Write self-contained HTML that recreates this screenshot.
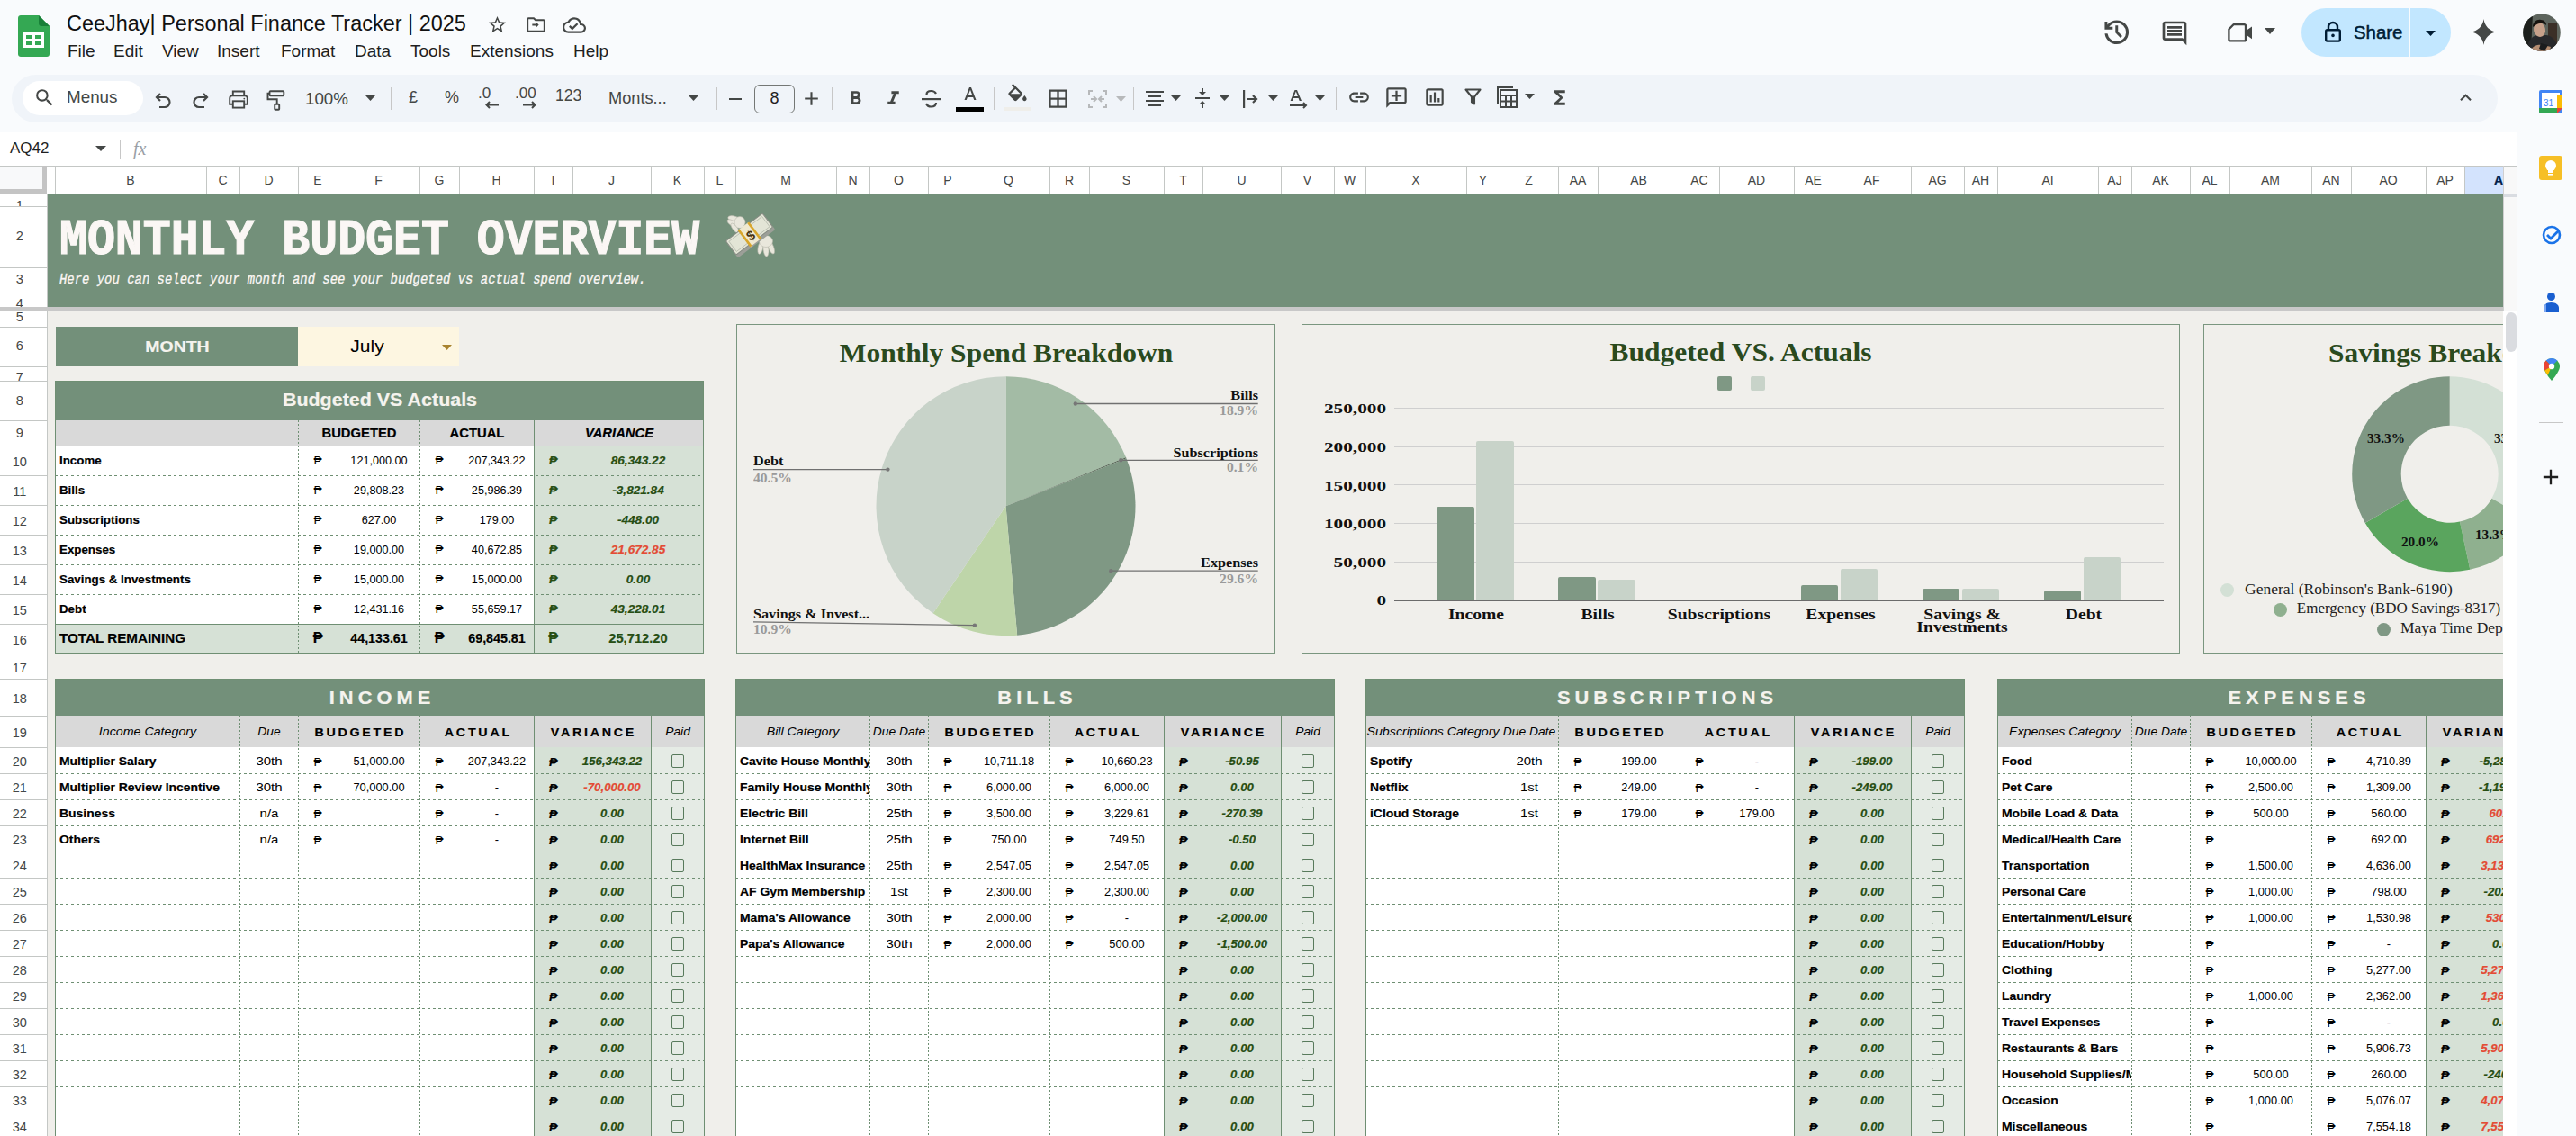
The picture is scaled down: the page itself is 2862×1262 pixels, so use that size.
<!DOCTYPE html>
<html><head><meta charset="utf-8"><title>Sheets</title>
<style>
html,body{margin:0;padding:0;}
body{width:2862px;height:1262px;overflow:hidden;position:relative;background:#f9fbfd;font-family:"Liberation Sans",sans-serif;}
body div{position:absolute;box-sizing:border-box;}
</style></head><body>
<svg style="position:absolute;left:20px;top:17px;" width="35" height="46" viewBox="0 0 35 46"><path fill="#34a853" d="M3 0h20l12 12v31c0 1.7-1.3 3-3 3H3c-1.7 0-3-1.3-3-3V3C0 1.3 1.3 0 3 0z"/><path fill="#188038" d="M23 0l12 12H26c-1.7 0-3-1.3-3-3z"/><path fill="#fff" d="M6 19h23v17H6z"/><path fill="#34a853" d="M9 22h7v4H9zM19 22h7v4h-7zM9 29h7v4H9zM19 29h7v4h-7z"/></svg>
<div style="top:11.8px;height:27.03px;line-height:27.03px;font-family:'Liberation Sans', sans-serif;font-size:24.2px;color:#111;white-space:nowrap;left:74px;transform:scaleX(0.97);transform-origin:left;">CeeJhay| Personal Finance Tracker | 2025</div>
<svg style="position:absolute;left:541px;top:16px;" width="23" height="23" viewBox="0 0 24 24"><path fill="#444746" d="M22 9.24l-7.19-.62L12 2 9.19 8.63 2 9.24l5.46 4.73L5.82 21 12 17.27 18.18 21l-1.63-7.03L22 9.24zM12 15.4l-3.76 2.27 1-4.28-3.32-2.88 4.38-.38L12 6.1l1.71 4.04 4.38.38-3.32 2.88 1 4.28L12 15.4z"/></svg>
<svg style="position:absolute;left:583px;top:15px;" width="25" height="25" viewBox="0 0 24 24"><path fill="#444746" d="M20 6h-8l-2-2H4c-1.1 0-1.99.9-1.99 2L2 18c0 1.1.9 2 2 2h16c1.1 0 2-.9 2-2V8c0-1.1-.9-2-2-2zm0 12H4V6h5.17l2 2H20v10zm-8.01-7H8v2h3.99v2L15 12l-3.01-2.99z"/></svg>
<svg style="position:absolute;left:625px;top:15px;" width="26" height="26" viewBox="0 0 24 24"><path fill="#444746" d="M19.35 10.04C18.67 6.59 15.64 4 12 4 9.11 4 6.6 5.64 5.35 8.04 2.34 8.36 0 10.91 0 14c0 3.31 2.69 6 6 6h13c2.76 0 5-2.24 5-5 0-2.64-2.05-4.78-4.65-4.96zM19 18H6c-2.21 0-4-1.79-4-4 0-2.05 1.53-3.76 3.56-3.97l1.07-.11.5-.95C8.08 7.14 9.94 6 12 6c2.62 0 4.88 1.86 5.39 4.43l.3 1.5 1.53.11c1.56.1 2.78 1.41 2.78 2.96 0 1.65-1.35 3-3 3zm-9-3.82l-2.09-2.09L6.5 13.5 10 17l6.01-6.01-1.41-1.41z"/></svg>
<div style="top:46.01px;height:21.22px;line-height:21.22px;font-family:'Liberation Sans', sans-serif;font-size:19px;color:#1f1f1f;white-space:nowrap;left:75px;">File</div>
<div style="top:46.01px;height:21.22px;line-height:21.22px;font-family:'Liberation Sans', sans-serif;font-size:19px;color:#1f1f1f;white-space:nowrap;left:126px;">Edit</div>
<div style="top:46.01px;height:21.22px;line-height:21.22px;font-family:'Liberation Sans', sans-serif;font-size:19px;color:#1f1f1f;white-space:nowrap;left:180px;">View</div>
<div style="top:46.01px;height:21.22px;line-height:21.22px;font-family:'Liberation Sans', sans-serif;font-size:19px;color:#1f1f1f;white-space:nowrap;left:241px;">Insert</div>
<div style="top:46.01px;height:21.22px;line-height:21.22px;font-family:'Liberation Sans', sans-serif;font-size:19px;color:#1f1f1f;white-space:nowrap;left:312px;">Format</div>
<div style="top:46.01px;height:21.22px;line-height:21.22px;font-family:'Liberation Sans', sans-serif;font-size:19px;color:#1f1f1f;white-space:nowrap;left:394px;">Data</div>
<div style="top:46.01px;height:21.22px;line-height:21.22px;font-family:'Liberation Sans', sans-serif;font-size:19px;color:#1f1f1f;white-space:nowrap;left:456px;">Tools</div>
<div style="top:46.01px;height:21.22px;line-height:21.22px;font-family:'Liberation Sans', sans-serif;font-size:19px;color:#1f1f1f;white-space:nowrap;left:522px;">Extensions</div>
<div style="top:46.01px;height:21.22px;line-height:21.22px;font-family:'Liberation Sans', sans-serif;font-size:19px;color:#1f1f1f;white-space:nowrap;left:637px;">Help</div>
<svg style="position:absolute;left:2334.2px;top:17.8px;" width="35.5" height="35.5" viewBox="0 -960 960 960"><path fill="#444746" d="M480-120q-138 0-240.5-91.5T122-440h82q14 104 92.5 172T480-200q117 0 198.5-81.5T760-480q0-117-81.5-198.5T480-760q-69 0-129 32t-101 88h110v80H120v-240h80v94q51-64 124.5-99T480-840q75 0 140.5 28.5t114 77q48.5 48.5 77 114T840-480q0 75-28.5 140.5t-77 114q-48.5 48.5-114 77T480-120Zm112-192L440-464v-216h80v184l128 128-56 56Z"/></svg>
<svg style="position:absolute;left:2400px;top:21px;" width="32" height="32" viewBox="0 0 24 24"><path fill="#444746" d="M21.99 4c0-1.1-.89-2-1.99-2H4c-1.1 0-2 .9-2 2v12c0 1.1.9 2 2 2h14l4 4-.01-18zM20 4v13.17L18.83 16H4V4h16zM6 12h12v2H6zm0-3h12v2H6zm0-3h12v2H6z"/></svg>
<svg style="position:absolute;left:2474px;top:24px;" width="30" height="26" viewBox="0 0 30 26"><path fill="none" stroke="#444746" stroke-width="2.3" stroke-linejoin="round" d="M7.5 3.2h12a1.5 1.5 0 011.5 1.5v15.2a1.5 1.5 0 01-1.5 1.5H3.9a1.5 1.5 0 01-1.5-1.5V8.5z"/><path fill="#444746" d="M21 10.3L28 5.4v13.8L21 14.3z"/></svg>
<svg style="position:absolute;left:2516px;top:31px;" width="12" height="8" viewBox="0 0 12 8"><path fill="#444746" d="M0 0h12L6 7z"/></svg>
<div style="left:2557px;top:9px;width:166px;height:54px;background:#c2e7ff;border-radius:27px;"></div>
<div style="left:2677px;top:9px;width:1px;height:54px;background:#f9fbfd;"></div>
<svg style="position:absolute;left:2582px;top:23px;" width="20" height="24" viewBox="0 0 20 24"><path fill="none" stroke="#001d35" stroke-width="2.4" d="M5 10V7a5 5 0 0110 0v3"/><rect x="2.2" y="10.2" width="15.6" height="12.4" rx="1.5" fill="none" stroke="#001d35" stroke-width="2.4"/><circle cx="10" cy="16.4" r="1.8" fill="#001d35"/></svg>
<div style="top:24.5px;height:22.34px;line-height:22.34px;font-family:'Liberation Sans', sans-serif;font-size:20px;color:#001d35;white-space:nowrap;left:2614.5px;transform:scaleX(1.02);transform-origin:left;-webkit-text-stroke:0.5px #001d35;">Share</div>
<svg style="position:absolute;left:2695px;top:33.5px;" width="11" height="6" viewBox="0 0 11 6"><path fill="#001d35" d="M0 0h11L5.5 6z"/></svg>
<svg style="position:absolute;left:2745px;top:21px;" width="29" height="29" viewBox="0 0 29 29"><path fill="#444746" d="M14.5 0C15.5 8 21 13.5 29 14.5 21 15.5 15.5 21 14.5 29 13.5 21 8 15.5 0 14.5 8 13.5 13.5 8 14.5 0z"/></svg>
<svg style="position:absolute;left:2803px;top:15px;" width="42" height="42" viewBox="0 0 42 42"><defs><clipPath id="av"><circle cx="21" cy="21" r="20.8"/></clipPath></defs><g clip-path="url(#av)"><rect width="42" height="42" fill="#5d645d"/><path d="M0 0h11l-2 42H0z" fill="#1c1f1c"/><rect x="28" y="11" width="10" height="26" fill="#3b2f27"/><path d="M4 42c1-10 5-17 12-18h10c7 1 12 6 13 18z" fill="#27282b"/><ellipse cx="18.5" cy="18" rx="6.5" ry="8" fill="#c6a08a" transform="rotate(-12 18.5 18)"/><path d="M11 15c0-6 5-9 9-8 4 0 6 3 6 6-3-3-8-3-12 0z" fill="#16130f"/><path d="M9 40c3-5 8-6 14-5l8 2-2 6H9z" fill="#b58d72"/><path d="M20 33l8 2-4 7-6-3z" fill="#1b1c1e"/></g></svg>
<div style="left:13px;top:83px;width:2762px;height:53px;background:#f0f4f9;border-radius:27px;"></div>
<div style="left:25px;top:90px;width:134px;height:38px;background:#ffffff;border-radius:19px;"></div>
<svg style="position:absolute;left:37px;top:96px;" width="25" height="25" viewBox="0 0 24 24"><path fill="#444746" d="M15.5 14h-.79l-.28-.27A6.471 6.471 0 0016 9.5 6.5 6.5 0 109.5 16c1.61 0 3.09-.59 4.23-1.57l.27.28v.79l5 4.99L20.49 19l-4.99-5zm-6 0C7.01 14 5 11.99 5 9.5S7.01 5 9.5 5 14 7.01 14 9.5 11.99 14 9.5 14z"/></svg>
<div style="top:98.87px;height:19.66px;line-height:19.66px;font-family:'Liberation Sans', sans-serif;font-size:17.6px;color:#444746;white-space:nowrap;left:74px;transform:scaleX(1.07);transform-origin:left;">Menus</div>
<div style="left:0px;top:1.5px;width:0;height:0;">
<svg style="position:absolute;left:172px;top:97px;" width="19" height="22" viewBox="0 0 19 22"><path fill="none" stroke="#444746" stroke-width="2.2" d="M6 5L2 9l4 4M2.5 9H11a5.5 5.5 0 010 11H5"/></svg>
<svg style="position:absolute;left:213px;top:97px;" width="19" height="22" viewBox="0 0 19 22"><path fill="none" stroke="#444746" stroke-width="2.2" d="M13 5l4 4-4 4M16.5 9H8a5.5 5.5 0 000 11h6"/></svg>
<svg style="position:absolute;left:252px;top:97px;" width="26" height="24" viewBox="0 0 26 24"><g fill="none" stroke="#444746" stroke-width="1.9"><path d="M6.8 7.2V2.5h12.4v4.7"/><path d="M6.5 16.8H3.2V10a2.6 2.6 0 012.6-2.6h14.4a2.6 2.6 0 012.6 2.6v6.8h-3.3"/><rect x="6.8" y="13.3" width="12.4" height="7.3"/></g><circle cx="19.3" cy="10.6" r="0.9" fill="#444746"/></svg>
<svg style="position:absolute;left:295px;top:97px;" width="22" height="25" viewBox="0 0 22 25"><g fill="none" stroke="#444746" stroke-width="1.9"><rect x="4.5" y="2.3" width="15.8" height="5" rx="1"/><path d="M4.5 4.8H2.5v6.5h10.2v5.5"/><rect x="10.2" y="16.8" width="5" height="6" rx="0.8"/></g></svg>
<div style="top:98.73px;height:20.33px;line-height:20.33px;font-family:'Liberation Sans', sans-serif;font-size:18.2px;color:#444746;white-space:nowrap;left:339px;transform:scaleX(1.03);transform-origin:left;">100%</div>
<svg style="position:absolute;left:406px;top:104px;" width="11" height="6" viewBox="0 0 11 6"><path fill="#444746" d="M0 0h11L5.5 6z"/></svg>
<div style="left:434px;top:95px;width:1px;height:25px;background:#c7c7c7;"></div>
<div style="top:96.01px;height:20.11px;line-height:20.11px;font-family:'Liberation Sans', sans-serif;font-size:18px;color:#444746;white-space:nowrap;left:454px;">£</div>
<div style="top:96.01px;height:20.11px;line-height:20.11px;font-family:'Liberation Sans', sans-serif;font-size:18px;color:#444746;white-space:nowrap;left:494px;">%</div>
<div style="top:92.81px;height:18.99px;line-height:18.99px;font-family:'Liberation Sans', sans-serif;font-size:17px;color:#444746;white-space:nowrap;left:531px;">.0</div>
<svg style="position:absolute;left:538px;top:110px;" width="17" height="9" viewBox="0 0 17 9"><path fill="none" stroke="#444746" stroke-width="2" d="M16 4.5H3M6 1L2.5 4.5 6 8"/></svg>
<div style="top:92.81px;height:18.99px;line-height:18.99px;font-family:'Liberation Sans', sans-serif;font-size:17px;color:#444746;white-space:nowrap;left:572px;">.00</div>
<svg style="position:absolute;left:580px;top:110px;" width="17" height="9" viewBox="0 0 17 9"><path fill="none" stroke="#444746" stroke-width="2" d="M1 4.5h13M11 1l3.5 3.5L11 8"/></svg>
<div style="top:95.46px;height:19.55px;line-height:19.55px;font-family:'Liberation Sans', sans-serif;font-size:17.5px;color:#444746;white-space:nowrap;left:617px;">123</div>
<div style="left:655px;top:95px;width:1px;height:25px;background:#c7c7c7;"></div>
<div style="top:97.73px;height:20.33px;line-height:20.33px;font-family:'Liberation Sans', sans-serif;font-size:18.2px;color:#444746;white-space:nowrap;left:676px;">Monts...</div>
<svg style="position:absolute;left:765px;top:104px;" width="11" height="6" viewBox="0 0 11 6"><path fill="#444746" d="M0 0h11L5.5 6z"/></svg>
<div style="left:796px;top:95px;width:1px;height:25px;background:#c7c7c7;"></div>
<div style="left:810px;top:107px;width:14px;height:2px;background:#444746;"></div>
<div style="left:838px;top:92px;width:45px;height:32px;border:1.3px solid #747775;border-radius:6px;"></div>
<div style="top:97.91px;height:20.11px;line-height:20.11px;font-family:'Liberation Sans', sans-serif;font-size:18px;color:#1f1f1f;white-space:nowrap;left:-139.5px;width:2000px;text-align:center;">8</div>
<svg style="position:absolute;left:889px;top:95px;" width="25" height="25" viewBox="0 0 24 24"><path fill="#444746" d="M19 13h-6v6h-2v-6H5v-2h6V5h2v6h6v2z"/></svg>
<div style="left:924px;top:95px;width:1px;height:25px;background:#c7c7c7;"></div>
<svg style="position:absolute;left:938px;top:95px;" width="25" height="25" viewBox="0 0 24 24"><path fill="#444746" d="M15.6 10.79c.97-.67 1.65-1.77 1.65-2.79 0-2.26-1.75-4-4-4H7v14h7.04c2.09 0 3.71-1.7 3.71-3.79 0-1.52-.86-2.82-2.15-3.42zM10 6.5h3c.83 0 1.5.67 1.5 1.5s-.67 1.5-1.5 1.5h-3v-3zm3.5 9H10v-3h3.5c.83 0 1.5.67 1.5 1.5s-.67 1.5-1.5 1.5z"/></svg>
<svg style="position:absolute;left:980px;top:95px;" width="25" height="25" viewBox="0 0 24 24"><path fill="#444746" d="M10 4v3h2.21l-3.42 8H6v3h8v-3h-2.21l3.42-8H18V4z"/></svg>
<svg style="position:absolute;left:1023px;top:96px;" width="23" height="24" viewBox="0 0 23 24"><path fill="none" stroke="#444746" stroke-width="2.2" d="M17 6c-1-2-3-3-5.5-3C8.5 3 6.5 4.5 6.5 7M6 17c1 2.5 3 3.5 5.5 3.5 3 0 5.5-1.5 5.5-4.5"/><path fill="#444746" d="M1 11h21v2.2H1z"/></svg>
<svg style="position:absolute;left:1066px;top:92px;" width="24" height="24" viewBox="0 0 24 24"><path fill="#444746" d="M11 3L5.5 17h2.25l1.12-3h6.25l1.12 3h2.25L13 3h-2zm-1.38 9L12 5.67 14.38 12H9.62z"/></svg>
<div style="left:1062px;top:117px;width:31px;height:5px;background:#000000;"></div>
<div style="left:1104px;top:95px;width:1px;height:25px;background:#c7c7c7;"></div>
<svg style="position:absolute;left:1117px;top:91px;" width="27" height="27" viewBox="0 0 24 24"><path fill="#444746" d="M16.56 8.94L7.62 0 6.21 1.41l2.38 2.38-5.15 5.15c-.59.59-.59 1.54 0 2.12l5.5 5.5c.29.29.68.44 1.06.44s.77-.15 1.06-.44l5.5-5.5c.59-.58.59-1.53 0-2.12zM5.21 10L10 5.21 14.79 10H5.21zM19 11.5s-2 2.17-2 3.5c0 1.1.9 2 2 2s2-.9 2-2c0-1.33-2-3.5-2-3.5z"/></svg>
<div style="left:1116px;top:117px;width:30px;height:4px;background:#efeeea;"></div>
<svg style="position:absolute;left:1162px;top:94px;" width="27" height="27" viewBox="0 0 24 24"><path fill="#444746" d="M3 3v18h18V3H3zm8 16H5v-6h6v6zm0-8H5V5h6v6zm8 8h-6v-6h6v6zm0-8h-6V5h6v6z"/></svg>
<svg style="position:absolute;left:1209px;top:98px;" width="21" height="20" viewBox="0 0 21 20"><path fill="none" stroke="#b7b9bb" stroke-width="2" d="M1 5V1h4M16 1h4v4M1 15v4h4M16 19h4v-4M3 10h5M6 7l3 3-3 3M18 10h-5M15 7l-3 3 3 3"/></svg>
<svg style="position:absolute;left:1240px;top:105px;" width="11" height="6" viewBox="0 0 11 6"><path fill="#b7b9bb" d="M0 0h11L5.5 6z"/></svg>
<div style="left:1259px;top:95px;width:1px;height:25px;background:#c7c7c7;"></div>
<svg style="position:absolute;left:1273px;top:98px;" width="20" height="20" viewBox="0 0 20 20"><path fill="#444746" d="M0 1h20v2H0zM3 6h14v2H3zM0 11h20v2H0zM3 16h14v2H3z"/></svg>
<svg style="position:absolute;left:1301px;top:104px;" width="11" height="6" viewBox="0 0 11 6"><path fill="#444746" d="M0 0h11L5.5 6z"/></svg>
<svg style="position:absolute;left:1324px;top:95px;" width="24" height="24" viewBox="0 0 24 24"><path fill="#444746" d="M8 19h3v4h2v-4h3l-4-4-4 4zm8-14h-3V1h-2v4H8l4 4 4-4zM4 11v2h16v-2H4z"/></svg>
<svg style="position:absolute;left:1355px;top:104px;" width="11" height="6" viewBox="0 0 11 6"><path fill="#444746" d="M0 0h11L5.5 6z"/></svg>
<svg style="position:absolute;left:1381px;top:98px;" width="17" height="20" viewBox="0 0 17 20"><path fill="#444746" d="M0 0h2.2v20H0z"/><path fill="none" stroke="#444746" stroke-width="2.2" d="M5 10h10M11 6l4 4-4 4"/></svg>
<svg style="position:absolute;left:1409px;top:104px;" width="11" height="6" viewBox="0 0 11 6"><path fill="#444746" d="M0 0h11L5.5 6z"/></svg>
<svg style="position:absolute;left:1432px;top:96px;" width="22" height="24" viewBox="0 0 22 24"><path fill="#444746" d="M6.5 2h2.5l5 12h-2.3l-1.1-3H5l-1.1 3H1.6zM5.8 9h4.1L7.8 3.6z"/><path fill="none" stroke="#444746" stroke-width="2" d="M1 19h18M16 16l3 3-3 3"/></svg>
<svg style="position:absolute;left:1461px;top:104px;" width="11" height="6" viewBox="0 0 11 6"><path fill="#444746" d="M0 0h11L5.5 6z"/></svg>
<div style="left:1484px;top:95px;width:1px;height:25px;background:#c7c7c7;"></div>
</div>
<svg style="position:absolute;left:1497px;top:95px;" width="26" height="26" viewBox="0 0 24 24"><path fill="#444746" d="M3.9 12c0-1.71 1.39-3.1 3.1-3.1h4V7H7c-2.76 0-5 2.24-5 5s2.24 5 5 5h4v-1.9H7c-1.71 0-3.1-1.39-3.1-3.1zM8 13h8v-2H8v2zm9-6h-4v1.9h4c1.71 0 3.1 1.39 3.1 3.1s-1.39 3.1-3.1 3.1h-4V17h4c2.76 0 5-2.24 5-5s-2.24-5-5-5z"/></svg>
<svg style="position:absolute;left:1538px;top:95px;" width="27" height="27" viewBox="0 0 24 24"><g transform="translate(24 0) scale(-1 1)"><path fill="#444746" d="M22 4c0-1.1-.9-2-2-2H4c-1.1 0-1.99.9-1.99 2L2 16c0 1.1.9 2 2 2h14l4 4V4zm-2 13.17L18.83 16H4V4h16v13.17zM13 5h-2v4H7v2h4v4h2v-4h4V9h-4z"/></g></svg>
<svg style="position:absolute;left:1581px;top:95px;" width="26" height="26" viewBox="0 0 24 24"><path fill="#444746" d="M19 3H5c-1.1 0-2 .9-2 2v14c0 1.1.9 2 2 2h14c1.1 0 2-.9 2-2V5c0-1.1-.9-2-2-2zm0 16H5V5h14v14zM7 10h2v7H7zm4-3h2v10h-2zm4 6h2v4h-2z"/></svg>
<svg style="position:absolute;left:1627px;top:98px;" width="19" height="20" viewBox="0 0 19 20"><path fill="none" stroke="#444746" stroke-width="2.1" stroke-linejoin="round" d="M1.5 1.5h16L11 9.5v8l-3-2v-6z"/></svg>
<svg style="position:absolute;left:1662px;top:95px;" width="25" height="26" viewBox="0 0 25 26"><path fill="none" stroke="#444746" stroke-width="2" d="M5 5h18v19H5zM5 11h18M5 17.5h18M11 11v13M17 11v13M2 21V2h17"/></svg>
<svg style="position:absolute;left:1694px;top:104px;" width="11" height="6" viewBox="0 0 11 6"><path fill="#444746" d="M0 0h11L5.5 6z"/></svg>
<svg style="position:absolute;left:1720px;top:96px;" width="25" height="25" viewBox="0 0 24 24"><path fill="#444746" d="M18 4H6v2l6.5 6L6 18v2h12v-3h-7l5-5-5-5h7z"/></svg>
<svg style="position:absolute;left:2727px;top:96px;" width="25" height="25" viewBox="0 0 24 24"><path fill="#444746" d="M12 8l-6 6 1.41 1.41L12 10.83l4.59 4.58L18 14z"/></svg>
<div style="left:0px;top:147px;width:2797px;height:37px;background:#ffffff;"></div>
<div style="top:155.42px;height:18.99px;line-height:18.99px;font-family:'Liberation Sans', sans-serif;font-size:17px;color:#1f1f1f;white-space:nowrap;left:11px;">AQ42</div>
<svg style="position:absolute;left:106px;top:162px;" width="12" height="6" viewBox="0 0 12 6"><path fill="#444746" d="M0 0h12L6 6z"/></svg>
<div style="left:133px;top:155px;width:1px;height:22px;background:#c7c7c7;"></div>
<div style="top:154.18px;height:22.14px;line-height:22.14px;font-family:'Liberation Serif', serif;font-size:20px;color:#9aa0a6;white-space:nowrap;left:148px;"><i>fx</i></div>
<div style="left:0px;top:184px;width:2781px;height:32px;background:#ffffff;"></div>
<div style="left:0px;top:183.5px;width:2781px;height:1px;background:#c4c7c5;"></div>
<div style="left:0px;top:185px;width:47px;height:25px;background:#f8f9fa;"></div>
<div style="left:47px;top:184px;width:5px;height:32px;background:#c4c4c4;"></div>
<div style="left:0px;top:210px;width:52px;height:6px;background:#c4c4c4;"></div>
<div style="left:61px;top:184px;width:1px;height:32px;background:#c4c7c5;"></div>
<div style="top:192.63px;height:15.64px;line-height:15.64px;font-family:'Liberation Sans', sans-serif;font-size:14px;color:#444746;white-space:nowrap;left:-855px;width:2000px;text-align:center;">B</div>
<div style="left:229px;top:184px;width:1px;height:32px;background:#c4c7c5;"></div>
<div style="top:192.63px;height:15.64px;line-height:15.64px;font-family:'Liberation Sans', sans-serif;font-size:14px;color:#444746;white-space:nowrap;left:-752.5px;width:2000px;text-align:center;">C</div>
<div style="left:266px;top:184px;width:1px;height:32px;background:#c4c7c5;"></div>
<div style="top:192.63px;height:15.64px;line-height:15.64px;font-family:'Liberation Sans', sans-serif;font-size:14px;color:#444746;white-space:nowrap;left:-701.5px;width:2000px;text-align:center;">D</div>
<div style="left:331px;top:184px;width:1px;height:32px;background:#c4c7c5;"></div>
<div style="top:192.63px;height:15.64px;line-height:15.64px;font-family:'Liberation Sans', sans-serif;font-size:14px;color:#444746;white-space:nowrap;left:-647px;width:2000px;text-align:center;">E</div>
<div style="left:375px;top:184px;width:1px;height:32px;background:#c4c7c5;"></div>
<div style="top:192.63px;height:15.64px;line-height:15.64px;font-family:'Liberation Sans', sans-serif;font-size:14px;color:#444746;white-space:nowrap;left:-579.5px;width:2000px;text-align:center;">F</div>
<div style="left:466px;top:184px;width:1px;height:32px;background:#c4c7c5;"></div>
<div style="top:192.63px;height:15.64px;line-height:15.64px;font-family:'Liberation Sans', sans-serif;font-size:14px;color:#444746;white-space:nowrap;left:-512px;width:2000px;text-align:center;">G</div>
<div style="left:510px;top:184px;width:1px;height:32px;background:#c4c7c5;"></div>
<div style="top:192.63px;height:15.64px;line-height:15.64px;font-family:'Liberation Sans', sans-serif;font-size:14px;color:#444746;white-space:nowrap;left:-448.5px;width:2000px;text-align:center;">H</div>
<div style="left:593px;top:184px;width:1px;height:32px;background:#c4c7c5;"></div>
<div style="top:192.63px;height:15.64px;line-height:15.64px;font-family:'Liberation Sans', sans-serif;font-size:14px;color:#444746;white-space:nowrap;left:-385.5px;width:2000px;text-align:center;">I</div>
<div style="left:636px;top:184px;width:1px;height:32px;background:#c4c7c5;"></div>
<div style="top:192.63px;height:15.64px;line-height:15.64px;font-family:'Liberation Sans', sans-serif;font-size:14px;color:#444746;white-space:nowrap;left:-320.5px;width:2000px;text-align:center;">J</div>
<div style="left:723px;top:184px;width:1px;height:32px;background:#c4c7c5;"></div>
<div style="top:192.63px;height:15.64px;line-height:15.64px;font-family:'Liberation Sans', sans-serif;font-size:14px;color:#444746;white-space:nowrap;left:-247.5px;width:2000px;text-align:center;">K</div>
<div style="left:782px;top:184px;width:1px;height:32px;background:#c4c7c5;"></div>
<div style="top:192.63px;height:15.64px;line-height:15.64px;font-family:'Liberation Sans', sans-serif;font-size:14px;color:#444746;white-space:nowrap;left:-200.5px;width:2000px;text-align:center;">L</div>
<div style="left:817px;top:184px;width:1px;height:32px;background:#c4c7c5;"></div>
<div style="top:192.63px;height:15.64px;line-height:15.64px;font-family:'Liberation Sans', sans-serif;font-size:14px;color:#444746;white-space:nowrap;left:-127px;width:2000px;text-align:center;">M</div>
<div style="left:929px;top:184px;width:1px;height:32px;background:#c4c7c5;"></div>
<div style="top:192.63px;height:15.64px;line-height:15.64px;font-family:'Liberation Sans', sans-serif;font-size:14px;color:#444746;white-space:nowrap;left:-52.5px;width:2000px;text-align:center;">N</div>
<div style="left:966px;top:184px;width:1px;height:32px;background:#c4c7c5;"></div>
<div style="top:192.63px;height:15.64px;line-height:15.64px;font-family:'Liberation Sans', sans-serif;font-size:14px;color:#444746;white-space:nowrap;left:-1.5px;width:2000px;text-align:center;">O</div>
<div style="left:1031px;top:184px;width:1px;height:32px;background:#c4c7c5;"></div>
<div style="top:192.63px;height:15.64px;line-height:15.64px;font-family:'Liberation Sans', sans-serif;font-size:14px;color:#444746;white-space:nowrap;left:53px;width:2000px;text-align:center;">P</div>
<div style="left:1075px;top:184px;width:1px;height:32px;background:#c4c7c5;"></div>
<div style="top:192.63px;height:15.64px;line-height:15.64px;font-family:'Liberation Sans', sans-serif;font-size:14px;color:#444746;white-space:nowrap;left:120.5px;width:2000px;text-align:center;">Q</div>
<div style="left:1166px;top:184px;width:1px;height:32px;background:#c4c7c5;"></div>
<div style="top:192.63px;height:15.64px;line-height:15.64px;font-family:'Liberation Sans', sans-serif;font-size:14px;color:#444746;white-space:nowrap;left:188px;width:2000px;text-align:center;">R</div>
<div style="left:1210px;top:184px;width:1px;height:32px;background:#c4c7c5;"></div>
<div style="top:192.63px;height:15.64px;line-height:15.64px;font-family:'Liberation Sans', sans-serif;font-size:14px;color:#444746;white-space:nowrap;left:251.5px;width:2000px;text-align:center;">S</div>
<div style="left:1293px;top:184px;width:1px;height:32px;background:#c4c7c5;"></div>
<div style="top:192.63px;height:15.64px;line-height:15.64px;font-family:'Liberation Sans', sans-serif;font-size:14px;color:#444746;white-space:nowrap;left:314.5px;width:2000px;text-align:center;">T</div>
<div style="left:1336px;top:184px;width:1px;height:32px;background:#c4c7c5;"></div>
<div style="top:192.63px;height:15.64px;line-height:15.64px;font-family:'Liberation Sans', sans-serif;font-size:14px;color:#444746;white-space:nowrap;left:379.5px;width:2000px;text-align:center;">U</div>
<div style="left:1423px;top:184px;width:1px;height:32px;background:#c4c7c5;"></div>
<div style="top:192.63px;height:15.64px;line-height:15.64px;font-family:'Liberation Sans', sans-serif;font-size:14px;color:#444746;white-space:nowrap;left:452.5px;width:2000px;text-align:center;">V</div>
<div style="left:1482px;top:184px;width:1px;height:32px;background:#c4c7c5;"></div>
<div style="top:192.63px;height:15.64px;line-height:15.64px;font-family:'Liberation Sans', sans-serif;font-size:14px;color:#444746;white-space:nowrap;left:499.5px;width:2000px;text-align:center;">W</div>
<div style="left:1517px;top:184px;width:1px;height:32px;background:#c4c7c5;"></div>
<div style="top:192.63px;height:15.64px;line-height:15.64px;font-family:'Liberation Sans', sans-serif;font-size:14px;color:#444746;white-space:nowrap;left:573px;width:2000px;text-align:center;">X</div>
<div style="left:1629px;top:184px;width:1px;height:32px;background:#c4c7c5;"></div>
<div style="top:192.63px;height:15.64px;line-height:15.64px;font-family:'Liberation Sans', sans-serif;font-size:14px;color:#444746;white-space:nowrap;left:647.5px;width:2000px;text-align:center;">Y</div>
<div style="left:1666px;top:184px;width:1px;height:32px;background:#c4c7c5;"></div>
<div style="top:192.63px;height:15.64px;line-height:15.64px;font-family:'Liberation Sans', sans-serif;font-size:14px;color:#444746;white-space:nowrap;left:698.5px;width:2000px;text-align:center;">Z</div>
<div style="left:1731px;top:184px;width:1px;height:32px;background:#c4c7c5;"></div>
<div style="top:192.63px;height:15.64px;line-height:15.64px;font-family:'Liberation Sans', sans-serif;font-size:14px;color:#444746;white-space:nowrap;left:753px;width:2000px;text-align:center;">AA</div>
<div style="left:1775px;top:184px;width:1px;height:32px;background:#c4c7c5;"></div>
<div style="top:192.63px;height:15.64px;line-height:15.64px;font-family:'Liberation Sans', sans-serif;font-size:14px;color:#444746;white-space:nowrap;left:820.5px;width:2000px;text-align:center;">AB</div>
<div style="left:1866px;top:184px;width:1px;height:32px;background:#c4c7c5;"></div>
<div style="top:192.63px;height:15.64px;line-height:15.64px;font-family:'Liberation Sans', sans-serif;font-size:14px;color:#444746;white-space:nowrap;left:888px;width:2000px;text-align:center;">AC</div>
<div style="left:1910px;top:184px;width:1px;height:32px;background:#c4c7c5;"></div>
<div style="top:192.63px;height:15.64px;line-height:15.64px;font-family:'Liberation Sans', sans-serif;font-size:14px;color:#444746;white-space:nowrap;left:951.5px;width:2000px;text-align:center;">AD</div>
<div style="left:1993px;top:184px;width:1px;height:32px;background:#c4c7c5;"></div>
<div style="top:192.63px;height:15.64px;line-height:15.64px;font-family:'Liberation Sans', sans-serif;font-size:14px;color:#444746;white-space:nowrap;left:1014.5px;width:2000px;text-align:center;">AE</div>
<div style="left:2036px;top:184px;width:1px;height:32px;background:#c4c7c5;"></div>
<div style="top:192.63px;height:15.64px;line-height:15.64px;font-family:'Liberation Sans', sans-serif;font-size:14px;color:#444746;white-space:nowrap;left:1079.5px;width:2000px;text-align:center;">AF</div>
<div style="left:2123px;top:184px;width:1px;height:32px;background:#c4c7c5;"></div>
<div style="top:192.63px;height:15.64px;line-height:15.64px;font-family:'Liberation Sans', sans-serif;font-size:14px;color:#444746;white-space:nowrap;left:1152.5px;width:2000px;text-align:center;">AG</div>
<div style="left:2182px;top:184px;width:1px;height:32px;background:#c4c7c5;"></div>
<div style="top:192.63px;height:15.64px;line-height:15.64px;font-family:'Liberation Sans', sans-serif;font-size:14px;color:#444746;white-space:nowrap;left:1200.5px;width:2000px;text-align:center;">AH</div>
<div style="left:2219px;top:184px;width:1px;height:32px;background:#c4c7c5;"></div>
<div style="top:192.63px;height:15.64px;line-height:15.64px;font-family:'Liberation Sans', sans-serif;font-size:14px;color:#444746;white-space:nowrap;left:1275px;width:2000px;text-align:center;">AI</div>
<div style="left:2331px;top:184px;width:1px;height:32px;background:#c4c7c5;"></div>
<div style="top:192.63px;height:15.64px;line-height:15.64px;font-family:'Liberation Sans', sans-serif;font-size:14px;color:#444746;white-space:nowrap;left:1349.5px;width:2000px;text-align:center;">AJ</div>
<div style="left:2368px;top:184px;width:1px;height:32px;background:#c4c7c5;"></div>
<div style="top:192.63px;height:15.64px;line-height:15.64px;font-family:'Liberation Sans', sans-serif;font-size:14px;color:#444746;white-space:nowrap;left:1400.5px;width:2000px;text-align:center;">AK</div>
<div style="left:2433px;top:184px;width:1px;height:32px;background:#c4c7c5;"></div>
<div style="top:192.63px;height:15.64px;line-height:15.64px;font-family:'Liberation Sans', sans-serif;font-size:14px;color:#444746;white-space:nowrap;left:1455px;width:2000px;text-align:center;">AL</div>
<div style="left:2477px;top:184px;width:1px;height:32px;background:#c4c7c5;"></div>
<div style="top:192.63px;height:15.64px;line-height:15.64px;font-family:'Liberation Sans', sans-serif;font-size:14px;color:#444746;white-space:nowrap;left:1522.5px;width:2000px;text-align:center;">AM</div>
<div style="left:2568px;top:184px;width:1px;height:32px;background:#c4c7c5;"></div>
<div style="top:192.63px;height:15.64px;line-height:15.64px;font-family:'Liberation Sans', sans-serif;font-size:14px;color:#444746;white-space:nowrap;left:1590px;width:2000px;text-align:center;">AN</div>
<div style="left:2612px;top:184px;width:1px;height:32px;background:#c4c7c5;"></div>
<div style="top:192.63px;height:15.64px;line-height:15.64px;font-family:'Liberation Sans', sans-serif;font-size:14px;color:#444746;white-space:nowrap;left:1653.5px;width:2000px;text-align:center;">AO</div>
<div style="left:2695px;top:184px;width:1px;height:32px;background:#c4c7c5;"></div>
<div style="top:192.63px;height:15.64px;line-height:15.64px;font-family:'Liberation Sans', sans-serif;font-size:14px;color:#444746;white-space:nowrap;left:1716.5px;width:2000px;text-align:center;">AP</div>
<div style="left:2738px;top:184px;width:1px;height:32px;background:#c4c7c5;"></div>
<div style="left:2739px;top:185px;width:42px;height:31px;background:#d3e3fd;"></div>
<div style="left:2738px;top:184px;width:43px;height:32px;overflow:hidden;">
<div style="top:8.63px;height:15.64px;line-height:15.64px;font-family:'Liberation Sans', sans-serif;font-size:14px;color:#041e49;white-space:nowrap;font-weight:700;-webkit-text-stroke:0.2px #041e49;left:-956.5px;width:2000px;text-align:center;">AQ</div>
</div>
<div style="left:2825px;top:184px;width:1px;height:32px;background:#c4c7c5;"></div>
<div style="left:52px;top:215.5px;width:2729px;height:1px;background:#c4c7c5;"></div>
<div style="left:0px;top:216px;width:52px;height:1046px;background:#ffffff;"></div>
<div style="left:52px;top:216px;width:1px;height:1046px;background:#c4c7c5;"></div>
<div style="left:0px;top:216px;width:52px;height:13.5px;overflow:hidden;">
<div style="top:3.88px;height:16.2px;line-height:16.2px;font-family:'Liberation Sans', sans-serif;font-size:14.5px;color:#444746;white-space:nowrap;left:-978.3px;width:2000px;text-align:center;">1</div>
</div>
<div style="left:0px;top:228.5px;width:52px;height:1px;background:#c4c7c5;"></div>
<div style="top:253.88px;height:16.2px;line-height:16.2px;font-family:'Liberation Sans', sans-serif;font-size:14.5px;color:#444746;white-space:nowrap;left:-978.3px;width:2000px;text-align:center;">2</div>
<div style="left:0px;top:296.5px;width:52px;height:1px;background:#c4c7c5;"></div>
<div style="top:302.08px;height:16.2px;line-height:16.2px;font-family:'Liberation Sans', sans-serif;font-size:14.5px;color:#444746;white-space:nowrap;left:-978.3px;width:2000px;text-align:center;">3</div>
<div style="left:0px;top:324.5px;width:52px;height:1px;background:#c4c7c5;"></div>
<div style="left:0px;top:325px;width:52px;height:15.5px;overflow:hidden;">
<div style="top:4.38px;height:16.2px;line-height:16.2px;font-family:'Liberation Sans', sans-serif;font-size:14.5px;color:#444746;white-space:nowrap;left:-978.3px;width:2000px;text-align:center;">4</div>
</div>
<div style="left:0px;top:345px;width:52px;height:18px;overflow:hidden;">
<div style="top:-0.92px;height:16.2px;line-height:16.2px;font-family:'Liberation Sans', sans-serif;font-size:14.5px;color:#444746;white-space:nowrap;left:-978.3px;width:2000px;text-align:center;">5</div>
</div>
<div style="left:0px;top:362.5px;width:52px;height:1px;background:#c4c7c5;"></div>
<div style="top:376.08px;height:16.2px;line-height:16.2px;font-family:'Liberation Sans', sans-serif;font-size:14.5px;color:#444746;white-space:nowrap;left:-978.3px;width:2000px;text-align:center;">6</div>
<div style="left:0px;top:406.5px;width:52px;height:1px;background:#c4c7c5;"></div>
<div style="left:0px;top:407px;width:52px;height:16px;overflow:hidden;">
<div style="top:4.38px;height:16.2px;line-height:16.2px;font-family:'Liberation Sans', sans-serif;font-size:14.5px;color:#444746;white-space:nowrap;left:-978.3px;width:2000px;text-align:center;">7</div>
</div>
<div style="left:0px;top:422.5px;width:52px;height:1px;background:#c4c7c5;"></div>
<div style="top:436.68px;height:16.2px;line-height:16.2px;font-family:'Liberation Sans', sans-serif;font-size:14.5px;color:#444746;white-space:nowrap;left:-978.3px;width:2000px;text-align:center;">8</div>
<div style="left:0px;top:466.5px;width:52px;height:1px;background:#c4c7c5;"></div>
<div style="top:473.38px;height:16.2px;line-height:16.2px;font-family:'Liberation Sans', sans-serif;font-size:14.5px;color:#444746;white-space:nowrap;left:-978.3px;width:2000px;text-align:center;">9</div>
<div style="left:0px;top:494.5px;width:52px;height:1px;background:#c4c7c5;"></div>
<div style="top:505.38px;height:16.2px;line-height:16.2px;font-family:'Liberation Sans', sans-serif;font-size:14.5px;color:#444746;white-space:nowrap;left:-978.3px;width:2000px;text-align:center;">10</div>
<div style="left:0px;top:527.5px;width:52px;height:1px;background:#c4c7c5;"></div>
<div style="top:538.38px;height:16.2px;line-height:16.2px;font-family:'Liberation Sans', sans-serif;font-size:14.5px;color:#444746;white-space:nowrap;left:-978.3px;width:2000px;text-align:center;">11</div>
<div style="left:0px;top:560.5px;width:52px;height:1px;background:#c4c7c5;"></div>
<div style="top:571.38px;height:16.2px;line-height:16.2px;font-family:'Liberation Sans', sans-serif;font-size:14.5px;color:#444746;white-space:nowrap;left:-978.3px;width:2000px;text-align:center;">12</div>
<div style="left:0px;top:593.5px;width:52px;height:1px;background:#c4c7c5;"></div>
<div style="top:604.38px;height:16.2px;line-height:16.2px;font-family:'Liberation Sans', sans-serif;font-size:14.5px;color:#444746;white-space:nowrap;left:-978.3px;width:2000px;text-align:center;">13</div>
<div style="left:0px;top:626.5px;width:52px;height:1px;background:#c4c7c5;"></div>
<div style="top:637.38px;height:16.2px;line-height:16.2px;font-family:'Liberation Sans', sans-serif;font-size:14.5px;color:#444746;white-space:nowrap;left:-978.3px;width:2000px;text-align:center;">14</div>
<div style="left:0px;top:659.5px;width:52px;height:1px;background:#c4c7c5;"></div>
<div style="top:670.38px;height:16.2px;line-height:16.2px;font-family:'Liberation Sans', sans-serif;font-size:14.5px;color:#444746;white-space:nowrap;left:-978.3px;width:2000px;text-align:center;">15</div>
<div style="left:0px;top:692.5px;width:52px;height:1px;background:#c4c7c5;"></div>
<div style="top:703.38px;height:16.2px;line-height:16.2px;font-family:'Liberation Sans', sans-serif;font-size:14.5px;color:#444746;white-space:nowrap;left:-978.3px;width:2000px;text-align:center;">16</div>
<div style="left:0px;top:725.5px;width:52px;height:1px;background:#c4c7c5;"></div>
<div style="top:733.88px;height:16.2px;line-height:16.2px;font-family:'Liberation Sans', sans-serif;font-size:14.5px;color:#444746;white-space:nowrap;left:-978.3px;width:2000px;text-align:center;">17</div>
<div style="left:0px;top:753.5px;width:52px;height:1px;background:#c4c7c5;"></div>
<div style="top:768.38px;height:16.2px;line-height:16.2px;font-family:'Liberation Sans', sans-serif;font-size:14.5px;color:#444746;white-space:nowrap;left:-978.3px;width:2000px;text-align:center;">18</div>
<div style="left:0px;top:794.5px;width:52px;height:1px;background:#c4c7c5;"></div>
<div style="top:806.38px;height:16.2px;line-height:16.2px;font-family:'Liberation Sans', sans-serif;font-size:14.5px;color:#444746;white-space:nowrap;left:-978.3px;width:2000px;text-align:center;">19</div>
<div style="left:0px;top:829.5px;width:52px;height:1px;background:#c4c7c5;"></div>
<div style="top:838.38px;height:16.2px;line-height:16.2px;font-family:'Liberation Sans', sans-serif;font-size:14.5px;color:#444746;white-space:nowrap;left:-978.3px;width:2000px;text-align:center;">20</div>
<div style="left:0px;top:858.5px;width:52px;height:1px;background:#c4c7c5;"></div>
<div style="top:867.38px;height:16.2px;line-height:16.2px;font-family:'Liberation Sans', sans-serif;font-size:14.5px;color:#444746;white-space:nowrap;left:-978.3px;width:2000px;text-align:center;">21</div>
<div style="left:0px;top:887.5px;width:52px;height:1px;background:#c4c7c5;"></div>
<div style="top:896.38px;height:16.2px;line-height:16.2px;font-family:'Liberation Sans', sans-serif;font-size:14.5px;color:#444746;white-space:nowrap;left:-978.3px;width:2000px;text-align:center;">22</div>
<div style="left:0px;top:916.5px;width:52px;height:1px;background:#c4c7c5;"></div>
<div style="top:925.38px;height:16.2px;line-height:16.2px;font-family:'Liberation Sans', sans-serif;font-size:14.5px;color:#444746;white-space:nowrap;left:-978.3px;width:2000px;text-align:center;">23</div>
<div style="left:0px;top:945.5px;width:52px;height:1px;background:#c4c7c5;"></div>
<div style="top:954.38px;height:16.2px;line-height:16.2px;font-family:'Liberation Sans', sans-serif;font-size:14.5px;color:#444746;white-space:nowrap;left:-978.3px;width:2000px;text-align:center;">24</div>
<div style="left:0px;top:974.5px;width:52px;height:1px;background:#c4c7c5;"></div>
<div style="top:983.38px;height:16.2px;line-height:16.2px;font-family:'Liberation Sans', sans-serif;font-size:14.5px;color:#444746;white-space:nowrap;left:-978.3px;width:2000px;text-align:center;">25</div>
<div style="left:0px;top:1003.5px;width:52px;height:1px;background:#c4c7c5;"></div>
<div style="top:1012.38px;height:16.2px;line-height:16.2px;font-family:'Liberation Sans', sans-serif;font-size:14.5px;color:#444746;white-space:nowrap;left:-978.3px;width:2000px;text-align:center;">26</div>
<div style="left:0px;top:1032.5px;width:52px;height:1px;background:#c4c7c5;"></div>
<div style="top:1041.38px;height:16.2px;line-height:16.2px;font-family:'Liberation Sans', sans-serif;font-size:14.5px;color:#444746;white-space:nowrap;left:-978.3px;width:2000px;text-align:center;">27</div>
<div style="left:0px;top:1061.5px;width:52px;height:1px;background:#c4c7c5;"></div>
<div style="top:1070.38px;height:16.2px;line-height:16.2px;font-family:'Liberation Sans', sans-serif;font-size:14.5px;color:#444746;white-space:nowrap;left:-978.3px;width:2000px;text-align:center;">28</div>
<div style="left:0px;top:1090.5px;width:52px;height:1px;background:#c4c7c5;"></div>
<div style="top:1099.38px;height:16.2px;line-height:16.2px;font-family:'Liberation Sans', sans-serif;font-size:14.5px;color:#444746;white-space:nowrap;left:-978.3px;width:2000px;text-align:center;">29</div>
<div style="left:0px;top:1119.5px;width:52px;height:1px;background:#c4c7c5;"></div>
<div style="top:1128.38px;height:16.2px;line-height:16.2px;font-family:'Liberation Sans', sans-serif;font-size:14.5px;color:#444746;white-space:nowrap;left:-978.3px;width:2000px;text-align:center;">30</div>
<div style="left:0px;top:1148.5px;width:52px;height:1px;background:#c4c7c5;"></div>
<div style="top:1157.38px;height:16.2px;line-height:16.2px;font-family:'Liberation Sans', sans-serif;font-size:14.5px;color:#444746;white-space:nowrap;left:-978.3px;width:2000px;text-align:center;">31</div>
<div style="left:0px;top:1177.5px;width:52px;height:1px;background:#c4c7c5;"></div>
<div style="top:1186.38px;height:16.2px;line-height:16.2px;font-family:'Liberation Sans', sans-serif;font-size:14.5px;color:#444746;white-space:nowrap;left:-978.3px;width:2000px;text-align:center;">32</div>
<div style="left:0px;top:1206.5px;width:52px;height:1px;background:#c4c7c5;"></div>
<div style="top:1215.38px;height:16.2px;line-height:16.2px;font-family:'Liberation Sans', sans-serif;font-size:14.5px;color:#444746;white-space:nowrap;left:-978.3px;width:2000px;text-align:center;">33</div>
<div style="left:0px;top:1235.5px;width:52px;height:1px;background:#c4c7c5;"></div>
<div style="top:1244.38px;height:16.2px;line-height:16.2px;font-family:'Liberation Sans', sans-serif;font-size:14.5px;color:#444746;white-space:nowrap;left:-978.3px;width:2000px;text-align:center;">34</div>
<div style="left:0px;top:1264.5px;width:52px;height:1px;background:#c4c7c5;"></div>
<div style="left:2781px;top:216px;width:16px;height:1046px;background:#ffffff;"></div>
<div style="left:2781px;top:184px;width:16px;height:162px;background:#f8f8f8;"></div>
<div style="left:2781px;top:184px;width:16px;height:1px;background:#c4c7c5;"></div>
<div style="left:2781px;top:184px;width:1px;height:162px;background:#d0d0d0;"></div>
<div style="left:2782px;top:215.5px;width:15px;height:3px;background:#d9dce1;"></div>
<div style="left:2783.5px;top:347px;width:12.5px;height:44px;background:#dadce0;border-radius:6px;"></div>
<div style="left:2797px;top:147px;width:65px;height:1115px;background:#f9fbfd;"></div>
<svg style="position:absolute;left:2821px;top:100px;" width="26" height="26" viewBox="0 0 26 26"><rect x="0" y="0" width="26" height="26" rx="2" fill="#4285f4"/><rect x="3" y="3" width="20" height="20" fill="#fff"/><path d="M0 20h20v6H2c-1 0-2-1-2-2z" fill="#34a853"/><path d="M20 6h6v14h-6z" fill="#fbbc04"/><path d="M20 20h6l-6 6z" fill="#ea4335"/><text x="10.5" y="18" font-family="Liberation Sans" font-size="10" fill="#4285f4" text-anchor="middle">31</text></svg>
<svg style="position:absolute;left:2821px;top:173px;" width="26" height="27" viewBox="0 0 26 27"><rect width="26" height="27" rx="3" fill="#f6bf26"/><circle cx="13" cy="11" r="6" fill="#fff"/><rect x="10" y="16" width="6" height="3" fill="#fff"/><rect x="10" y="20" width="6" height="1.6" fill="#fff"/></svg>
<svg style="position:absolute;left:2823px;top:249px;" width="23" height="24" viewBox="0 0 23 24"><circle cx="12" cy="12" r="9" fill="none" stroke="#1a73e8" stroke-width="2.6"/><path d="M7 12l4 4 9-9" fill="none" stroke="#1a73e8" stroke-width="2.8"/></svg>
<svg style="position:absolute;left:2825px;top:325px;" width="19" height="22" viewBox="0 0 19 22"><circle cx="9.5" cy="4.5" r="4.5" fill="#1a5fd0"/><path d="M1 22v-5c0-3 3-6 8.5-6S18 14 18 17v5z" fill="#1a5fd0"/><path d="M1 22v-5c0-2 1-3 3-4v9z" fill="#7da7f0"/></svg>
<svg style="position:absolute;left:2826px;top:398px;" width="18" height="25" viewBox="0 0 18 25"><path d="M9 0a9 9 0 00-9 9c0 6 9 16 9 16s9-10 9-16a9 9 0 00-9-9z" fill="#34a853"/><path d="M9 0a9 9 0 00-6.4 2.6L9 9l6.4-6.4A9 9 0 009 0z" fill="#4285f4"/><path d="M2.6 2.6A9 9 0 000 9c0 1.5.5 3 1.2 4.5L9 9z" fill="#ea4335"/><path d="M1.2 13.5c1 2 2.5 4 3.5 5.5L9 9z" fill="#fbbc04"/><circle cx="9" cy="9" r="3.2" fill="#fff"/></svg>
<div style="left:2821px;top:469px;width:27px;height:1px;background:#c7c7c7;"></div>
<svg style="position:absolute;left:2820px;top:516px;" width="28" height="28" viewBox="0 0 24 24"><path fill="#1f1f1f" d="M19 13h-6v6h-2v-6H5v-2h6V5h2v6h6v2z"/></svg>
<div style="left:53px;top:216px;width:2728px;height:1046px;overflow:hidden;">
<div style="left:0px;top:0px;width:2728px;height:1046px;background:#f0efeb;"></div>
<div style="left:0px;top:0px;width:2728px;height:125px;background:#73907a;"></div>
<div style="top:19.85px;height:63.45px;line-height:63.45px;font-family:'Liberation Mono', monospace;font-size:56px;color:#fbf7f5;white-space:nowrap;font-weight:700;left:13px;transform:scaleX(0.92);transform-origin:left;-webkit-text-stroke:1.2px #fbf7f5;">MONTHLY BUDGET OVERVIEW</div>
<svg style="position:absolute;left:747px;top:14px;" width="70" height="65" viewBox="0 0 70 65"><g fill="#e9e7dc" stroke="#b9b8ad" stroke-width="0.6"><ellipse cx="16" cy="13.5" rx="7.5" ry="3.3" transform="rotate(18 16 13.5)"/><ellipse cx="14.5" cy="18.5" rx="7.5" ry="3" transform="rotate(32 14.5 18.5)"/><ellipse cx="16.5" cy="23.5" rx="6.5" ry="2.6" transform="rotate(52 16.5 23.5)"/><ellipse cx="22" cy="17" rx="6" ry="6.5"/><ellipse cx="45" cy="45" rx="2.8" ry="7.5" transform="rotate(12 45 45)"/><ellipse cx="51" cy="47" rx="3" ry="8" transform="rotate(-5 51 47)"/><ellipse cx="56.5" cy="44.5" rx="3" ry="8" transform="rotate(-22 56.5 44.5)"/><ellipse cx="51" cy="38" rx="7.5" ry="6.5"/></g><g transform="rotate(-37 34 32)"><rect x="8" y="22" width="52" height="21" rx="2" fill="#9c9f98"/><rect x="8.5" y="20" width="51" height="19" rx="1.5" fill="#e3e5d6" stroke="#858a82" stroke-width="1"/><rect x="11" y="22.5" width="46" height="14" fill="none" stroke="#b7bcae" stroke-width="0.8"/><rect x="27" y="18.5" width="14" height="23" fill="#efe9d0"/><rect x="26" y="18.5" width="2.6" height="23" fill="#d8a62c"/><rect x="39.4" y="18.5" width="2.6" height="23" fill="#d8a62c"/></g><text x="33.5" y="37" font-family="Liberation Sans" font-weight="700" font-size="15" fill="#4a3512" text-anchor="middle" transform="rotate(-30 33.5 31)">$</text></svg>
<div style="top:86.17px;height:18.13px;line-height:18.13px;font-family:'Liberation Mono', monospace;font-size:16px;color:#fbf7f5;white-space:nowrap;font-style:italic;left:12.7px;transform:scaleX(0.87);transform-origin:left;-webkit-text-stroke:0.3px #fbf7f5;">Here you can select your month and see your budgeted vs actual spend overview.</div>
</div>
<div style="left:0px;top:340.5px;width:2781px;height:5px;background:#c8c8c8;"></div>
<div style="left:53px;top:216px;width:2728px;height:1046px;overflow:hidden;">
<div style="left:9px;top:147px;width:269px;height:44px;background:#73907a;"></div>
<div style="top:159.75px;height:19.44px;line-height:19.44px;font-family:'Liberation Sans', sans-serif;font-size:17.4px;color:#f5f3ee;white-space:nowrap;font-weight:700;-webkit-text-stroke:0.2px #f5f3ee;left:-856.5px;width:2000px;text-align:center;transform:scaleX(1.12);transform-origin:center;">MONTH</div>
<div style="left:278px;top:147px;width:179px;height:44px;background:#fdf6e1;"></div>
<div style="top:159.26px;height:20.66px;line-height:20.66px;font-family:'Liberation Sans', sans-serif;font-size:18.5px;color:#000;white-space:nowrap;left:-645px;width:2000px;text-align:center;transform:scaleX(1.14);transform-origin:center;">July</div>
<svg style="position:absolute;left:438px;top:167px;" width="11" height="6" viewBox="0 0 11 6"><path fill="#a8832f" d="M0 0h11L5.5 6z"/></svg>
<div style="left:8px;top:207px;width:721px;height:44px;background:#73907a;"></div>
<div style="top:217.85px;height:21.78px;line-height:21.78px;font-family:'Liberation Sans', sans-serif;font-size:19.5px;color:#f5f3ee;white-space:nowrap;font-weight:700;-webkit-text-stroke:0.2px #f5f3ee;left:-631.5px;width:2000px;text-align:center;transform:scaleX(1.1);transform-origin:center;">Budgeted VS Actuals</div>
<div style="left:8px;top:251px;width:721px;height:28px;background:#d9d9d9;"></div>
<div style="left:8px;top:279px;width:532px;height:198px;background:#ffffff;"></div>
<div style="left:540px;top:279px;width:189px;height:231px;background:#d6e1d6;"></div>
<div style="left:8px;top:477px;width:532px;height:33px;background:#d6e1d6;"></div>
<div style="top:256.68px;height:16.2px;line-height:16.2px;font-family:'Liberation Sans', sans-serif;font-size:14.5px;color:#000;white-space:nowrap;font-weight:700;-webkit-text-stroke:0.2px #000;left:-654.5px;width:2000px;text-align:center;transform:scaleX(1.02);transform-origin:center;">BUDGETED</div>
<div style="top:256.68px;height:16.2px;line-height:16.2px;font-family:'Liberation Sans', sans-serif;font-size:14.5px;color:#000;white-space:nowrap;font-weight:700;-webkit-text-stroke:0.2px #000;left:-523.5px;width:2000px;text-align:center;transform:scaleX(1.02);transform-origin:center;">ACTUAL</div>
<div style="top:256.68px;height:16.2px;line-height:16.2px;font-family:'Liberation Sans', sans-serif;font-size:14.5px;color:#000;white-space:nowrap;font-weight:700;-webkit-text-stroke:0.2px #000;font-style:italic;left:-365.5px;width:2000px;text-align:center;transform:scaleX(1.02);transform-origin:center;">VARIANCE</div>
<div style="top:288.19px;height:15.19px;line-height:15.19px;font-family:'Liberation Sans', sans-serif;font-size:13.6px;color:#000;white-space:nowrap;font-weight:700;-webkit-text-stroke:0.2px #000;left:13px;transform:scaleX(0.98);transform-origin:left;">Income</div>
<div style="top:288.28px;height:15.08px;line-height:15.08px;font-family:'Liberation Sans', sans-serif;font-size:13.5px;color:#000;white-space:nowrap;left:-700px;width:2000px;text-align:center;">₱</div>
<div style="top:288.19px;height:15.19px;line-height:15.19px;font-family:'Liberation Sans', sans-serif;font-size:13.6px;color:#000;white-space:nowrap;left:-632.5px;width:2000px;text-align:center;transform:scaleX(0.93);transform-origin:center;">121,000.00</div>
<div style="top:288.28px;height:15.08px;line-height:15.08px;font-family:'Liberation Sans', sans-serif;font-size:13.5px;color:#000;white-space:nowrap;left:-565px;width:2000px;text-align:center;">₱</div>
<div style="top:288.19px;height:15.19px;line-height:15.19px;font-family:'Liberation Sans', sans-serif;font-size:13.6px;color:#000;white-space:nowrap;left:-501.5px;width:2000px;text-align:center;transform:scaleX(0.93);transform-origin:center;">207,343.22</div>
<div style="top:288.28px;height:15.08px;line-height:15.08px;font-family:'Liberation Sans', sans-serif;font-size:13.5px;color:#274e13;white-space:nowrap;font-weight:700;-webkit-text-stroke:0.2px #274e13;font-style:italic;left:-438.5px;width:2000px;text-align:center;">₱</div>
<div style="top:288.19px;height:15.19px;line-height:15.19px;font-family:'Liberation Sans', sans-serif;font-size:13.6px;color:#274e13;white-space:nowrap;font-weight:700;-webkit-text-stroke:0.2px #274e13;font-style:italic;left:-344px;width:2000px;text-align:center;">86,343.22</div>
<div style="left:8px;top:311.5px;width:721px;height:1px;background:repeating-linear-gradient(90deg,#6f8f73 0 3px,transparent 3px 6px);"></div>
<div style="top:321.19px;height:15.19px;line-height:15.19px;font-family:'Liberation Sans', sans-serif;font-size:13.6px;color:#000;white-space:nowrap;font-weight:700;-webkit-text-stroke:0.2px #000;left:13px;transform:scaleX(0.98);transform-origin:left;">Bills</div>
<div style="top:321.28px;height:15.08px;line-height:15.08px;font-family:'Liberation Sans', sans-serif;font-size:13.5px;color:#000;white-space:nowrap;left:-700px;width:2000px;text-align:center;">₱</div>
<div style="top:321.19px;height:15.19px;line-height:15.19px;font-family:'Liberation Sans', sans-serif;font-size:13.6px;color:#000;white-space:nowrap;left:-632.5px;width:2000px;text-align:center;transform:scaleX(0.93);transform-origin:center;">29,808.23</div>
<div style="top:321.28px;height:15.08px;line-height:15.08px;font-family:'Liberation Sans', sans-serif;font-size:13.5px;color:#000;white-space:nowrap;left:-565px;width:2000px;text-align:center;">₱</div>
<div style="top:321.19px;height:15.19px;line-height:15.19px;font-family:'Liberation Sans', sans-serif;font-size:13.6px;color:#000;white-space:nowrap;left:-501.5px;width:2000px;text-align:center;transform:scaleX(0.93);transform-origin:center;">25,986.39</div>
<div style="top:321.28px;height:15.08px;line-height:15.08px;font-family:'Liberation Sans', sans-serif;font-size:13.5px;color:#274e13;white-space:nowrap;font-weight:700;-webkit-text-stroke:0.2px #274e13;font-style:italic;left:-438.5px;width:2000px;text-align:center;">₱</div>
<div style="top:321.19px;height:15.19px;line-height:15.19px;font-family:'Liberation Sans', sans-serif;font-size:13.6px;color:#274e13;white-space:nowrap;font-weight:700;-webkit-text-stroke:0.2px #274e13;font-style:italic;left:-344px;width:2000px;text-align:center;">-3,821.84</div>
<div style="left:8px;top:344.5px;width:721px;height:1px;background:repeating-linear-gradient(90deg,#6f8f73 0 3px,transparent 3px 6px);"></div>
<div style="top:354.19px;height:15.19px;line-height:15.19px;font-family:'Liberation Sans', sans-serif;font-size:13.6px;color:#000;white-space:nowrap;font-weight:700;-webkit-text-stroke:0.2px #000;left:13px;transform:scaleX(0.98);transform-origin:left;">Subscriptions</div>
<div style="top:354.28px;height:15.08px;line-height:15.08px;font-family:'Liberation Sans', sans-serif;font-size:13.5px;color:#000;white-space:nowrap;left:-700px;width:2000px;text-align:center;">₱</div>
<div style="top:354.19px;height:15.19px;line-height:15.19px;font-family:'Liberation Sans', sans-serif;font-size:13.6px;color:#000;white-space:nowrap;left:-632.5px;width:2000px;text-align:center;transform:scaleX(0.93);transform-origin:center;">627.00</div>
<div style="top:354.28px;height:15.08px;line-height:15.08px;font-family:'Liberation Sans', sans-serif;font-size:13.5px;color:#000;white-space:nowrap;left:-565px;width:2000px;text-align:center;">₱</div>
<div style="top:354.19px;height:15.19px;line-height:15.19px;font-family:'Liberation Sans', sans-serif;font-size:13.6px;color:#000;white-space:nowrap;left:-501.5px;width:2000px;text-align:center;transform:scaleX(0.93);transform-origin:center;">179.00</div>
<div style="top:354.28px;height:15.08px;line-height:15.08px;font-family:'Liberation Sans', sans-serif;font-size:13.5px;color:#274e13;white-space:nowrap;font-weight:700;-webkit-text-stroke:0.2px #274e13;font-style:italic;left:-438.5px;width:2000px;text-align:center;">₱</div>
<div style="top:354.19px;height:15.19px;line-height:15.19px;font-family:'Liberation Sans', sans-serif;font-size:13.6px;color:#274e13;white-space:nowrap;font-weight:700;-webkit-text-stroke:0.2px #274e13;font-style:italic;left:-344px;width:2000px;text-align:center;">-448.00</div>
<div style="left:8px;top:377.5px;width:721px;height:1px;background:repeating-linear-gradient(90deg,#6f8f73 0 3px,transparent 3px 6px);"></div>
<div style="top:387.19px;height:15.19px;line-height:15.19px;font-family:'Liberation Sans', sans-serif;font-size:13.6px;color:#000;white-space:nowrap;font-weight:700;-webkit-text-stroke:0.2px #000;left:13px;transform:scaleX(0.98);transform-origin:left;">Expenses</div>
<div style="top:387.28px;height:15.08px;line-height:15.08px;font-family:'Liberation Sans', sans-serif;font-size:13.5px;color:#000;white-space:nowrap;left:-700px;width:2000px;text-align:center;">₱</div>
<div style="top:387.19px;height:15.19px;line-height:15.19px;font-family:'Liberation Sans', sans-serif;font-size:13.6px;color:#000;white-space:nowrap;left:-632.5px;width:2000px;text-align:center;transform:scaleX(0.93);transform-origin:center;">19,000.00</div>
<div style="top:387.28px;height:15.08px;line-height:15.08px;font-family:'Liberation Sans', sans-serif;font-size:13.5px;color:#000;white-space:nowrap;left:-565px;width:2000px;text-align:center;">₱</div>
<div style="top:387.19px;height:15.19px;line-height:15.19px;font-family:'Liberation Sans', sans-serif;font-size:13.6px;color:#000;white-space:nowrap;left:-501.5px;width:2000px;text-align:center;transform:scaleX(0.93);transform-origin:center;">40,672.85</div>
<div style="top:387.28px;height:15.08px;line-height:15.08px;font-family:'Liberation Sans', sans-serif;font-size:13.5px;color:#274e13;white-space:nowrap;font-weight:700;-webkit-text-stroke:0.2px #274e13;font-style:italic;left:-438.5px;width:2000px;text-align:center;">₱</div>
<div style="top:387.19px;height:15.19px;line-height:15.19px;font-family:'Liberation Sans', sans-serif;font-size:13.6px;color:#e34b35;white-space:nowrap;font-weight:700;-webkit-text-stroke:0.2px #e34b35;font-style:italic;left:-344px;width:2000px;text-align:center;">21,672.85</div>
<div style="left:8px;top:410.5px;width:721px;height:1px;background:repeating-linear-gradient(90deg,#6f8f73 0 3px,transparent 3px 6px);"></div>
<div style="top:420.19px;height:15.19px;line-height:15.19px;font-family:'Liberation Sans', sans-serif;font-size:13.6px;color:#000;white-space:nowrap;font-weight:700;-webkit-text-stroke:0.2px #000;left:13px;transform:scaleX(0.98);transform-origin:left;">Savings &amp; Investments</div>
<div style="top:420.28px;height:15.08px;line-height:15.08px;font-family:'Liberation Sans', sans-serif;font-size:13.5px;color:#000;white-space:nowrap;left:-700px;width:2000px;text-align:center;">₱</div>
<div style="top:420.19px;height:15.19px;line-height:15.19px;font-family:'Liberation Sans', sans-serif;font-size:13.6px;color:#000;white-space:nowrap;left:-632.5px;width:2000px;text-align:center;transform:scaleX(0.93);transform-origin:center;">15,000.00</div>
<div style="top:420.28px;height:15.08px;line-height:15.08px;font-family:'Liberation Sans', sans-serif;font-size:13.5px;color:#000;white-space:nowrap;left:-565px;width:2000px;text-align:center;">₱</div>
<div style="top:420.19px;height:15.19px;line-height:15.19px;font-family:'Liberation Sans', sans-serif;font-size:13.6px;color:#000;white-space:nowrap;left:-501.5px;width:2000px;text-align:center;transform:scaleX(0.93);transform-origin:center;">15,000.00</div>
<div style="top:420.28px;height:15.08px;line-height:15.08px;font-family:'Liberation Sans', sans-serif;font-size:13.5px;color:#274e13;white-space:nowrap;font-weight:700;-webkit-text-stroke:0.2px #274e13;font-style:italic;left:-438.5px;width:2000px;text-align:center;">₱</div>
<div style="top:420.19px;height:15.19px;line-height:15.19px;font-family:'Liberation Sans', sans-serif;font-size:13.6px;color:#274e13;white-space:nowrap;font-weight:700;-webkit-text-stroke:0.2px #274e13;font-style:italic;left:-344px;width:2000px;text-align:center;">0.00</div>
<div style="left:8px;top:443.5px;width:721px;height:1px;background:repeating-linear-gradient(90deg,#6f8f73 0 3px,transparent 3px 6px);"></div>
<div style="top:453.19px;height:15.19px;line-height:15.19px;font-family:'Liberation Sans', sans-serif;font-size:13.6px;color:#000;white-space:nowrap;font-weight:700;-webkit-text-stroke:0.2px #000;left:13px;transform:scaleX(0.98);transform-origin:left;">Debt</div>
<div style="top:453.28px;height:15.08px;line-height:15.08px;font-family:'Liberation Sans', sans-serif;font-size:13.5px;color:#000;white-space:nowrap;left:-700px;width:2000px;text-align:center;">₱</div>
<div style="top:453.19px;height:15.19px;line-height:15.19px;font-family:'Liberation Sans', sans-serif;font-size:13.6px;color:#000;white-space:nowrap;left:-632.5px;width:2000px;text-align:center;transform:scaleX(0.93);transform-origin:center;">12,431.16</div>
<div style="top:453.28px;height:15.08px;line-height:15.08px;font-family:'Liberation Sans', sans-serif;font-size:13.5px;color:#000;white-space:nowrap;left:-565px;width:2000px;text-align:center;">₱</div>
<div style="top:453.19px;height:15.19px;line-height:15.19px;font-family:'Liberation Sans', sans-serif;font-size:13.6px;color:#000;white-space:nowrap;left:-501.5px;width:2000px;text-align:center;transform:scaleX(0.93);transform-origin:center;">55,659.17</div>
<div style="top:453.28px;height:15.08px;line-height:15.08px;font-family:'Liberation Sans', sans-serif;font-size:13.5px;color:#274e13;white-space:nowrap;font-weight:700;-webkit-text-stroke:0.2px #274e13;font-style:italic;left:-438.5px;width:2000px;text-align:center;">₱</div>
<div style="top:453.19px;height:15.19px;line-height:15.19px;font-family:'Liberation Sans', sans-serif;font-size:13.6px;color:#274e13;white-space:nowrap;font-weight:700;-webkit-text-stroke:0.2px #274e13;font-style:italic;left:-344px;width:2000px;text-align:center;">43,228.01</div>
<div style="left:8px;top:476.5px;width:721px;height:1px;background:repeating-linear-gradient(90deg,#6f8f73 0 3px,transparent 3px 6px);"></div>
<div style="top:484.47px;height:17.31px;line-height:17.31px;font-family:'Liberation Sans', sans-serif;font-size:15.5px;color:#000;white-space:nowrap;font-weight:700;-webkit-text-stroke:0.2px #000;left:13px;transform:scaleX(0.98);transform-origin:left;">TOTAL REMAINING</div>
<div style="top:484.02px;height:17.87px;line-height:17.87px;font-family:'Liberation Sans', sans-serif;font-size:16px;color:#000;white-space:nowrap;font-weight:700;-webkit-text-stroke:0.2px #000;left:-700px;width:2000px;text-align:center;">₱</div>
<div style="top:484.47px;height:17.31px;line-height:17.31px;font-family:'Liberation Sans', sans-serif;font-size:15.5px;color:#000;white-space:nowrap;font-weight:700;-webkit-text-stroke:0.2px #000;left:-632.5px;width:2000px;text-align:center;transform:scaleX(0.92);transform-origin:center;">44,133.61</div>
<div style="top:484.02px;height:17.87px;line-height:17.87px;font-family:'Liberation Sans', sans-serif;font-size:16px;color:#000;white-space:nowrap;font-weight:700;-webkit-text-stroke:0.2px #000;left:-565px;width:2000px;text-align:center;">₱</div>
<div style="top:484.47px;height:17.31px;line-height:17.31px;font-family:'Liberation Sans', sans-serif;font-size:15.5px;color:#000;white-space:nowrap;font-weight:700;-webkit-text-stroke:0.2px #000;left:-501.5px;width:2000px;text-align:center;transform:scaleX(0.92);transform-origin:center;">69,845.81</div>
<div style="top:484.02px;height:17.87px;line-height:17.87px;font-family:'Liberation Sans', sans-serif;font-size:16px;color:#274e13;white-space:nowrap;font-weight:700;-webkit-text-stroke:0.2px #274e13;left:-438.5px;width:2000px;text-align:center;">₱</div>
<div style="top:484.47px;height:17.31px;line-height:17.31px;font-family:'Liberation Sans', sans-serif;font-size:15.5px;color:#274e13;white-space:nowrap;font-weight:700;-webkit-text-stroke:0.2px #274e13;left:-344px;width:2000px;text-align:center;transform:scaleX(0.95);transform-origin:center;">25,712.20</div>
<div style="left:8px;top:476.5px;width:721px;height:1px;background:#6f8f73;"></div>
<div style="left:277.5px;top:251px;width:1px;height:259px;background:repeating-linear-gradient(180deg,#6f8f73 0 2px,transparent 2px 4px);"></div>
<div style="left:412.5px;top:251px;width:1px;height:259px;background:repeating-linear-gradient(180deg,#6f8f73 0 2px,transparent 2px 4px);"></div>
<div style="left:539.5px;top:251px;width:1px;height:259px;background:#6f8f73;"></div>
<div style="left:8px;top:207px;width:721px;height:303px;border:1px solid #6f8f73;"></div>
<div style="left:8px;top:538px;width:721px;height:41px;background:#73907a;"></div>
<div style="top:548.85px;height:21.78px;line-height:21.78px;font-family:'Liberation Sans', sans-serif;font-size:19.5px;color:#f5f3ee;white-space:nowrap;font-weight:700;-webkit-text-stroke:0.2px #f5f3ee;letter-spacing:4.5px;left:-631.5px;width:2000px;text-align:center;text-indent:4.5px;transform:scaleX(1.12);transform-origin:center;">INCOME</div>
<div style="left:8px;top:579px;width:721px;height:35px;background:#d9d9d9;"></div>
<div style="left:8px;top:614px;width:532px;height:432px;background:#ffffff;"></div>
<div style="left:540px;top:614px;width:130px;height:432px;background:#d6e1d6;"></div>
<div style="left:670px;top:614px;width:59px;height:432px;background:#e5ebe5;"></div>
<div style="top:589.96px;height:14.86px;line-height:14.86px;font-family:'Liberation Sans', sans-serif;font-size:13.3px;color:#000;white-space:nowrap;font-style:italic;left:-889.5px;width:2000px;text-align:center;transform:scaleX(1.07);transform-origin:center;">Income Category</div>
<div style="top:589.96px;height:14.86px;line-height:14.86px;font-family:'Liberation Sans', sans-serif;font-size:13.3px;color:#000;white-space:nowrap;font-style:italic;left:-754.5px;width:2000px;text-align:center;transform:scaleX(1.04);transform-origin:center;">Due</div>
<div style="top:589.69px;height:15.19px;line-height:15.19px;font-family:'Liberation Sans', sans-serif;font-size:13.6px;color:#000;white-space:nowrap;font-weight:700;-webkit-text-stroke:0.2px #000;letter-spacing:2.6px;left:-654.5px;width:2000px;text-align:center;text-indent:2.6px;transform:scaleX(1.05);transform-origin:center;">BUDGETED</div>
<div style="top:589.69px;height:15.19px;line-height:15.19px;font-family:'Liberation Sans', sans-serif;font-size:13.6px;color:#000;white-space:nowrap;font-weight:700;-webkit-text-stroke:0.2px #000;letter-spacing:2.6px;left:-523.5px;width:2000px;text-align:center;text-indent:2.6px;transform:scaleX(1.05);transform-origin:center;">ACTUAL</div>
<div style="top:589.69px;height:15.19px;line-height:15.19px;font-family:'Liberation Sans', sans-serif;font-size:13.6px;color:#000;white-space:nowrap;font-weight:700;-webkit-text-stroke:0.2px #000;letter-spacing:2.6px;left:-395px;width:2000px;text-align:center;text-indent:2.6px;transform:scaleX(1.05);transform-origin:center;">VARIANCE</div>
<div style="top:589.96px;height:14.86px;line-height:14.86px;font-family:'Liberation Sans', sans-serif;font-size:13.3px;color:#000;white-space:nowrap;font-style:italic;left:-300.5px;width:2000px;text-align:center;transform:scaleX(1.04);transform-origin:center;">Paid</div>
<div style="left:8px;top:614px;width:205px;height:29px;overflow:hidden;">
<div style="top:9.37px;height:14.97px;line-height:14.97px;font-family:'Liberation Sans', sans-serif;font-size:13.4px;color:#000;white-space:nowrap;font-weight:700;-webkit-text-stroke:0.2px #000;left:5px;transform:scaleX(1.04);transform-origin:left;">Multiplier Salary</div>
</div>
<div style="top:623.37px;height:14.97px;line-height:14.97px;font-family:'Liberation Sans', sans-serif;font-size:13.4px;color:#000;white-space:nowrap;left:-754.5px;width:2000px;text-align:center;transform:scaleX(1.12);transform-origin:center;">30th</div>
<div style="top:623.28px;height:15.08px;line-height:15.08px;font-family:'Liberation Sans', sans-serif;font-size:13.5px;color:#000;white-space:nowrap;left:-700px;width:2000px;text-align:center;">₱</div>
<div style="top:623.37px;height:14.97px;line-height:14.97px;font-family:'Liberation Sans', sans-serif;font-size:13.4px;color:#000;white-space:nowrap;left:-632.5px;width:2000px;text-align:center;transform:scaleX(0.96);transform-origin:center;">51,000.00</div>
<div style="top:623.28px;height:15.08px;line-height:15.08px;font-family:'Liberation Sans', sans-serif;font-size:13.5px;color:#000;white-space:nowrap;left:-565px;width:2000px;text-align:center;">₱</div>
<div style="top:623.37px;height:14.97px;line-height:14.97px;font-family:'Liberation Sans', sans-serif;font-size:13.4px;color:#000;white-space:nowrap;left:-501.5px;width:2000px;text-align:center;transform:scaleX(0.96);transform-origin:center;">207,343.22</div>
<div style="top:623.28px;height:15.08px;line-height:15.08px;font-family:'Liberation Sans', sans-serif;font-size:13.5px;color:#000;white-space:nowrap;font-weight:700;-webkit-text-stroke:0.2px #000;font-style:italic;left:-438.5px;width:2000px;text-align:center;">₱</div>
<div style="top:623.37px;height:14.97px;line-height:14.97px;font-family:'Liberation Sans', sans-serif;font-size:13.4px;color:#274e13;white-space:nowrap;font-weight:700;-webkit-text-stroke:0.2px #274e13;font-style:italic;left:-373.5px;width:2000px;text-align:center;transform:scaleX(0.99);transform-origin:center;">156,343.22</div>
<div style="left:692.9px;top:622px;width:14.5px;height:14.5px;border:1.7px solid #587a5c;border-radius:2px;"></div>
<div style="left:8px;top:642.5px;width:721px;height:1px;background:repeating-linear-gradient(90deg,#6f8f73 0 3px,transparent 3px 6px);"></div>
<div style="left:8px;top:643px;width:205px;height:29px;overflow:hidden;">
<div style="top:9.37px;height:14.97px;line-height:14.97px;font-family:'Liberation Sans', sans-serif;font-size:13.4px;color:#000;white-space:nowrap;font-weight:700;-webkit-text-stroke:0.2px #000;left:5px;transform:scaleX(1.04);transform-origin:left;">Multiplier Review Incentive</div>
</div>
<div style="top:652.37px;height:14.97px;line-height:14.97px;font-family:'Liberation Sans', sans-serif;font-size:13.4px;color:#000;white-space:nowrap;left:-754.5px;width:2000px;text-align:center;transform:scaleX(1.12);transform-origin:center;">30th</div>
<div style="top:652.28px;height:15.08px;line-height:15.08px;font-family:'Liberation Sans', sans-serif;font-size:13.5px;color:#000;white-space:nowrap;left:-700px;width:2000px;text-align:center;">₱</div>
<div style="top:652.37px;height:14.97px;line-height:14.97px;font-family:'Liberation Sans', sans-serif;font-size:13.4px;color:#000;white-space:nowrap;left:-632.5px;width:2000px;text-align:center;transform:scaleX(0.96);transform-origin:center;">70,000.00</div>
<div style="top:652.28px;height:15.08px;line-height:15.08px;font-family:'Liberation Sans', sans-serif;font-size:13.5px;color:#000;white-space:nowrap;left:-565px;width:2000px;text-align:center;">₱</div>
<div style="top:652.37px;height:14.97px;line-height:14.97px;font-family:'Liberation Sans', sans-serif;font-size:13.4px;color:#000;white-space:nowrap;left:-501.5px;width:2000px;text-align:center;transform:scaleX(0.96);transform-origin:center;">-</div>
<div style="top:652.28px;height:15.08px;line-height:15.08px;font-family:'Liberation Sans', sans-serif;font-size:13.5px;color:#000;white-space:nowrap;font-weight:700;-webkit-text-stroke:0.2px #000;font-style:italic;left:-438.5px;width:2000px;text-align:center;">₱</div>
<div style="top:652.37px;height:14.97px;line-height:14.97px;font-family:'Liberation Sans', sans-serif;font-size:13.4px;color:#e34b35;white-space:nowrap;font-weight:700;-webkit-text-stroke:0.2px #e34b35;font-style:italic;left:-373.5px;width:2000px;text-align:center;transform:scaleX(0.99);transform-origin:center;">-70,000.00</div>
<div style="left:692.9px;top:651px;width:14.5px;height:14.5px;border:1.7px solid #587a5c;border-radius:2px;"></div>
<div style="left:8px;top:671.5px;width:721px;height:1px;background:repeating-linear-gradient(90deg,#6f8f73 0 3px,transparent 3px 6px);"></div>
<div style="left:8px;top:672px;width:205px;height:29px;overflow:hidden;">
<div style="top:9.37px;height:14.97px;line-height:14.97px;font-family:'Liberation Sans', sans-serif;font-size:13.4px;color:#000;white-space:nowrap;font-weight:700;-webkit-text-stroke:0.2px #000;left:5px;transform:scaleX(1.04);transform-origin:left;">Business</div>
</div>
<div style="top:681.37px;height:14.97px;line-height:14.97px;font-family:'Liberation Sans', sans-serif;font-size:13.4px;color:#000;white-space:nowrap;left:-754.5px;width:2000px;text-align:center;transform:scaleX(1.12);transform-origin:center;">n/a</div>
<div style="top:681.28px;height:15.08px;line-height:15.08px;font-family:'Liberation Sans', sans-serif;font-size:13.5px;color:#000;white-space:nowrap;left:-700px;width:2000px;text-align:center;">₱</div>
<div style="top:681.28px;height:15.08px;line-height:15.08px;font-family:'Liberation Sans', sans-serif;font-size:13.5px;color:#000;white-space:nowrap;left:-565px;width:2000px;text-align:center;">₱</div>
<div style="top:681.37px;height:14.97px;line-height:14.97px;font-family:'Liberation Sans', sans-serif;font-size:13.4px;color:#000;white-space:nowrap;left:-501.5px;width:2000px;text-align:center;transform:scaleX(0.96);transform-origin:center;">-</div>
<div style="top:681.28px;height:15.08px;line-height:15.08px;font-family:'Liberation Sans', sans-serif;font-size:13.5px;color:#000;white-space:nowrap;font-weight:700;-webkit-text-stroke:0.2px #000;font-style:italic;left:-438.5px;width:2000px;text-align:center;">₱</div>
<div style="top:681.37px;height:14.97px;line-height:14.97px;font-family:'Liberation Sans', sans-serif;font-size:13.4px;color:#274e13;white-space:nowrap;font-weight:700;-webkit-text-stroke:0.2px #274e13;font-style:italic;left:-373.5px;width:2000px;text-align:center;transform:scaleX(0.99);transform-origin:center;">0.00</div>
<div style="left:692.9px;top:680px;width:14.5px;height:14.5px;border:1.7px solid #587a5c;border-radius:2px;"></div>
<div style="left:8px;top:700.5px;width:721px;height:1px;background:repeating-linear-gradient(90deg,#6f8f73 0 3px,transparent 3px 6px);"></div>
<div style="left:8px;top:701px;width:205px;height:29px;overflow:hidden;">
<div style="top:9.37px;height:14.97px;line-height:14.97px;font-family:'Liberation Sans', sans-serif;font-size:13.4px;color:#000;white-space:nowrap;font-weight:700;-webkit-text-stroke:0.2px #000;left:5px;transform:scaleX(1.04);transform-origin:left;">Others</div>
</div>
<div style="top:710.37px;height:14.97px;line-height:14.97px;font-family:'Liberation Sans', sans-serif;font-size:13.4px;color:#000;white-space:nowrap;left:-754.5px;width:2000px;text-align:center;transform:scaleX(1.12);transform-origin:center;">n/a</div>
<div style="top:710.28px;height:15.08px;line-height:15.08px;font-family:'Liberation Sans', sans-serif;font-size:13.5px;color:#000;white-space:nowrap;left:-700px;width:2000px;text-align:center;">₱</div>
<div style="top:710.28px;height:15.08px;line-height:15.08px;font-family:'Liberation Sans', sans-serif;font-size:13.5px;color:#000;white-space:nowrap;left:-565px;width:2000px;text-align:center;">₱</div>
<div style="top:710.37px;height:14.97px;line-height:14.97px;font-family:'Liberation Sans', sans-serif;font-size:13.4px;color:#000;white-space:nowrap;left:-501.5px;width:2000px;text-align:center;transform:scaleX(0.96);transform-origin:center;">-</div>
<div style="top:710.28px;height:15.08px;line-height:15.08px;font-family:'Liberation Sans', sans-serif;font-size:13.5px;color:#000;white-space:nowrap;font-weight:700;-webkit-text-stroke:0.2px #000;font-style:italic;left:-438.5px;width:2000px;text-align:center;">₱</div>
<div style="top:710.37px;height:14.97px;line-height:14.97px;font-family:'Liberation Sans', sans-serif;font-size:13.4px;color:#274e13;white-space:nowrap;font-weight:700;-webkit-text-stroke:0.2px #274e13;font-style:italic;left:-373.5px;width:2000px;text-align:center;transform:scaleX(0.99);transform-origin:center;">0.00</div>
<div style="left:692.9px;top:709px;width:14.5px;height:14.5px;border:1.7px solid #587a5c;border-radius:2px;"></div>
<div style="left:8px;top:729.5px;width:721px;height:1px;background:repeating-linear-gradient(90deg,#6f8f73 0 3px,transparent 3px 6px);"></div>
<div style="top:739.28px;height:15.08px;line-height:15.08px;font-family:'Liberation Sans', sans-serif;font-size:13.5px;color:#000;white-space:nowrap;font-weight:700;-webkit-text-stroke:0.2px #000;font-style:italic;left:-438.5px;width:2000px;text-align:center;">₱</div>
<div style="top:739.37px;height:14.97px;line-height:14.97px;font-family:'Liberation Sans', sans-serif;font-size:13.4px;color:#274e13;white-space:nowrap;font-weight:700;-webkit-text-stroke:0.2px #274e13;font-style:italic;left:-373.5px;width:2000px;text-align:center;transform:scaleX(0.99);transform-origin:center;">0.00</div>
<div style="left:692.9px;top:738px;width:14.5px;height:14.5px;border:1.7px solid #587a5c;border-radius:2px;"></div>
<div style="left:8px;top:758.5px;width:721px;height:1px;background:repeating-linear-gradient(90deg,#6f8f73 0 3px,transparent 3px 6px);"></div>
<div style="top:768.28px;height:15.08px;line-height:15.08px;font-family:'Liberation Sans', sans-serif;font-size:13.5px;color:#000;white-space:nowrap;font-weight:700;-webkit-text-stroke:0.2px #000;font-style:italic;left:-438.5px;width:2000px;text-align:center;">₱</div>
<div style="top:768.37px;height:14.97px;line-height:14.97px;font-family:'Liberation Sans', sans-serif;font-size:13.4px;color:#274e13;white-space:nowrap;font-weight:700;-webkit-text-stroke:0.2px #274e13;font-style:italic;left:-373.5px;width:2000px;text-align:center;transform:scaleX(0.99);transform-origin:center;">0.00</div>
<div style="left:692.9px;top:767px;width:14.5px;height:14.5px;border:1.7px solid #587a5c;border-radius:2px;"></div>
<div style="left:8px;top:787.5px;width:721px;height:1px;background:repeating-linear-gradient(90deg,#6f8f73 0 3px,transparent 3px 6px);"></div>
<div style="top:797.28px;height:15.08px;line-height:15.08px;font-family:'Liberation Sans', sans-serif;font-size:13.5px;color:#000;white-space:nowrap;font-weight:700;-webkit-text-stroke:0.2px #000;font-style:italic;left:-438.5px;width:2000px;text-align:center;">₱</div>
<div style="top:797.37px;height:14.97px;line-height:14.97px;font-family:'Liberation Sans', sans-serif;font-size:13.4px;color:#274e13;white-space:nowrap;font-weight:700;-webkit-text-stroke:0.2px #274e13;font-style:italic;left:-373.5px;width:2000px;text-align:center;transform:scaleX(0.99);transform-origin:center;">0.00</div>
<div style="left:692.9px;top:796px;width:14.5px;height:14.5px;border:1.7px solid #587a5c;border-radius:2px;"></div>
<div style="left:8px;top:816.5px;width:721px;height:1px;background:repeating-linear-gradient(90deg,#6f8f73 0 3px,transparent 3px 6px);"></div>
<div style="top:826.28px;height:15.08px;line-height:15.08px;font-family:'Liberation Sans', sans-serif;font-size:13.5px;color:#000;white-space:nowrap;font-weight:700;-webkit-text-stroke:0.2px #000;font-style:italic;left:-438.5px;width:2000px;text-align:center;">₱</div>
<div style="top:826.37px;height:14.97px;line-height:14.97px;font-family:'Liberation Sans', sans-serif;font-size:13.4px;color:#274e13;white-space:nowrap;font-weight:700;-webkit-text-stroke:0.2px #274e13;font-style:italic;left:-373.5px;width:2000px;text-align:center;transform:scaleX(0.99);transform-origin:center;">0.00</div>
<div style="left:692.9px;top:825px;width:14.5px;height:14.5px;border:1.7px solid #587a5c;border-radius:2px;"></div>
<div style="left:8px;top:845.5px;width:721px;height:1px;background:repeating-linear-gradient(90deg,#6f8f73 0 3px,transparent 3px 6px);"></div>
<div style="top:855.28px;height:15.08px;line-height:15.08px;font-family:'Liberation Sans', sans-serif;font-size:13.5px;color:#000;white-space:nowrap;font-weight:700;-webkit-text-stroke:0.2px #000;font-style:italic;left:-438.5px;width:2000px;text-align:center;">₱</div>
<div style="top:855.37px;height:14.97px;line-height:14.97px;font-family:'Liberation Sans', sans-serif;font-size:13.4px;color:#274e13;white-space:nowrap;font-weight:700;-webkit-text-stroke:0.2px #274e13;font-style:italic;left:-373.5px;width:2000px;text-align:center;transform:scaleX(0.99);transform-origin:center;">0.00</div>
<div style="left:692.9px;top:854px;width:14.5px;height:14.5px;border:1.7px solid #587a5c;border-radius:2px;"></div>
<div style="left:8px;top:874.5px;width:721px;height:1px;background:repeating-linear-gradient(90deg,#6f8f73 0 3px,transparent 3px 6px);"></div>
<div style="top:884.28px;height:15.08px;line-height:15.08px;font-family:'Liberation Sans', sans-serif;font-size:13.5px;color:#000;white-space:nowrap;font-weight:700;-webkit-text-stroke:0.2px #000;font-style:italic;left:-438.5px;width:2000px;text-align:center;">₱</div>
<div style="top:884.37px;height:14.97px;line-height:14.97px;font-family:'Liberation Sans', sans-serif;font-size:13.4px;color:#274e13;white-space:nowrap;font-weight:700;-webkit-text-stroke:0.2px #274e13;font-style:italic;left:-373.5px;width:2000px;text-align:center;transform:scaleX(0.99);transform-origin:center;">0.00</div>
<div style="left:692.9px;top:883px;width:14.5px;height:14.5px;border:1.7px solid #587a5c;border-radius:2px;"></div>
<div style="left:8px;top:903.5px;width:721px;height:1px;background:repeating-linear-gradient(90deg,#6f8f73 0 3px,transparent 3px 6px);"></div>
<div style="top:913.28px;height:15.08px;line-height:15.08px;font-family:'Liberation Sans', sans-serif;font-size:13.5px;color:#000;white-space:nowrap;font-weight:700;-webkit-text-stroke:0.2px #000;font-style:italic;left:-438.5px;width:2000px;text-align:center;">₱</div>
<div style="top:913.37px;height:14.97px;line-height:14.97px;font-family:'Liberation Sans', sans-serif;font-size:13.4px;color:#274e13;white-space:nowrap;font-weight:700;-webkit-text-stroke:0.2px #274e13;font-style:italic;left:-373.5px;width:2000px;text-align:center;transform:scaleX(0.99);transform-origin:center;">0.00</div>
<div style="left:692.9px;top:912px;width:14.5px;height:14.5px;border:1.7px solid #587a5c;border-radius:2px;"></div>
<div style="left:8px;top:932.5px;width:721px;height:1px;background:repeating-linear-gradient(90deg,#6f8f73 0 3px,transparent 3px 6px);"></div>
<div style="top:942.28px;height:15.08px;line-height:15.08px;font-family:'Liberation Sans', sans-serif;font-size:13.5px;color:#000;white-space:nowrap;font-weight:700;-webkit-text-stroke:0.2px #000;font-style:italic;left:-438.5px;width:2000px;text-align:center;">₱</div>
<div style="top:942.37px;height:14.97px;line-height:14.97px;font-family:'Liberation Sans', sans-serif;font-size:13.4px;color:#274e13;white-space:nowrap;font-weight:700;-webkit-text-stroke:0.2px #274e13;font-style:italic;left:-373.5px;width:2000px;text-align:center;transform:scaleX(0.99);transform-origin:center;">0.00</div>
<div style="left:692.9px;top:941px;width:14.5px;height:14.5px;border:1.7px solid #587a5c;border-radius:2px;"></div>
<div style="left:8px;top:961.5px;width:721px;height:1px;background:repeating-linear-gradient(90deg,#6f8f73 0 3px,transparent 3px 6px);"></div>
<div style="top:971.28px;height:15.08px;line-height:15.08px;font-family:'Liberation Sans', sans-serif;font-size:13.5px;color:#000;white-space:nowrap;font-weight:700;-webkit-text-stroke:0.2px #000;font-style:italic;left:-438.5px;width:2000px;text-align:center;">₱</div>
<div style="top:971.37px;height:14.97px;line-height:14.97px;font-family:'Liberation Sans', sans-serif;font-size:13.4px;color:#274e13;white-space:nowrap;font-weight:700;-webkit-text-stroke:0.2px #274e13;font-style:italic;left:-373.5px;width:2000px;text-align:center;transform:scaleX(0.99);transform-origin:center;">0.00</div>
<div style="left:692.9px;top:970px;width:14.5px;height:14.5px;border:1.7px solid #587a5c;border-radius:2px;"></div>
<div style="left:8px;top:990.5px;width:721px;height:1px;background:repeating-linear-gradient(90deg,#6f8f73 0 3px,transparent 3px 6px);"></div>
<div style="top:1000.28px;height:15.08px;line-height:15.08px;font-family:'Liberation Sans', sans-serif;font-size:13.5px;color:#000;white-space:nowrap;font-weight:700;-webkit-text-stroke:0.2px #000;font-style:italic;left:-438.5px;width:2000px;text-align:center;">₱</div>
<div style="top:1000.37px;height:14.97px;line-height:14.97px;font-family:'Liberation Sans', sans-serif;font-size:13.4px;color:#274e13;white-space:nowrap;font-weight:700;-webkit-text-stroke:0.2px #274e13;font-style:italic;left:-373.5px;width:2000px;text-align:center;transform:scaleX(0.99);transform-origin:center;">0.00</div>
<div style="left:692.9px;top:999px;width:14.5px;height:14.5px;border:1.7px solid #587a5c;border-radius:2px;"></div>
<div style="left:8px;top:1019.5px;width:721px;height:1px;background:repeating-linear-gradient(90deg,#6f8f73 0 3px,transparent 3px 6px);"></div>
<div style="top:1029.28px;height:15.08px;line-height:15.08px;font-family:'Liberation Sans', sans-serif;font-size:13.5px;color:#000;white-space:nowrap;font-weight:700;-webkit-text-stroke:0.2px #000;font-style:italic;left:-438.5px;width:2000px;text-align:center;">₱</div>
<div style="top:1029.37px;height:14.97px;line-height:14.97px;font-family:'Liberation Sans', sans-serif;font-size:13.4px;color:#274e13;white-space:nowrap;font-weight:700;-webkit-text-stroke:0.2px #274e13;font-style:italic;left:-373.5px;width:2000px;text-align:center;transform:scaleX(0.99);transform-origin:center;">0.00</div>
<div style="left:692.9px;top:1028px;width:14.5px;height:14.5px;border:1.7px solid #587a5c;border-radius:2px;"></div>
<div style="left:8px;top:1048.5px;width:721px;height:1px;background:repeating-linear-gradient(90deg,#6f8f73 0 3px,transparent 3px 6px);"></div>
<div style="left:212.5px;top:579px;width:1px;height:467px;background:repeating-linear-gradient(180deg,#6f8f73 0 2px,transparent 2px 4px);"></div>
<div style="left:277.5px;top:579px;width:1px;height:467px;background:repeating-linear-gradient(180deg,#6f8f73 0 2px,transparent 2px 4px);"></div>
<div style="left:412.5px;top:579px;width:1px;height:467px;background:repeating-linear-gradient(180deg,#6f8f73 0 2px,transparent 2px 4px);"></div>
<div style="left:539.5px;top:579px;width:1px;height:467px;background:#6f8f73;"></div>
<div style="left:669.5px;top:579px;width:1px;height:467px;background:#6f8f73;"></div>
<div style="left:8px;top:538px;width:722px;height:518px;border:1px solid #6f8f73;"></div>
<div style="left:764px;top:538px;width:665px;height:41px;background:#73907a;"></div>
<div style="top:548.85px;height:21.78px;line-height:21.78px;font-family:'Liberation Sans', sans-serif;font-size:19.5px;color:#f5f3ee;white-space:nowrap;font-weight:700;-webkit-text-stroke:0.2px #f5f3ee;letter-spacing:4.5px;left:96.5px;width:2000px;text-align:center;text-indent:4.5px;transform:scaleX(1.12);transform-origin:center;">BILLS</div>
<div style="left:764px;top:579px;width:665px;height:35px;background:#d9d9d9;"></div>
<div style="left:764px;top:614px;width:476px;height:432px;background:#ffffff;"></div>
<div style="left:1240px;top:614px;width:130px;height:432px;background:#d6e1d6;"></div>
<div style="left:1370px;top:614px;width:59px;height:432px;background:#e5ebe5;"></div>
<div style="top:589.96px;height:14.86px;line-height:14.86px;font-family:'Liberation Sans', sans-serif;font-size:13.3px;color:#000;white-space:nowrap;font-style:italic;left:-161.5px;width:2000px;text-align:center;transform:scaleX(1.07);transform-origin:center;">Bill Category</div>
<div style="top:589.96px;height:14.86px;line-height:14.86px;font-family:'Liberation Sans', sans-serif;font-size:13.3px;color:#000;white-space:nowrap;font-style:italic;left:-54.5px;width:2000px;text-align:center;transform:scaleX(1.04);transform-origin:center;">Due Date</div>
<div style="top:589.69px;height:15.19px;line-height:15.19px;font-family:'Liberation Sans', sans-serif;font-size:13.6px;color:#000;white-space:nowrap;font-weight:700;-webkit-text-stroke:0.2px #000;letter-spacing:2.6px;left:45.5px;width:2000px;text-align:center;text-indent:2.6px;transform:scaleX(1.05);transform-origin:center;">BUDGETED</div>
<div style="top:589.69px;height:15.19px;line-height:15.19px;font-family:'Liberation Sans', sans-serif;font-size:13.6px;color:#000;white-space:nowrap;font-weight:700;-webkit-text-stroke:0.2px #000;letter-spacing:2.6px;left:176.5px;width:2000px;text-align:center;text-indent:2.6px;transform:scaleX(1.05);transform-origin:center;">ACTUAL</div>
<div style="top:589.69px;height:15.19px;line-height:15.19px;font-family:'Liberation Sans', sans-serif;font-size:13.6px;color:#000;white-space:nowrap;font-weight:700;-webkit-text-stroke:0.2px #000;letter-spacing:2.6px;left:305px;width:2000px;text-align:center;text-indent:2.6px;transform:scaleX(1.05);transform-origin:center;">VARIANCE</div>
<div style="top:589.96px;height:14.86px;line-height:14.86px;font-family:'Liberation Sans', sans-serif;font-size:13.3px;color:#000;white-space:nowrap;font-style:italic;left:399.5px;width:2000px;text-align:center;transform:scaleX(1.04);transform-origin:center;">Paid</div>
<div style="left:764px;top:614px;width:149px;height:29px;overflow:hidden;">
<div style="top:9.37px;height:14.97px;line-height:14.97px;font-family:'Liberation Sans', sans-serif;font-size:13.4px;color:#000;white-space:nowrap;font-weight:700;-webkit-text-stroke:0.2px #000;left:5px;transform:scaleX(1.04);transform-origin:left;">Cavite House Monthly</div>
</div>
<div style="top:623.37px;height:14.97px;line-height:14.97px;font-family:'Liberation Sans', sans-serif;font-size:13.4px;color:#000;white-space:nowrap;left:-54.5px;width:2000px;text-align:center;transform:scaleX(1.12);transform-origin:center;">30th</div>
<div style="top:623.28px;height:15.08px;line-height:15.08px;font-family:'Liberation Sans', sans-serif;font-size:13.5px;color:#000;white-space:nowrap;left:0px;width:2000px;text-align:center;">₱</div>
<div style="top:623.37px;height:14.97px;line-height:14.97px;font-family:'Liberation Sans', sans-serif;font-size:13.4px;color:#000;white-space:nowrap;left:67.5px;width:2000px;text-align:center;transform:scaleX(0.96);transform-origin:center;">10,711.18</div>
<div style="top:623.28px;height:15.08px;line-height:15.08px;font-family:'Liberation Sans', sans-serif;font-size:13.5px;color:#000;white-space:nowrap;left:135px;width:2000px;text-align:center;">₱</div>
<div style="top:623.37px;height:14.97px;line-height:14.97px;font-family:'Liberation Sans', sans-serif;font-size:13.4px;color:#000;white-space:nowrap;left:198.5px;width:2000px;text-align:center;transform:scaleX(0.96);transform-origin:center;">10,660.23</div>
<div style="top:623.28px;height:15.08px;line-height:15.08px;font-family:'Liberation Sans', sans-serif;font-size:13.5px;color:#000;white-space:nowrap;font-weight:700;-webkit-text-stroke:0.2px #000;font-style:italic;left:261.5px;width:2000px;text-align:center;">₱</div>
<div style="top:623.37px;height:14.97px;line-height:14.97px;font-family:'Liberation Sans', sans-serif;font-size:13.4px;color:#274e13;white-space:nowrap;font-weight:700;-webkit-text-stroke:0.2px #274e13;font-style:italic;left:326.5px;width:2000px;text-align:center;transform:scaleX(0.99);transform-origin:center;">-50.95</div>
<div style="left:1392.9px;top:622px;width:14.5px;height:14.5px;border:1.7px solid #587a5c;border-radius:2px;"></div>
<div style="left:764px;top:642.5px;width:665px;height:1px;background:repeating-linear-gradient(90deg,#6f8f73 0 3px,transparent 3px 6px);"></div>
<div style="left:764px;top:643px;width:149px;height:29px;overflow:hidden;">
<div style="top:9.37px;height:14.97px;line-height:14.97px;font-family:'Liberation Sans', sans-serif;font-size:13.4px;color:#000;white-space:nowrap;font-weight:700;-webkit-text-stroke:0.2px #000;left:5px;transform:scaleX(1.04);transform-origin:left;">Family House Monthly</div>
</div>
<div style="top:652.37px;height:14.97px;line-height:14.97px;font-family:'Liberation Sans', sans-serif;font-size:13.4px;color:#000;white-space:nowrap;left:-54.5px;width:2000px;text-align:center;transform:scaleX(1.12);transform-origin:center;">30th</div>
<div style="top:652.28px;height:15.08px;line-height:15.08px;font-family:'Liberation Sans', sans-serif;font-size:13.5px;color:#000;white-space:nowrap;left:0px;width:2000px;text-align:center;">₱</div>
<div style="top:652.37px;height:14.97px;line-height:14.97px;font-family:'Liberation Sans', sans-serif;font-size:13.4px;color:#000;white-space:nowrap;left:67.5px;width:2000px;text-align:center;transform:scaleX(0.96);transform-origin:center;">6,000.00</div>
<div style="top:652.28px;height:15.08px;line-height:15.08px;font-family:'Liberation Sans', sans-serif;font-size:13.5px;color:#000;white-space:nowrap;left:135px;width:2000px;text-align:center;">₱</div>
<div style="top:652.37px;height:14.97px;line-height:14.97px;font-family:'Liberation Sans', sans-serif;font-size:13.4px;color:#000;white-space:nowrap;left:198.5px;width:2000px;text-align:center;transform:scaleX(0.96);transform-origin:center;">6,000.00</div>
<div style="top:652.28px;height:15.08px;line-height:15.08px;font-family:'Liberation Sans', sans-serif;font-size:13.5px;color:#000;white-space:nowrap;font-weight:700;-webkit-text-stroke:0.2px #000;font-style:italic;left:261.5px;width:2000px;text-align:center;">₱</div>
<div style="top:652.37px;height:14.97px;line-height:14.97px;font-family:'Liberation Sans', sans-serif;font-size:13.4px;color:#274e13;white-space:nowrap;font-weight:700;-webkit-text-stroke:0.2px #274e13;font-style:italic;left:326.5px;width:2000px;text-align:center;transform:scaleX(0.99);transform-origin:center;">0.00</div>
<div style="left:1392.9px;top:651px;width:14.5px;height:14.5px;border:1.7px solid #587a5c;border-radius:2px;"></div>
<div style="left:764px;top:671.5px;width:665px;height:1px;background:repeating-linear-gradient(90deg,#6f8f73 0 3px,transparent 3px 6px);"></div>
<div style="left:764px;top:672px;width:149px;height:29px;overflow:hidden;">
<div style="top:9.37px;height:14.97px;line-height:14.97px;font-family:'Liberation Sans', sans-serif;font-size:13.4px;color:#000;white-space:nowrap;font-weight:700;-webkit-text-stroke:0.2px #000;left:5px;transform:scaleX(1.04);transform-origin:left;">Electric Bill</div>
</div>
<div style="top:681.37px;height:14.97px;line-height:14.97px;font-family:'Liberation Sans', sans-serif;font-size:13.4px;color:#000;white-space:nowrap;left:-54.5px;width:2000px;text-align:center;transform:scaleX(1.12);transform-origin:center;">25th</div>
<div style="top:681.28px;height:15.08px;line-height:15.08px;font-family:'Liberation Sans', sans-serif;font-size:13.5px;color:#000;white-space:nowrap;left:0px;width:2000px;text-align:center;">₱</div>
<div style="top:681.37px;height:14.97px;line-height:14.97px;font-family:'Liberation Sans', sans-serif;font-size:13.4px;color:#000;white-space:nowrap;left:67.5px;width:2000px;text-align:center;transform:scaleX(0.96);transform-origin:center;">3,500.00</div>
<div style="top:681.28px;height:15.08px;line-height:15.08px;font-family:'Liberation Sans', sans-serif;font-size:13.5px;color:#000;white-space:nowrap;left:135px;width:2000px;text-align:center;">₱</div>
<div style="top:681.37px;height:14.97px;line-height:14.97px;font-family:'Liberation Sans', sans-serif;font-size:13.4px;color:#000;white-space:nowrap;left:198.5px;width:2000px;text-align:center;transform:scaleX(0.96);transform-origin:center;">3,229.61</div>
<div style="top:681.28px;height:15.08px;line-height:15.08px;font-family:'Liberation Sans', sans-serif;font-size:13.5px;color:#000;white-space:nowrap;font-weight:700;-webkit-text-stroke:0.2px #000;font-style:italic;left:261.5px;width:2000px;text-align:center;">₱</div>
<div style="top:681.37px;height:14.97px;line-height:14.97px;font-family:'Liberation Sans', sans-serif;font-size:13.4px;color:#274e13;white-space:nowrap;font-weight:700;-webkit-text-stroke:0.2px #274e13;font-style:italic;left:326.5px;width:2000px;text-align:center;transform:scaleX(0.99);transform-origin:center;">-270.39</div>
<div style="left:1392.9px;top:680px;width:14.5px;height:14.5px;border:1.7px solid #587a5c;border-radius:2px;"></div>
<div style="left:764px;top:700.5px;width:665px;height:1px;background:repeating-linear-gradient(90deg,#6f8f73 0 3px,transparent 3px 6px);"></div>
<div style="left:764px;top:701px;width:149px;height:29px;overflow:hidden;">
<div style="top:9.37px;height:14.97px;line-height:14.97px;font-family:'Liberation Sans', sans-serif;font-size:13.4px;color:#000;white-space:nowrap;font-weight:700;-webkit-text-stroke:0.2px #000;left:5px;transform:scaleX(1.04);transform-origin:left;">Internet Bill</div>
</div>
<div style="top:710.37px;height:14.97px;line-height:14.97px;font-family:'Liberation Sans', sans-serif;font-size:13.4px;color:#000;white-space:nowrap;left:-54.5px;width:2000px;text-align:center;transform:scaleX(1.12);transform-origin:center;">25th</div>
<div style="top:710.28px;height:15.08px;line-height:15.08px;font-family:'Liberation Sans', sans-serif;font-size:13.5px;color:#000;white-space:nowrap;left:0px;width:2000px;text-align:center;">₱</div>
<div style="top:710.37px;height:14.97px;line-height:14.97px;font-family:'Liberation Sans', sans-serif;font-size:13.4px;color:#000;white-space:nowrap;left:67.5px;width:2000px;text-align:center;transform:scaleX(0.96);transform-origin:center;">750.00</div>
<div style="top:710.28px;height:15.08px;line-height:15.08px;font-family:'Liberation Sans', sans-serif;font-size:13.5px;color:#000;white-space:nowrap;left:135px;width:2000px;text-align:center;">₱</div>
<div style="top:710.37px;height:14.97px;line-height:14.97px;font-family:'Liberation Sans', sans-serif;font-size:13.4px;color:#000;white-space:nowrap;left:198.5px;width:2000px;text-align:center;transform:scaleX(0.96);transform-origin:center;">749.50</div>
<div style="top:710.28px;height:15.08px;line-height:15.08px;font-family:'Liberation Sans', sans-serif;font-size:13.5px;color:#000;white-space:nowrap;font-weight:700;-webkit-text-stroke:0.2px #000;font-style:italic;left:261.5px;width:2000px;text-align:center;">₱</div>
<div style="top:710.37px;height:14.97px;line-height:14.97px;font-family:'Liberation Sans', sans-serif;font-size:13.4px;color:#274e13;white-space:nowrap;font-weight:700;-webkit-text-stroke:0.2px #274e13;font-style:italic;left:326.5px;width:2000px;text-align:center;transform:scaleX(0.99);transform-origin:center;">-0.50</div>
<div style="left:1392.9px;top:709px;width:14.5px;height:14.5px;border:1.7px solid #587a5c;border-radius:2px;"></div>
<div style="left:764px;top:729.5px;width:665px;height:1px;background:repeating-linear-gradient(90deg,#6f8f73 0 3px,transparent 3px 6px);"></div>
<div style="left:764px;top:730px;width:149px;height:29px;overflow:hidden;">
<div style="top:9.37px;height:14.97px;line-height:14.97px;font-family:'Liberation Sans', sans-serif;font-size:13.4px;color:#000;white-space:nowrap;font-weight:700;-webkit-text-stroke:0.2px #000;left:5px;transform:scaleX(1.04);transform-origin:left;">HealthMax Insurance</div>
</div>
<div style="top:739.37px;height:14.97px;line-height:14.97px;font-family:'Liberation Sans', sans-serif;font-size:13.4px;color:#000;white-space:nowrap;left:-54.5px;width:2000px;text-align:center;transform:scaleX(1.12);transform-origin:center;">25th</div>
<div style="top:739.28px;height:15.08px;line-height:15.08px;font-family:'Liberation Sans', sans-serif;font-size:13.5px;color:#000;white-space:nowrap;left:0px;width:2000px;text-align:center;">₱</div>
<div style="top:739.37px;height:14.97px;line-height:14.97px;font-family:'Liberation Sans', sans-serif;font-size:13.4px;color:#000;white-space:nowrap;left:67.5px;width:2000px;text-align:center;transform:scaleX(0.96);transform-origin:center;">2,547.05</div>
<div style="top:739.28px;height:15.08px;line-height:15.08px;font-family:'Liberation Sans', sans-serif;font-size:13.5px;color:#000;white-space:nowrap;left:135px;width:2000px;text-align:center;">₱</div>
<div style="top:739.37px;height:14.97px;line-height:14.97px;font-family:'Liberation Sans', sans-serif;font-size:13.4px;color:#000;white-space:nowrap;left:198.5px;width:2000px;text-align:center;transform:scaleX(0.96);transform-origin:center;">2,547.05</div>
<div style="top:739.28px;height:15.08px;line-height:15.08px;font-family:'Liberation Sans', sans-serif;font-size:13.5px;color:#000;white-space:nowrap;font-weight:700;-webkit-text-stroke:0.2px #000;font-style:italic;left:261.5px;width:2000px;text-align:center;">₱</div>
<div style="top:739.37px;height:14.97px;line-height:14.97px;font-family:'Liberation Sans', sans-serif;font-size:13.4px;color:#274e13;white-space:nowrap;font-weight:700;-webkit-text-stroke:0.2px #274e13;font-style:italic;left:326.5px;width:2000px;text-align:center;transform:scaleX(0.99);transform-origin:center;">0.00</div>
<div style="left:1392.9px;top:738px;width:14.5px;height:14.5px;border:1.7px solid #587a5c;border-radius:2px;"></div>
<div style="left:764px;top:758.5px;width:665px;height:1px;background:repeating-linear-gradient(90deg,#6f8f73 0 3px,transparent 3px 6px);"></div>
<div style="left:764px;top:759px;width:149px;height:29px;overflow:hidden;">
<div style="top:9.37px;height:14.97px;line-height:14.97px;font-family:'Liberation Sans', sans-serif;font-size:13.4px;color:#000;white-space:nowrap;font-weight:700;-webkit-text-stroke:0.2px #000;left:5px;transform:scaleX(1.04);transform-origin:left;">AF Gym Membership</div>
</div>
<div style="top:768.37px;height:14.97px;line-height:14.97px;font-family:'Liberation Sans', sans-serif;font-size:13.4px;color:#000;white-space:nowrap;left:-54.5px;width:2000px;text-align:center;transform:scaleX(1.12);transform-origin:center;">1st</div>
<div style="top:768.28px;height:15.08px;line-height:15.08px;font-family:'Liberation Sans', sans-serif;font-size:13.5px;color:#000;white-space:nowrap;left:0px;width:2000px;text-align:center;">₱</div>
<div style="top:768.37px;height:14.97px;line-height:14.97px;font-family:'Liberation Sans', sans-serif;font-size:13.4px;color:#000;white-space:nowrap;left:67.5px;width:2000px;text-align:center;transform:scaleX(0.96);transform-origin:center;">2,300.00</div>
<div style="top:768.28px;height:15.08px;line-height:15.08px;font-family:'Liberation Sans', sans-serif;font-size:13.5px;color:#000;white-space:nowrap;left:135px;width:2000px;text-align:center;">₱</div>
<div style="top:768.37px;height:14.97px;line-height:14.97px;font-family:'Liberation Sans', sans-serif;font-size:13.4px;color:#000;white-space:nowrap;left:198.5px;width:2000px;text-align:center;transform:scaleX(0.96);transform-origin:center;">2,300.00</div>
<div style="top:768.28px;height:15.08px;line-height:15.08px;font-family:'Liberation Sans', sans-serif;font-size:13.5px;color:#000;white-space:nowrap;font-weight:700;-webkit-text-stroke:0.2px #000;font-style:italic;left:261.5px;width:2000px;text-align:center;">₱</div>
<div style="top:768.37px;height:14.97px;line-height:14.97px;font-family:'Liberation Sans', sans-serif;font-size:13.4px;color:#274e13;white-space:nowrap;font-weight:700;-webkit-text-stroke:0.2px #274e13;font-style:italic;left:326.5px;width:2000px;text-align:center;transform:scaleX(0.99);transform-origin:center;">0.00</div>
<div style="left:1392.9px;top:767px;width:14.5px;height:14.5px;border:1.7px solid #587a5c;border-radius:2px;"></div>
<div style="left:764px;top:787.5px;width:665px;height:1px;background:repeating-linear-gradient(90deg,#6f8f73 0 3px,transparent 3px 6px);"></div>
<div style="left:764px;top:788px;width:149px;height:29px;overflow:hidden;">
<div style="top:9.37px;height:14.97px;line-height:14.97px;font-family:'Liberation Sans', sans-serif;font-size:13.4px;color:#000;white-space:nowrap;font-weight:700;-webkit-text-stroke:0.2px #000;left:5px;transform:scaleX(1.04);transform-origin:left;">Mama's Allowance</div>
</div>
<div style="top:797.37px;height:14.97px;line-height:14.97px;font-family:'Liberation Sans', sans-serif;font-size:13.4px;color:#000;white-space:nowrap;left:-54.5px;width:2000px;text-align:center;transform:scaleX(1.12);transform-origin:center;">30th</div>
<div style="top:797.28px;height:15.08px;line-height:15.08px;font-family:'Liberation Sans', sans-serif;font-size:13.5px;color:#000;white-space:nowrap;left:0px;width:2000px;text-align:center;">₱</div>
<div style="top:797.37px;height:14.97px;line-height:14.97px;font-family:'Liberation Sans', sans-serif;font-size:13.4px;color:#000;white-space:nowrap;left:67.5px;width:2000px;text-align:center;transform:scaleX(0.96);transform-origin:center;">2,000.00</div>
<div style="top:797.28px;height:15.08px;line-height:15.08px;font-family:'Liberation Sans', sans-serif;font-size:13.5px;color:#000;white-space:nowrap;left:135px;width:2000px;text-align:center;">₱</div>
<div style="top:797.37px;height:14.97px;line-height:14.97px;font-family:'Liberation Sans', sans-serif;font-size:13.4px;color:#000;white-space:nowrap;left:198.5px;width:2000px;text-align:center;transform:scaleX(0.96);transform-origin:center;">-</div>
<div style="top:797.28px;height:15.08px;line-height:15.08px;font-family:'Liberation Sans', sans-serif;font-size:13.5px;color:#000;white-space:nowrap;font-weight:700;-webkit-text-stroke:0.2px #000;font-style:italic;left:261.5px;width:2000px;text-align:center;">₱</div>
<div style="top:797.37px;height:14.97px;line-height:14.97px;font-family:'Liberation Sans', sans-serif;font-size:13.4px;color:#274e13;white-space:nowrap;font-weight:700;-webkit-text-stroke:0.2px #274e13;font-style:italic;left:326.5px;width:2000px;text-align:center;transform:scaleX(0.99);transform-origin:center;">-2,000.00</div>
<div style="left:1392.9px;top:796px;width:14.5px;height:14.5px;border:1.7px solid #587a5c;border-radius:2px;"></div>
<div style="left:764px;top:816.5px;width:665px;height:1px;background:repeating-linear-gradient(90deg,#6f8f73 0 3px,transparent 3px 6px);"></div>
<div style="left:764px;top:817px;width:149px;height:29px;overflow:hidden;">
<div style="top:9.37px;height:14.97px;line-height:14.97px;font-family:'Liberation Sans', sans-serif;font-size:13.4px;color:#000;white-space:nowrap;font-weight:700;-webkit-text-stroke:0.2px #000;left:5px;transform:scaleX(1.04);transform-origin:left;">Papa's Allowance</div>
</div>
<div style="top:826.37px;height:14.97px;line-height:14.97px;font-family:'Liberation Sans', sans-serif;font-size:13.4px;color:#000;white-space:nowrap;left:-54.5px;width:2000px;text-align:center;transform:scaleX(1.12);transform-origin:center;">30th</div>
<div style="top:826.28px;height:15.08px;line-height:15.08px;font-family:'Liberation Sans', sans-serif;font-size:13.5px;color:#000;white-space:nowrap;left:0px;width:2000px;text-align:center;">₱</div>
<div style="top:826.37px;height:14.97px;line-height:14.97px;font-family:'Liberation Sans', sans-serif;font-size:13.4px;color:#000;white-space:nowrap;left:67.5px;width:2000px;text-align:center;transform:scaleX(0.96);transform-origin:center;">2,000.00</div>
<div style="top:826.28px;height:15.08px;line-height:15.08px;font-family:'Liberation Sans', sans-serif;font-size:13.5px;color:#000;white-space:nowrap;left:135px;width:2000px;text-align:center;">₱</div>
<div style="top:826.37px;height:14.97px;line-height:14.97px;font-family:'Liberation Sans', sans-serif;font-size:13.4px;color:#000;white-space:nowrap;left:198.5px;width:2000px;text-align:center;transform:scaleX(0.96);transform-origin:center;">500.00</div>
<div style="top:826.28px;height:15.08px;line-height:15.08px;font-family:'Liberation Sans', sans-serif;font-size:13.5px;color:#000;white-space:nowrap;font-weight:700;-webkit-text-stroke:0.2px #000;font-style:italic;left:261.5px;width:2000px;text-align:center;">₱</div>
<div style="top:826.37px;height:14.97px;line-height:14.97px;font-family:'Liberation Sans', sans-serif;font-size:13.4px;color:#274e13;white-space:nowrap;font-weight:700;-webkit-text-stroke:0.2px #274e13;font-style:italic;left:326.5px;width:2000px;text-align:center;transform:scaleX(0.99);transform-origin:center;">-1,500.00</div>
<div style="left:1392.9px;top:825px;width:14.5px;height:14.5px;border:1.7px solid #587a5c;border-radius:2px;"></div>
<div style="left:764px;top:845.5px;width:665px;height:1px;background:repeating-linear-gradient(90deg,#6f8f73 0 3px,transparent 3px 6px);"></div>
<div style="top:855.28px;height:15.08px;line-height:15.08px;font-family:'Liberation Sans', sans-serif;font-size:13.5px;color:#000;white-space:nowrap;font-weight:700;-webkit-text-stroke:0.2px #000;font-style:italic;left:261.5px;width:2000px;text-align:center;">₱</div>
<div style="top:855.37px;height:14.97px;line-height:14.97px;font-family:'Liberation Sans', sans-serif;font-size:13.4px;color:#274e13;white-space:nowrap;font-weight:700;-webkit-text-stroke:0.2px #274e13;font-style:italic;left:326.5px;width:2000px;text-align:center;transform:scaleX(0.99);transform-origin:center;">0.00</div>
<div style="left:1392.9px;top:854px;width:14.5px;height:14.5px;border:1.7px solid #587a5c;border-radius:2px;"></div>
<div style="left:764px;top:874.5px;width:665px;height:1px;background:repeating-linear-gradient(90deg,#6f8f73 0 3px,transparent 3px 6px);"></div>
<div style="top:884.28px;height:15.08px;line-height:15.08px;font-family:'Liberation Sans', sans-serif;font-size:13.5px;color:#000;white-space:nowrap;font-weight:700;-webkit-text-stroke:0.2px #000;font-style:italic;left:261.5px;width:2000px;text-align:center;">₱</div>
<div style="top:884.37px;height:14.97px;line-height:14.97px;font-family:'Liberation Sans', sans-serif;font-size:13.4px;color:#274e13;white-space:nowrap;font-weight:700;-webkit-text-stroke:0.2px #274e13;font-style:italic;left:326.5px;width:2000px;text-align:center;transform:scaleX(0.99);transform-origin:center;">0.00</div>
<div style="left:1392.9px;top:883px;width:14.5px;height:14.5px;border:1.7px solid #587a5c;border-radius:2px;"></div>
<div style="left:764px;top:903.5px;width:665px;height:1px;background:repeating-linear-gradient(90deg,#6f8f73 0 3px,transparent 3px 6px);"></div>
<div style="top:913.28px;height:15.08px;line-height:15.08px;font-family:'Liberation Sans', sans-serif;font-size:13.5px;color:#000;white-space:nowrap;font-weight:700;-webkit-text-stroke:0.2px #000;font-style:italic;left:261.5px;width:2000px;text-align:center;">₱</div>
<div style="top:913.37px;height:14.97px;line-height:14.97px;font-family:'Liberation Sans', sans-serif;font-size:13.4px;color:#274e13;white-space:nowrap;font-weight:700;-webkit-text-stroke:0.2px #274e13;font-style:italic;left:326.5px;width:2000px;text-align:center;transform:scaleX(0.99);transform-origin:center;">0.00</div>
<div style="left:1392.9px;top:912px;width:14.5px;height:14.5px;border:1.7px solid #587a5c;border-radius:2px;"></div>
<div style="left:764px;top:932.5px;width:665px;height:1px;background:repeating-linear-gradient(90deg,#6f8f73 0 3px,transparent 3px 6px);"></div>
<div style="top:942.28px;height:15.08px;line-height:15.08px;font-family:'Liberation Sans', sans-serif;font-size:13.5px;color:#000;white-space:nowrap;font-weight:700;-webkit-text-stroke:0.2px #000;font-style:italic;left:261.5px;width:2000px;text-align:center;">₱</div>
<div style="top:942.37px;height:14.97px;line-height:14.97px;font-family:'Liberation Sans', sans-serif;font-size:13.4px;color:#274e13;white-space:nowrap;font-weight:700;-webkit-text-stroke:0.2px #274e13;font-style:italic;left:326.5px;width:2000px;text-align:center;transform:scaleX(0.99);transform-origin:center;">0.00</div>
<div style="left:1392.9px;top:941px;width:14.5px;height:14.5px;border:1.7px solid #587a5c;border-radius:2px;"></div>
<div style="left:764px;top:961.5px;width:665px;height:1px;background:repeating-linear-gradient(90deg,#6f8f73 0 3px,transparent 3px 6px);"></div>
<div style="top:971.28px;height:15.08px;line-height:15.08px;font-family:'Liberation Sans', sans-serif;font-size:13.5px;color:#000;white-space:nowrap;font-weight:700;-webkit-text-stroke:0.2px #000;font-style:italic;left:261.5px;width:2000px;text-align:center;">₱</div>
<div style="top:971.37px;height:14.97px;line-height:14.97px;font-family:'Liberation Sans', sans-serif;font-size:13.4px;color:#274e13;white-space:nowrap;font-weight:700;-webkit-text-stroke:0.2px #274e13;font-style:italic;left:326.5px;width:2000px;text-align:center;transform:scaleX(0.99);transform-origin:center;">0.00</div>
<div style="left:1392.9px;top:970px;width:14.5px;height:14.5px;border:1.7px solid #587a5c;border-radius:2px;"></div>
<div style="left:764px;top:990.5px;width:665px;height:1px;background:repeating-linear-gradient(90deg,#6f8f73 0 3px,transparent 3px 6px);"></div>
<div style="top:1000.28px;height:15.08px;line-height:15.08px;font-family:'Liberation Sans', sans-serif;font-size:13.5px;color:#000;white-space:nowrap;font-weight:700;-webkit-text-stroke:0.2px #000;font-style:italic;left:261.5px;width:2000px;text-align:center;">₱</div>
<div style="top:1000.37px;height:14.97px;line-height:14.97px;font-family:'Liberation Sans', sans-serif;font-size:13.4px;color:#274e13;white-space:nowrap;font-weight:700;-webkit-text-stroke:0.2px #274e13;font-style:italic;left:326.5px;width:2000px;text-align:center;transform:scaleX(0.99);transform-origin:center;">0.00</div>
<div style="left:1392.9px;top:999px;width:14.5px;height:14.5px;border:1.7px solid #587a5c;border-radius:2px;"></div>
<div style="left:764px;top:1019.5px;width:665px;height:1px;background:repeating-linear-gradient(90deg,#6f8f73 0 3px,transparent 3px 6px);"></div>
<div style="top:1029.28px;height:15.08px;line-height:15.08px;font-family:'Liberation Sans', sans-serif;font-size:13.5px;color:#000;white-space:nowrap;font-weight:700;-webkit-text-stroke:0.2px #000;font-style:italic;left:261.5px;width:2000px;text-align:center;">₱</div>
<div style="top:1029.37px;height:14.97px;line-height:14.97px;font-family:'Liberation Sans', sans-serif;font-size:13.4px;color:#274e13;white-space:nowrap;font-weight:700;-webkit-text-stroke:0.2px #274e13;font-style:italic;left:326.5px;width:2000px;text-align:center;transform:scaleX(0.99);transform-origin:center;">0.00</div>
<div style="left:1392.9px;top:1028px;width:14.5px;height:14.5px;border:1.7px solid #587a5c;border-radius:2px;"></div>
<div style="left:764px;top:1048.5px;width:665px;height:1px;background:repeating-linear-gradient(90deg,#6f8f73 0 3px,transparent 3px 6px);"></div>
<div style="left:912.5px;top:579px;width:1px;height:467px;background:repeating-linear-gradient(180deg,#6f8f73 0 2px,transparent 2px 4px);"></div>
<div style="left:977.5px;top:579px;width:1px;height:467px;background:repeating-linear-gradient(180deg,#6f8f73 0 2px,transparent 2px 4px);"></div>
<div style="left:1112.5px;top:579px;width:1px;height:467px;background:repeating-linear-gradient(180deg,#6f8f73 0 2px,transparent 2px 4px);"></div>
<div style="left:1239.5px;top:579px;width:1px;height:467px;background:#6f8f73;"></div>
<div style="left:1369.5px;top:579px;width:1px;height:467px;background:#6f8f73;"></div>
<div style="left:764px;top:538px;width:666px;height:518px;border:1px solid #6f8f73;"></div>
<div style="left:1464px;top:538px;width:665px;height:41px;background:#73907a;"></div>
<div style="top:548.85px;height:21.78px;line-height:21.78px;font-family:'Liberation Sans', sans-serif;font-size:19.5px;color:#f5f3ee;white-space:nowrap;font-weight:700;-webkit-text-stroke:0.2px #f5f3ee;letter-spacing:4.5px;left:796.5px;width:2000px;text-align:center;text-indent:4.5px;transform:scaleX(1.12);transform-origin:center;">SUBSCRIPTIONS</div>
<div style="left:1464px;top:579px;width:665px;height:35px;background:#d9d9d9;"></div>
<div style="left:1464px;top:614px;width:476px;height:432px;background:#ffffff;"></div>
<div style="left:1940px;top:614px;width:130px;height:432px;background:#d6e1d6;"></div>
<div style="left:2070px;top:614px;width:59px;height:432px;background:#e5ebe5;"></div>
<div style="top:589.96px;height:14.86px;line-height:14.86px;font-family:'Liberation Sans', sans-serif;font-size:13.3px;color:#000;white-space:nowrap;font-style:italic;left:538.5px;width:2000px;text-align:center;transform:scaleX(1.07);transform-origin:center;">Subscriptions Category</div>
<div style="top:589.96px;height:14.86px;line-height:14.86px;font-family:'Liberation Sans', sans-serif;font-size:13.3px;color:#000;white-space:nowrap;font-style:italic;left:645.5px;width:2000px;text-align:center;transform:scaleX(1.04);transform-origin:center;">Due Date</div>
<div style="top:589.69px;height:15.19px;line-height:15.19px;font-family:'Liberation Sans', sans-serif;font-size:13.6px;color:#000;white-space:nowrap;font-weight:700;-webkit-text-stroke:0.2px #000;letter-spacing:2.6px;left:745.5px;width:2000px;text-align:center;text-indent:2.6px;transform:scaleX(1.05);transform-origin:center;">BUDGETED</div>
<div style="top:589.69px;height:15.19px;line-height:15.19px;font-family:'Liberation Sans', sans-serif;font-size:13.6px;color:#000;white-space:nowrap;font-weight:700;-webkit-text-stroke:0.2px #000;letter-spacing:2.6px;left:876.5px;width:2000px;text-align:center;text-indent:2.6px;transform:scaleX(1.05);transform-origin:center;">ACTUAL</div>
<div style="top:589.69px;height:15.19px;line-height:15.19px;font-family:'Liberation Sans', sans-serif;font-size:13.6px;color:#000;white-space:nowrap;font-weight:700;-webkit-text-stroke:0.2px #000;letter-spacing:2.6px;left:1005px;width:2000px;text-align:center;text-indent:2.6px;transform:scaleX(1.05);transform-origin:center;">VARIANCE</div>
<div style="top:589.96px;height:14.86px;line-height:14.86px;font-family:'Liberation Sans', sans-serif;font-size:13.3px;color:#000;white-space:nowrap;font-style:italic;left:1099.5px;width:2000px;text-align:center;transform:scaleX(1.04);transform-origin:center;">Paid</div>
<div style="left:1464px;top:614px;width:149px;height:29px;overflow:hidden;">
<div style="top:9.37px;height:14.97px;line-height:14.97px;font-family:'Liberation Sans', sans-serif;font-size:13.4px;color:#000;white-space:nowrap;font-weight:700;-webkit-text-stroke:0.2px #000;left:5px;transform:scaleX(1.04);transform-origin:left;">Spotify</div>
</div>
<div style="top:623.37px;height:14.97px;line-height:14.97px;font-family:'Liberation Sans', sans-serif;font-size:13.4px;color:#000;white-space:nowrap;left:645.5px;width:2000px;text-align:center;transform:scaleX(1.12);transform-origin:center;">20th</div>
<div style="top:623.28px;height:15.08px;line-height:15.08px;font-family:'Liberation Sans', sans-serif;font-size:13.5px;color:#000;white-space:nowrap;left:700px;width:2000px;text-align:center;">₱</div>
<div style="top:623.37px;height:14.97px;line-height:14.97px;font-family:'Liberation Sans', sans-serif;font-size:13.4px;color:#000;white-space:nowrap;left:767.5px;width:2000px;text-align:center;transform:scaleX(0.96);transform-origin:center;">199.00</div>
<div style="top:623.28px;height:15.08px;line-height:15.08px;font-family:'Liberation Sans', sans-serif;font-size:13.5px;color:#000;white-space:nowrap;left:835px;width:2000px;text-align:center;">₱</div>
<div style="top:623.37px;height:14.97px;line-height:14.97px;font-family:'Liberation Sans', sans-serif;font-size:13.4px;color:#000;white-space:nowrap;left:898.5px;width:2000px;text-align:center;transform:scaleX(0.96);transform-origin:center;">-</div>
<div style="top:623.28px;height:15.08px;line-height:15.08px;font-family:'Liberation Sans', sans-serif;font-size:13.5px;color:#000;white-space:nowrap;font-weight:700;-webkit-text-stroke:0.2px #000;font-style:italic;left:961.5px;width:2000px;text-align:center;">₱</div>
<div style="top:623.37px;height:14.97px;line-height:14.97px;font-family:'Liberation Sans', sans-serif;font-size:13.4px;color:#274e13;white-space:nowrap;font-weight:700;-webkit-text-stroke:0.2px #274e13;font-style:italic;left:1026.5px;width:2000px;text-align:center;transform:scaleX(0.99);transform-origin:center;">-199.00</div>
<div style="left:2092.9px;top:622px;width:14.5px;height:14.5px;border:1.7px solid #587a5c;border-radius:2px;"></div>
<div style="left:1464px;top:642.5px;width:665px;height:1px;background:repeating-linear-gradient(90deg,#6f8f73 0 3px,transparent 3px 6px);"></div>
<div style="left:1464px;top:643px;width:149px;height:29px;overflow:hidden;">
<div style="top:9.37px;height:14.97px;line-height:14.97px;font-family:'Liberation Sans', sans-serif;font-size:13.4px;color:#000;white-space:nowrap;font-weight:700;-webkit-text-stroke:0.2px #000;left:5px;transform:scaleX(1.04);transform-origin:left;">Netflix</div>
</div>
<div style="top:652.37px;height:14.97px;line-height:14.97px;font-family:'Liberation Sans', sans-serif;font-size:13.4px;color:#000;white-space:nowrap;left:645.5px;width:2000px;text-align:center;transform:scaleX(1.12);transform-origin:center;">1st</div>
<div style="top:652.28px;height:15.08px;line-height:15.08px;font-family:'Liberation Sans', sans-serif;font-size:13.5px;color:#000;white-space:nowrap;left:700px;width:2000px;text-align:center;">₱</div>
<div style="top:652.37px;height:14.97px;line-height:14.97px;font-family:'Liberation Sans', sans-serif;font-size:13.4px;color:#000;white-space:nowrap;left:767.5px;width:2000px;text-align:center;transform:scaleX(0.96);transform-origin:center;">249.00</div>
<div style="top:652.28px;height:15.08px;line-height:15.08px;font-family:'Liberation Sans', sans-serif;font-size:13.5px;color:#000;white-space:nowrap;left:835px;width:2000px;text-align:center;">₱</div>
<div style="top:652.37px;height:14.97px;line-height:14.97px;font-family:'Liberation Sans', sans-serif;font-size:13.4px;color:#000;white-space:nowrap;left:898.5px;width:2000px;text-align:center;transform:scaleX(0.96);transform-origin:center;">-</div>
<div style="top:652.28px;height:15.08px;line-height:15.08px;font-family:'Liberation Sans', sans-serif;font-size:13.5px;color:#000;white-space:nowrap;font-weight:700;-webkit-text-stroke:0.2px #000;font-style:italic;left:961.5px;width:2000px;text-align:center;">₱</div>
<div style="top:652.37px;height:14.97px;line-height:14.97px;font-family:'Liberation Sans', sans-serif;font-size:13.4px;color:#274e13;white-space:nowrap;font-weight:700;-webkit-text-stroke:0.2px #274e13;font-style:italic;left:1026.5px;width:2000px;text-align:center;transform:scaleX(0.99);transform-origin:center;">-249.00</div>
<div style="left:2092.9px;top:651px;width:14.5px;height:14.5px;border:1.7px solid #587a5c;border-radius:2px;"></div>
<div style="left:1464px;top:671.5px;width:665px;height:1px;background:repeating-linear-gradient(90deg,#6f8f73 0 3px,transparent 3px 6px);"></div>
<div style="left:1464px;top:672px;width:149px;height:29px;overflow:hidden;">
<div style="top:9.37px;height:14.97px;line-height:14.97px;font-family:'Liberation Sans', sans-serif;font-size:13.4px;color:#000;white-space:nowrap;font-weight:700;-webkit-text-stroke:0.2px #000;left:5px;transform:scaleX(1.04);transform-origin:left;">iCloud Storage</div>
</div>
<div style="top:681.37px;height:14.97px;line-height:14.97px;font-family:'Liberation Sans', sans-serif;font-size:13.4px;color:#000;white-space:nowrap;left:645.5px;width:2000px;text-align:center;transform:scaleX(1.12);transform-origin:center;">1st</div>
<div style="top:681.28px;height:15.08px;line-height:15.08px;font-family:'Liberation Sans', sans-serif;font-size:13.5px;color:#000;white-space:nowrap;left:700px;width:2000px;text-align:center;">₱</div>
<div style="top:681.37px;height:14.97px;line-height:14.97px;font-family:'Liberation Sans', sans-serif;font-size:13.4px;color:#000;white-space:nowrap;left:767.5px;width:2000px;text-align:center;transform:scaleX(0.96);transform-origin:center;">179.00</div>
<div style="top:681.28px;height:15.08px;line-height:15.08px;font-family:'Liberation Sans', sans-serif;font-size:13.5px;color:#000;white-space:nowrap;left:835px;width:2000px;text-align:center;">₱</div>
<div style="top:681.37px;height:14.97px;line-height:14.97px;font-family:'Liberation Sans', sans-serif;font-size:13.4px;color:#000;white-space:nowrap;left:898.5px;width:2000px;text-align:center;transform:scaleX(0.96);transform-origin:center;">179.00</div>
<div style="top:681.28px;height:15.08px;line-height:15.08px;font-family:'Liberation Sans', sans-serif;font-size:13.5px;color:#000;white-space:nowrap;font-weight:700;-webkit-text-stroke:0.2px #000;font-style:italic;left:961.5px;width:2000px;text-align:center;">₱</div>
<div style="top:681.37px;height:14.97px;line-height:14.97px;font-family:'Liberation Sans', sans-serif;font-size:13.4px;color:#274e13;white-space:nowrap;font-weight:700;-webkit-text-stroke:0.2px #274e13;font-style:italic;left:1026.5px;width:2000px;text-align:center;transform:scaleX(0.99);transform-origin:center;">0.00</div>
<div style="left:2092.9px;top:680px;width:14.5px;height:14.5px;border:1.7px solid #587a5c;border-radius:2px;"></div>
<div style="left:1464px;top:700.5px;width:665px;height:1px;background:repeating-linear-gradient(90deg,#6f8f73 0 3px,transparent 3px 6px);"></div>
<div style="top:710.28px;height:15.08px;line-height:15.08px;font-family:'Liberation Sans', sans-serif;font-size:13.5px;color:#000;white-space:nowrap;font-weight:700;-webkit-text-stroke:0.2px #000;font-style:italic;left:961.5px;width:2000px;text-align:center;">₱</div>
<div style="top:710.37px;height:14.97px;line-height:14.97px;font-family:'Liberation Sans', sans-serif;font-size:13.4px;color:#274e13;white-space:nowrap;font-weight:700;-webkit-text-stroke:0.2px #274e13;font-style:italic;left:1026.5px;width:2000px;text-align:center;transform:scaleX(0.99);transform-origin:center;">0.00</div>
<div style="left:2092.9px;top:709px;width:14.5px;height:14.5px;border:1.7px solid #587a5c;border-radius:2px;"></div>
<div style="left:1464px;top:729.5px;width:665px;height:1px;background:repeating-linear-gradient(90deg,#6f8f73 0 3px,transparent 3px 6px);"></div>
<div style="top:739.28px;height:15.08px;line-height:15.08px;font-family:'Liberation Sans', sans-serif;font-size:13.5px;color:#000;white-space:nowrap;font-weight:700;-webkit-text-stroke:0.2px #000;font-style:italic;left:961.5px;width:2000px;text-align:center;">₱</div>
<div style="top:739.37px;height:14.97px;line-height:14.97px;font-family:'Liberation Sans', sans-serif;font-size:13.4px;color:#274e13;white-space:nowrap;font-weight:700;-webkit-text-stroke:0.2px #274e13;font-style:italic;left:1026.5px;width:2000px;text-align:center;transform:scaleX(0.99);transform-origin:center;">0.00</div>
<div style="left:2092.9px;top:738px;width:14.5px;height:14.5px;border:1.7px solid #587a5c;border-radius:2px;"></div>
<div style="left:1464px;top:758.5px;width:665px;height:1px;background:repeating-linear-gradient(90deg,#6f8f73 0 3px,transparent 3px 6px);"></div>
<div style="top:768.28px;height:15.08px;line-height:15.08px;font-family:'Liberation Sans', sans-serif;font-size:13.5px;color:#000;white-space:nowrap;font-weight:700;-webkit-text-stroke:0.2px #000;font-style:italic;left:961.5px;width:2000px;text-align:center;">₱</div>
<div style="top:768.37px;height:14.97px;line-height:14.97px;font-family:'Liberation Sans', sans-serif;font-size:13.4px;color:#274e13;white-space:nowrap;font-weight:700;-webkit-text-stroke:0.2px #274e13;font-style:italic;left:1026.5px;width:2000px;text-align:center;transform:scaleX(0.99);transform-origin:center;">0.00</div>
<div style="left:2092.9px;top:767px;width:14.5px;height:14.5px;border:1.7px solid #587a5c;border-radius:2px;"></div>
<div style="left:1464px;top:787.5px;width:665px;height:1px;background:repeating-linear-gradient(90deg,#6f8f73 0 3px,transparent 3px 6px);"></div>
<div style="top:797.28px;height:15.08px;line-height:15.08px;font-family:'Liberation Sans', sans-serif;font-size:13.5px;color:#000;white-space:nowrap;font-weight:700;-webkit-text-stroke:0.2px #000;font-style:italic;left:961.5px;width:2000px;text-align:center;">₱</div>
<div style="top:797.37px;height:14.97px;line-height:14.97px;font-family:'Liberation Sans', sans-serif;font-size:13.4px;color:#274e13;white-space:nowrap;font-weight:700;-webkit-text-stroke:0.2px #274e13;font-style:italic;left:1026.5px;width:2000px;text-align:center;transform:scaleX(0.99);transform-origin:center;">0.00</div>
<div style="left:2092.9px;top:796px;width:14.5px;height:14.5px;border:1.7px solid #587a5c;border-radius:2px;"></div>
<div style="left:1464px;top:816.5px;width:665px;height:1px;background:repeating-linear-gradient(90deg,#6f8f73 0 3px,transparent 3px 6px);"></div>
<div style="top:826.28px;height:15.08px;line-height:15.08px;font-family:'Liberation Sans', sans-serif;font-size:13.5px;color:#000;white-space:nowrap;font-weight:700;-webkit-text-stroke:0.2px #000;font-style:italic;left:961.5px;width:2000px;text-align:center;">₱</div>
<div style="top:826.37px;height:14.97px;line-height:14.97px;font-family:'Liberation Sans', sans-serif;font-size:13.4px;color:#274e13;white-space:nowrap;font-weight:700;-webkit-text-stroke:0.2px #274e13;font-style:italic;left:1026.5px;width:2000px;text-align:center;transform:scaleX(0.99);transform-origin:center;">0.00</div>
<div style="left:2092.9px;top:825px;width:14.5px;height:14.5px;border:1.7px solid #587a5c;border-radius:2px;"></div>
<div style="left:1464px;top:845.5px;width:665px;height:1px;background:repeating-linear-gradient(90deg,#6f8f73 0 3px,transparent 3px 6px);"></div>
<div style="top:855.28px;height:15.08px;line-height:15.08px;font-family:'Liberation Sans', sans-serif;font-size:13.5px;color:#000;white-space:nowrap;font-weight:700;-webkit-text-stroke:0.2px #000;font-style:italic;left:961.5px;width:2000px;text-align:center;">₱</div>
<div style="top:855.37px;height:14.97px;line-height:14.97px;font-family:'Liberation Sans', sans-serif;font-size:13.4px;color:#274e13;white-space:nowrap;font-weight:700;-webkit-text-stroke:0.2px #274e13;font-style:italic;left:1026.5px;width:2000px;text-align:center;transform:scaleX(0.99);transform-origin:center;">0.00</div>
<div style="left:2092.9px;top:854px;width:14.5px;height:14.5px;border:1.7px solid #587a5c;border-radius:2px;"></div>
<div style="left:1464px;top:874.5px;width:665px;height:1px;background:repeating-linear-gradient(90deg,#6f8f73 0 3px,transparent 3px 6px);"></div>
<div style="top:884.28px;height:15.08px;line-height:15.08px;font-family:'Liberation Sans', sans-serif;font-size:13.5px;color:#000;white-space:nowrap;font-weight:700;-webkit-text-stroke:0.2px #000;font-style:italic;left:961.5px;width:2000px;text-align:center;">₱</div>
<div style="top:884.37px;height:14.97px;line-height:14.97px;font-family:'Liberation Sans', sans-serif;font-size:13.4px;color:#274e13;white-space:nowrap;font-weight:700;-webkit-text-stroke:0.2px #274e13;font-style:italic;left:1026.5px;width:2000px;text-align:center;transform:scaleX(0.99);transform-origin:center;">0.00</div>
<div style="left:2092.9px;top:883px;width:14.5px;height:14.5px;border:1.7px solid #587a5c;border-radius:2px;"></div>
<div style="left:1464px;top:903.5px;width:665px;height:1px;background:repeating-linear-gradient(90deg,#6f8f73 0 3px,transparent 3px 6px);"></div>
<div style="top:913.28px;height:15.08px;line-height:15.08px;font-family:'Liberation Sans', sans-serif;font-size:13.5px;color:#000;white-space:nowrap;font-weight:700;-webkit-text-stroke:0.2px #000;font-style:italic;left:961.5px;width:2000px;text-align:center;">₱</div>
<div style="top:913.37px;height:14.97px;line-height:14.97px;font-family:'Liberation Sans', sans-serif;font-size:13.4px;color:#274e13;white-space:nowrap;font-weight:700;-webkit-text-stroke:0.2px #274e13;font-style:italic;left:1026.5px;width:2000px;text-align:center;transform:scaleX(0.99);transform-origin:center;">0.00</div>
<div style="left:2092.9px;top:912px;width:14.5px;height:14.5px;border:1.7px solid #587a5c;border-radius:2px;"></div>
<div style="left:1464px;top:932.5px;width:665px;height:1px;background:repeating-linear-gradient(90deg,#6f8f73 0 3px,transparent 3px 6px);"></div>
<div style="top:942.28px;height:15.08px;line-height:15.08px;font-family:'Liberation Sans', sans-serif;font-size:13.5px;color:#000;white-space:nowrap;font-weight:700;-webkit-text-stroke:0.2px #000;font-style:italic;left:961.5px;width:2000px;text-align:center;">₱</div>
<div style="top:942.37px;height:14.97px;line-height:14.97px;font-family:'Liberation Sans', sans-serif;font-size:13.4px;color:#274e13;white-space:nowrap;font-weight:700;-webkit-text-stroke:0.2px #274e13;font-style:italic;left:1026.5px;width:2000px;text-align:center;transform:scaleX(0.99);transform-origin:center;">0.00</div>
<div style="left:2092.9px;top:941px;width:14.5px;height:14.5px;border:1.7px solid #587a5c;border-radius:2px;"></div>
<div style="left:1464px;top:961.5px;width:665px;height:1px;background:repeating-linear-gradient(90deg,#6f8f73 0 3px,transparent 3px 6px);"></div>
<div style="top:971.28px;height:15.08px;line-height:15.08px;font-family:'Liberation Sans', sans-serif;font-size:13.5px;color:#000;white-space:nowrap;font-weight:700;-webkit-text-stroke:0.2px #000;font-style:italic;left:961.5px;width:2000px;text-align:center;">₱</div>
<div style="top:971.37px;height:14.97px;line-height:14.97px;font-family:'Liberation Sans', sans-serif;font-size:13.4px;color:#274e13;white-space:nowrap;font-weight:700;-webkit-text-stroke:0.2px #274e13;font-style:italic;left:1026.5px;width:2000px;text-align:center;transform:scaleX(0.99);transform-origin:center;">0.00</div>
<div style="left:2092.9px;top:970px;width:14.5px;height:14.5px;border:1.7px solid #587a5c;border-radius:2px;"></div>
<div style="left:1464px;top:990.5px;width:665px;height:1px;background:repeating-linear-gradient(90deg,#6f8f73 0 3px,transparent 3px 6px);"></div>
<div style="top:1000.28px;height:15.08px;line-height:15.08px;font-family:'Liberation Sans', sans-serif;font-size:13.5px;color:#000;white-space:nowrap;font-weight:700;-webkit-text-stroke:0.2px #000;font-style:italic;left:961.5px;width:2000px;text-align:center;">₱</div>
<div style="top:1000.37px;height:14.97px;line-height:14.97px;font-family:'Liberation Sans', sans-serif;font-size:13.4px;color:#274e13;white-space:nowrap;font-weight:700;-webkit-text-stroke:0.2px #274e13;font-style:italic;left:1026.5px;width:2000px;text-align:center;transform:scaleX(0.99);transform-origin:center;">0.00</div>
<div style="left:2092.9px;top:999px;width:14.5px;height:14.5px;border:1.7px solid #587a5c;border-radius:2px;"></div>
<div style="left:1464px;top:1019.5px;width:665px;height:1px;background:repeating-linear-gradient(90deg,#6f8f73 0 3px,transparent 3px 6px);"></div>
<div style="top:1029.28px;height:15.08px;line-height:15.08px;font-family:'Liberation Sans', sans-serif;font-size:13.5px;color:#000;white-space:nowrap;font-weight:700;-webkit-text-stroke:0.2px #000;font-style:italic;left:961.5px;width:2000px;text-align:center;">₱</div>
<div style="top:1029.37px;height:14.97px;line-height:14.97px;font-family:'Liberation Sans', sans-serif;font-size:13.4px;color:#274e13;white-space:nowrap;font-weight:700;-webkit-text-stroke:0.2px #274e13;font-style:italic;left:1026.5px;width:2000px;text-align:center;transform:scaleX(0.99);transform-origin:center;">0.00</div>
<div style="left:2092.9px;top:1028px;width:14.5px;height:14.5px;border:1.7px solid #587a5c;border-radius:2px;"></div>
<div style="left:1464px;top:1048.5px;width:665px;height:1px;background:repeating-linear-gradient(90deg,#6f8f73 0 3px,transparent 3px 6px);"></div>
<div style="left:1612.5px;top:579px;width:1px;height:467px;background:repeating-linear-gradient(180deg,#6f8f73 0 2px,transparent 2px 4px);"></div>
<div style="left:1677.5px;top:579px;width:1px;height:467px;background:repeating-linear-gradient(180deg,#6f8f73 0 2px,transparent 2px 4px);"></div>
<div style="left:1812.5px;top:579px;width:1px;height:467px;background:repeating-linear-gradient(180deg,#6f8f73 0 2px,transparent 2px 4px);"></div>
<div style="left:1939.5px;top:579px;width:1px;height:467px;background:#6f8f73;"></div>
<div style="left:2069.5px;top:579px;width:1px;height:467px;background:#6f8f73;"></div>
<div style="left:1464px;top:538px;width:666px;height:518px;border:1px solid #6f8f73;"></div>
<div style="left:2166px;top:538px;width:665px;height:41px;background:#73907a;"></div>
<div style="top:548.85px;height:21.78px;line-height:21.78px;font-family:'Liberation Sans', sans-serif;font-size:19.5px;color:#f5f3ee;white-space:nowrap;font-weight:700;-webkit-text-stroke:0.2px #f5f3ee;letter-spacing:4.5px;left:1498.5px;width:2000px;text-align:center;text-indent:4.5px;transform:scaleX(1.12);transform-origin:center;">EXPENSES</div>
<div style="left:2166px;top:579px;width:665px;height:35px;background:#d9d9d9;"></div>
<div style="left:2166px;top:614px;width:476px;height:432px;background:#ffffff;"></div>
<div style="left:2642px;top:614px;width:130px;height:432px;background:#d6e1d6;"></div>
<div style="left:2772px;top:614px;width:59px;height:432px;background:#e5ebe5;"></div>
<div style="top:589.96px;height:14.86px;line-height:14.86px;font-family:'Liberation Sans', sans-serif;font-size:13.3px;color:#000;white-space:nowrap;font-style:italic;left:1240.5px;width:2000px;text-align:center;transform:scaleX(1.07);transform-origin:center;">Expenses Category</div>
<div style="top:589.96px;height:14.86px;line-height:14.86px;font-family:'Liberation Sans', sans-serif;font-size:13.3px;color:#000;white-space:nowrap;font-style:italic;left:1347.5px;width:2000px;text-align:center;transform:scaleX(1.04);transform-origin:center;">Due Date</div>
<div style="top:589.69px;height:15.19px;line-height:15.19px;font-family:'Liberation Sans', sans-serif;font-size:13.6px;color:#000;white-space:nowrap;font-weight:700;-webkit-text-stroke:0.2px #000;letter-spacing:2.6px;left:1447.5px;width:2000px;text-align:center;text-indent:2.6px;transform:scaleX(1.05);transform-origin:center;">BUDGETED</div>
<div style="top:589.69px;height:15.19px;line-height:15.19px;font-family:'Liberation Sans', sans-serif;font-size:13.6px;color:#000;white-space:nowrap;font-weight:700;-webkit-text-stroke:0.2px #000;letter-spacing:2.6px;left:1578.5px;width:2000px;text-align:center;text-indent:2.6px;transform:scaleX(1.05);transform-origin:center;">ACTUAL</div>
<div style="top:589.69px;height:15.19px;line-height:15.19px;font-family:'Liberation Sans', sans-serif;font-size:13.6px;color:#000;white-space:nowrap;font-weight:700;-webkit-text-stroke:0.2px #000;letter-spacing:2.6px;left:1707px;width:2000px;text-align:center;text-indent:2.6px;transform:scaleX(1.05);transform-origin:center;">VARIANCE</div>
<div style="top:589.96px;height:14.86px;line-height:14.86px;font-family:'Liberation Sans', sans-serif;font-size:13.3px;color:#000;white-space:nowrap;font-style:italic;left:1801.5px;width:2000px;text-align:center;transform:scaleX(1.04);transform-origin:center;">Paid</div>
<div style="left:2166px;top:614px;width:149px;height:29px;overflow:hidden;">
<div style="top:9.37px;height:14.97px;line-height:14.97px;font-family:'Liberation Sans', sans-serif;font-size:13.4px;color:#000;white-space:nowrap;font-weight:700;-webkit-text-stroke:0.2px #000;left:5px;transform:scaleX(1.04);transform-origin:left;">Food</div>
</div>
<div style="top:623.28px;height:15.08px;line-height:15.08px;font-family:'Liberation Sans', sans-serif;font-size:13.5px;color:#000;white-space:nowrap;left:1402px;width:2000px;text-align:center;">₱</div>
<div style="top:623.37px;height:14.97px;line-height:14.97px;font-family:'Liberation Sans', sans-serif;font-size:13.4px;color:#000;white-space:nowrap;left:1469.5px;width:2000px;text-align:center;transform:scaleX(0.96);transform-origin:center;">10,000.00</div>
<div style="top:623.28px;height:15.08px;line-height:15.08px;font-family:'Liberation Sans', sans-serif;font-size:13.5px;color:#000;white-space:nowrap;left:1537px;width:2000px;text-align:center;">₱</div>
<div style="top:623.37px;height:14.97px;line-height:14.97px;font-family:'Liberation Sans', sans-serif;font-size:13.4px;color:#000;white-space:nowrap;left:1600.5px;width:2000px;text-align:center;transform:scaleX(0.96);transform-origin:center;">4,710.89</div>
<div style="top:623.28px;height:15.08px;line-height:15.08px;font-family:'Liberation Sans', sans-serif;font-size:13.5px;color:#000;white-space:nowrap;font-weight:700;-webkit-text-stroke:0.2px #000;font-style:italic;left:1663.5px;width:2000px;text-align:center;">₱</div>
<div style="top:623.37px;height:14.97px;line-height:14.97px;font-family:'Liberation Sans', sans-serif;font-size:13.4px;color:#274e13;white-space:nowrap;font-weight:700;-webkit-text-stroke:0.2px #274e13;font-style:italic;left:1728.5px;width:2000px;text-align:center;transform:scaleX(0.99);transform-origin:center;">-5,289.11</div>
<div style="left:2794.9px;top:622px;width:14.5px;height:14.5px;border:1.7px solid #587a5c;border-radius:2px;"></div>
<div style="left:2166px;top:642.5px;width:665px;height:1px;background:repeating-linear-gradient(90deg,#6f8f73 0 3px,transparent 3px 6px);"></div>
<div style="left:2166px;top:643px;width:149px;height:29px;overflow:hidden;">
<div style="top:9.37px;height:14.97px;line-height:14.97px;font-family:'Liberation Sans', sans-serif;font-size:13.4px;color:#000;white-space:nowrap;font-weight:700;-webkit-text-stroke:0.2px #000;left:5px;transform:scaleX(1.04);transform-origin:left;">Pet Care</div>
</div>
<div style="top:652.28px;height:15.08px;line-height:15.08px;font-family:'Liberation Sans', sans-serif;font-size:13.5px;color:#000;white-space:nowrap;left:1402px;width:2000px;text-align:center;">₱</div>
<div style="top:652.37px;height:14.97px;line-height:14.97px;font-family:'Liberation Sans', sans-serif;font-size:13.4px;color:#000;white-space:nowrap;left:1469.5px;width:2000px;text-align:center;transform:scaleX(0.96);transform-origin:center;">2,500.00</div>
<div style="top:652.28px;height:15.08px;line-height:15.08px;font-family:'Liberation Sans', sans-serif;font-size:13.5px;color:#000;white-space:nowrap;left:1537px;width:2000px;text-align:center;">₱</div>
<div style="top:652.37px;height:14.97px;line-height:14.97px;font-family:'Liberation Sans', sans-serif;font-size:13.4px;color:#000;white-space:nowrap;left:1600.5px;width:2000px;text-align:center;transform:scaleX(0.96);transform-origin:center;">1,309.00</div>
<div style="top:652.28px;height:15.08px;line-height:15.08px;font-family:'Liberation Sans', sans-serif;font-size:13.5px;color:#000;white-space:nowrap;font-weight:700;-webkit-text-stroke:0.2px #000;font-style:italic;left:1663.5px;width:2000px;text-align:center;">₱</div>
<div style="top:652.37px;height:14.97px;line-height:14.97px;font-family:'Liberation Sans', sans-serif;font-size:13.4px;color:#274e13;white-space:nowrap;font-weight:700;-webkit-text-stroke:0.2px #274e13;font-style:italic;left:1728.5px;width:2000px;text-align:center;transform:scaleX(0.99);transform-origin:center;">-1,191.00</div>
<div style="left:2794.9px;top:651px;width:14.5px;height:14.5px;border:1.7px solid #587a5c;border-radius:2px;"></div>
<div style="left:2166px;top:671.5px;width:665px;height:1px;background:repeating-linear-gradient(90deg,#6f8f73 0 3px,transparent 3px 6px);"></div>
<div style="left:2166px;top:672px;width:149px;height:29px;overflow:hidden;">
<div style="top:9.37px;height:14.97px;line-height:14.97px;font-family:'Liberation Sans', sans-serif;font-size:13.4px;color:#000;white-space:nowrap;font-weight:700;-webkit-text-stroke:0.2px #000;left:5px;transform:scaleX(1.04);transform-origin:left;">Mobile Load &amp; Data</div>
</div>
<div style="top:681.28px;height:15.08px;line-height:15.08px;font-family:'Liberation Sans', sans-serif;font-size:13.5px;color:#000;white-space:nowrap;left:1402px;width:2000px;text-align:center;">₱</div>
<div style="top:681.37px;height:14.97px;line-height:14.97px;font-family:'Liberation Sans', sans-serif;font-size:13.4px;color:#000;white-space:nowrap;left:1469.5px;width:2000px;text-align:center;transform:scaleX(0.96);transform-origin:center;">500.00</div>
<div style="top:681.28px;height:15.08px;line-height:15.08px;font-family:'Liberation Sans', sans-serif;font-size:13.5px;color:#000;white-space:nowrap;left:1537px;width:2000px;text-align:center;">₱</div>
<div style="top:681.37px;height:14.97px;line-height:14.97px;font-family:'Liberation Sans', sans-serif;font-size:13.4px;color:#000;white-space:nowrap;left:1600.5px;width:2000px;text-align:center;transform:scaleX(0.96);transform-origin:center;">560.00</div>
<div style="top:681.28px;height:15.08px;line-height:15.08px;font-family:'Liberation Sans', sans-serif;font-size:13.5px;color:#000;white-space:nowrap;font-weight:700;-webkit-text-stroke:0.2px #000;font-style:italic;left:1663.5px;width:2000px;text-align:center;">₱</div>
<div style="top:681.37px;height:14.97px;line-height:14.97px;font-family:'Liberation Sans', sans-serif;font-size:13.4px;color:#e34b35;white-space:nowrap;font-weight:700;-webkit-text-stroke:0.2px #e34b35;font-style:italic;left:1728.5px;width:2000px;text-align:center;transform:scaleX(0.99);transform-origin:center;">60.00</div>
<div style="left:2794.9px;top:680px;width:14.5px;height:14.5px;border:1.7px solid #587a5c;border-radius:2px;"></div>
<div style="left:2166px;top:700.5px;width:665px;height:1px;background:repeating-linear-gradient(90deg,#6f8f73 0 3px,transparent 3px 6px);"></div>
<div style="left:2166px;top:701px;width:149px;height:29px;overflow:hidden;">
<div style="top:9.37px;height:14.97px;line-height:14.97px;font-family:'Liberation Sans', sans-serif;font-size:13.4px;color:#000;white-space:nowrap;font-weight:700;-webkit-text-stroke:0.2px #000;left:5px;transform:scaleX(1.04);transform-origin:left;">Medical/Health Care</div>
</div>
<div style="top:710.28px;height:15.08px;line-height:15.08px;font-family:'Liberation Sans', sans-serif;font-size:13.5px;color:#000;white-space:nowrap;left:1402px;width:2000px;text-align:center;">₱</div>
<div style="top:710.28px;height:15.08px;line-height:15.08px;font-family:'Liberation Sans', sans-serif;font-size:13.5px;color:#000;white-space:nowrap;left:1537px;width:2000px;text-align:center;">₱</div>
<div style="top:710.37px;height:14.97px;line-height:14.97px;font-family:'Liberation Sans', sans-serif;font-size:13.4px;color:#000;white-space:nowrap;left:1600.5px;width:2000px;text-align:center;transform:scaleX(0.96);transform-origin:center;">692.00</div>
<div style="top:710.28px;height:15.08px;line-height:15.08px;font-family:'Liberation Sans', sans-serif;font-size:13.5px;color:#000;white-space:nowrap;font-weight:700;-webkit-text-stroke:0.2px #000;font-style:italic;left:1663.5px;width:2000px;text-align:center;">₱</div>
<div style="top:710.37px;height:14.97px;line-height:14.97px;font-family:'Liberation Sans', sans-serif;font-size:13.4px;color:#e34b35;white-space:nowrap;font-weight:700;-webkit-text-stroke:0.2px #e34b35;font-style:italic;left:1728.5px;width:2000px;text-align:center;transform:scaleX(0.99);transform-origin:center;">692.00</div>
<div style="left:2794.9px;top:709px;width:14.5px;height:14.5px;border:1.7px solid #587a5c;border-radius:2px;"></div>
<div style="left:2166px;top:729.5px;width:665px;height:1px;background:repeating-linear-gradient(90deg,#6f8f73 0 3px,transparent 3px 6px);"></div>
<div style="left:2166px;top:730px;width:149px;height:29px;overflow:hidden;">
<div style="top:9.37px;height:14.97px;line-height:14.97px;font-family:'Liberation Sans', sans-serif;font-size:13.4px;color:#000;white-space:nowrap;font-weight:700;-webkit-text-stroke:0.2px #000;left:5px;transform:scaleX(1.04);transform-origin:left;">Transportation</div>
</div>
<div style="top:739.28px;height:15.08px;line-height:15.08px;font-family:'Liberation Sans', sans-serif;font-size:13.5px;color:#000;white-space:nowrap;left:1402px;width:2000px;text-align:center;">₱</div>
<div style="top:739.37px;height:14.97px;line-height:14.97px;font-family:'Liberation Sans', sans-serif;font-size:13.4px;color:#000;white-space:nowrap;left:1469.5px;width:2000px;text-align:center;transform:scaleX(0.96);transform-origin:center;">1,500.00</div>
<div style="top:739.28px;height:15.08px;line-height:15.08px;font-family:'Liberation Sans', sans-serif;font-size:13.5px;color:#000;white-space:nowrap;left:1537px;width:2000px;text-align:center;">₱</div>
<div style="top:739.37px;height:14.97px;line-height:14.97px;font-family:'Liberation Sans', sans-serif;font-size:13.4px;color:#000;white-space:nowrap;left:1600.5px;width:2000px;text-align:center;transform:scaleX(0.96);transform-origin:center;">4,636.00</div>
<div style="top:739.28px;height:15.08px;line-height:15.08px;font-family:'Liberation Sans', sans-serif;font-size:13.5px;color:#000;white-space:nowrap;font-weight:700;-webkit-text-stroke:0.2px #000;font-style:italic;left:1663.5px;width:2000px;text-align:center;">₱</div>
<div style="top:739.37px;height:14.97px;line-height:14.97px;font-family:'Liberation Sans', sans-serif;font-size:13.4px;color:#e34b35;white-space:nowrap;font-weight:700;-webkit-text-stroke:0.2px #e34b35;font-style:italic;left:1728.5px;width:2000px;text-align:center;transform:scaleX(0.99);transform-origin:center;">3,136.00</div>
<div style="left:2794.9px;top:738px;width:14.5px;height:14.5px;border:1.7px solid #587a5c;border-radius:2px;"></div>
<div style="left:2166px;top:758.5px;width:665px;height:1px;background:repeating-linear-gradient(90deg,#6f8f73 0 3px,transparent 3px 6px);"></div>
<div style="left:2166px;top:759px;width:149px;height:29px;overflow:hidden;">
<div style="top:9.37px;height:14.97px;line-height:14.97px;font-family:'Liberation Sans', sans-serif;font-size:13.4px;color:#000;white-space:nowrap;font-weight:700;-webkit-text-stroke:0.2px #000;left:5px;transform:scaleX(1.04);transform-origin:left;">Personal Care</div>
</div>
<div style="top:768.28px;height:15.08px;line-height:15.08px;font-family:'Liberation Sans', sans-serif;font-size:13.5px;color:#000;white-space:nowrap;left:1402px;width:2000px;text-align:center;">₱</div>
<div style="top:768.37px;height:14.97px;line-height:14.97px;font-family:'Liberation Sans', sans-serif;font-size:13.4px;color:#000;white-space:nowrap;left:1469.5px;width:2000px;text-align:center;transform:scaleX(0.96);transform-origin:center;">1,000.00</div>
<div style="top:768.28px;height:15.08px;line-height:15.08px;font-family:'Liberation Sans', sans-serif;font-size:13.5px;color:#000;white-space:nowrap;left:1537px;width:2000px;text-align:center;">₱</div>
<div style="top:768.37px;height:14.97px;line-height:14.97px;font-family:'Liberation Sans', sans-serif;font-size:13.4px;color:#000;white-space:nowrap;left:1600.5px;width:2000px;text-align:center;transform:scaleX(0.96);transform-origin:center;">798.00</div>
<div style="top:768.28px;height:15.08px;line-height:15.08px;font-family:'Liberation Sans', sans-serif;font-size:13.5px;color:#000;white-space:nowrap;font-weight:700;-webkit-text-stroke:0.2px #000;font-style:italic;left:1663.5px;width:2000px;text-align:center;">₱</div>
<div style="top:768.37px;height:14.97px;line-height:14.97px;font-family:'Liberation Sans', sans-serif;font-size:13.4px;color:#274e13;white-space:nowrap;font-weight:700;-webkit-text-stroke:0.2px #274e13;font-style:italic;left:1728.5px;width:2000px;text-align:center;transform:scaleX(0.99);transform-origin:center;">-202.00</div>
<div style="left:2794.9px;top:767px;width:14.5px;height:14.5px;border:1.7px solid #587a5c;border-radius:2px;"></div>
<div style="left:2166px;top:787.5px;width:665px;height:1px;background:repeating-linear-gradient(90deg,#6f8f73 0 3px,transparent 3px 6px);"></div>
<div style="left:2166px;top:788px;width:149px;height:29px;overflow:hidden;">
<div style="top:9.37px;height:14.97px;line-height:14.97px;font-family:'Liberation Sans', sans-serif;font-size:13.4px;color:#000;white-space:nowrap;font-weight:700;-webkit-text-stroke:0.2px #000;left:5px;transform:scaleX(1.04);transform-origin:left;">Entertainment/Leisure</div>
</div>
<div style="top:797.28px;height:15.08px;line-height:15.08px;font-family:'Liberation Sans', sans-serif;font-size:13.5px;color:#000;white-space:nowrap;left:1402px;width:2000px;text-align:center;">₱</div>
<div style="top:797.37px;height:14.97px;line-height:14.97px;font-family:'Liberation Sans', sans-serif;font-size:13.4px;color:#000;white-space:nowrap;left:1469.5px;width:2000px;text-align:center;transform:scaleX(0.96);transform-origin:center;">1,000.00</div>
<div style="top:797.28px;height:15.08px;line-height:15.08px;font-family:'Liberation Sans', sans-serif;font-size:13.5px;color:#000;white-space:nowrap;left:1537px;width:2000px;text-align:center;">₱</div>
<div style="top:797.37px;height:14.97px;line-height:14.97px;font-family:'Liberation Sans', sans-serif;font-size:13.4px;color:#000;white-space:nowrap;left:1600.5px;width:2000px;text-align:center;transform:scaleX(0.96);transform-origin:center;">1,530.98</div>
<div style="top:797.28px;height:15.08px;line-height:15.08px;font-family:'Liberation Sans', sans-serif;font-size:13.5px;color:#000;white-space:nowrap;font-weight:700;-webkit-text-stroke:0.2px #000;font-style:italic;left:1663.5px;width:2000px;text-align:center;">₱</div>
<div style="top:797.37px;height:14.97px;line-height:14.97px;font-family:'Liberation Sans', sans-serif;font-size:13.4px;color:#e34b35;white-space:nowrap;font-weight:700;-webkit-text-stroke:0.2px #e34b35;font-style:italic;left:1728.5px;width:2000px;text-align:center;transform:scaleX(0.99);transform-origin:center;">530.98</div>
<div style="left:2794.9px;top:796px;width:14.5px;height:14.5px;border:1.7px solid #587a5c;border-radius:2px;"></div>
<div style="left:2166px;top:816.5px;width:665px;height:1px;background:repeating-linear-gradient(90deg,#6f8f73 0 3px,transparent 3px 6px);"></div>
<div style="left:2166px;top:817px;width:149px;height:29px;overflow:hidden;">
<div style="top:9.37px;height:14.97px;line-height:14.97px;font-family:'Liberation Sans', sans-serif;font-size:13.4px;color:#000;white-space:nowrap;font-weight:700;-webkit-text-stroke:0.2px #000;left:5px;transform:scaleX(1.04);transform-origin:left;">Education/Hobby</div>
</div>
<div style="top:826.28px;height:15.08px;line-height:15.08px;font-family:'Liberation Sans', sans-serif;font-size:13.5px;color:#000;white-space:nowrap;left:1402px;width:2000px;text-align:center;">₱</div>
<div style="top:826.28px;height:15.08px;line-height:15.08px;font-family:'Liberation Sans', sans-serif;font-size:13.5px;color:#000;white-space:nowrap;left:1537px;width:2000px;text-align:center;">₱</div>
<div style="top:826.37px;height:14.97px;line-height:14.97px;font-family:'Liberation Sans', sans-serif;font-size:13.4px;color:#000;white-space:nowrap;left:1600.5px;width:2000px;text-align:center;transform:scaleX(0.96);transform-origin:center;">-</div>
<div style="top:826.28px;height:15.08px;line-height:15.08px;font-family:'Liberation Sans', sans-serif;font-size:13.5px;color:#000;white-space:nowrap;font-weight:700;-webkit-text-stroke:0.2px #000;font-style:italic;left:1663.5px;width:2000px;text-align:center;">₱</div>
<div style="top:826.37px;height:14.97px;line-height:14.97px;font-family:'Liberation Sans', sans-serif;font-size:13.4px;color:#274e13;white-space:nowrap;font-weight:700;-webkit-text-stroke:0.2px #274e13;font-style:italic;left:1728.5px;width:2000px;text-align:center;transform:scaleX(0.99);transform-origin:center;">0.00</div>
<div style="left:2794.9px;top:825px;width:14.5px;height:14.5px;border:1.7px solid #587a5c;border-radius:2px;"></div>
<div style="left:2166px;top:845.5px;width:665px;height:1px;background:repeating-linear-gradient(90deg,#6f8f73 0 3px,transparent 3px 6px);"></div>
<div style="left:2166px;top:846px;width:149px;height:29px;overflow:hidden;">
<div style="top:9.37px;height:14.97px;line-height:14.97px;font-family:'Liberation Sans', sans-serif;font-size:13.4px;color:#000;white-space:nowrap;font-weight:700;-webkit-text-stroke:0.2px #000;left:5px;transform:scaleX(1.04);transform-origin:left;">Clothing</div>
</div>
<div style="top:855.28px;height:15.08px;line-height:15.08px;font-family:'Liberation Sans', sans-serif;font-size:13.5px;color:#000;white-space:nowrap;left:1402px;width:2000px;text-align:center;">₱</div>
<div style="top:855.28px;height:15.08px;line-height:15.08px;font-family:'Liberation Sans', sans-serif;font-size:13.5px;color:#000;white-space:nowrap;left:1537px;width:2000px;text-align:center;">₱</div>
<div style="top:855.37px;height:14.97px;line-height:14.97px;font-family:'Liberation Sans', sans-serif;font-size:13.4px;color:#000;white-space:nowrap;left:1600.5px;width:2000px;text-align:center;transform:scaleX(0.96);transform-origin:center;">5,277.00</div>
<div style="top:855.28px;height:15.08px;line-height:15.08px;font-family:'Liberation Sans', sans-serif;font-size:13.5px;color:#000;white-space:nowrap;font-weight:700;-webkit-text-stroke:0.2px #000;font-style:italic;left:1663.5px;width:2000px;text-align:center;">₱</div>
<div style="top:855.37px;height:14.97px;line-height:14.97px;font-family:'Liberation Sans', sans-serif;font-size:13.4px;color:#e34b35;white-space:nowrap;font-weight:700;-webkit-text-stroke:0.2px #e34b35;font-style:italic;left:1728.5px;width:2000px;text-align:center;transform:scaleX(0.99);transform-origin:center;">5,277.00</div>
<div style="left:2794.9px;top:854px;width:14.5px;height:14.5px;border:1.7px solid #587a5c;border-radius:2px;"></div>
<div style="left:2166px;top:874.5px;width:665px;height:1px;background:repeating-linear-gradient(90deg,#6f8f73 0 3px,transparent 3px 6px);"></div>
<div style="left:2166px;top:875px;width:149px;height:29px;overflow:hidden;">
<div style="top:9.37px;height:14.97px;line-height:14.97px;font-family:'Liberation Sans', sans-serif;font-size:13.4px;color:#000;white-space:nowrap;font-weight:700;-webkit-text-stroke:0.2px #000;left:5px;transform:scaleX(1.04);transform-origin:left;">Laundry</div>
</div>
<div style="top:884.28px;height:15.08px;line-height:15.08px;font-family:'Liberation Sans', sans-serif;font-size:13.5px;color:#000;white-space:nowrap;left:1402px;width:2000px;text-align:center;">₱</div>
<div style="top:884.37px;height:14.97px;line-height:14.97px;font-family:'Liberation Sans', sans-serif;font-size:13.4px;color:#000;white-space:nowrap;left:1469.5px;width:2000px;text-align:center;transform:scaleX(0.96);transform-origin:center;">1,000.00</div>
<div style="top:884.28px;height:15.08px;line-height:15.08px;font-family:'Liberation Sans', sans-serif;font-size:13.5px;color:#000;white-space:nowrap;left:1537px;width:2000px;text-align:center;">₱</div>
<div style="top:884.37px;height:14.97px;line-height:14.97px;font-family:'Liberation Sans', sans-serif;font-size:13.4px;color:#000;white-space:nowrap;left:1600.5px;width:2000px;text-align:center;transform:scaleX(0.96);transform-origin:center;">2,362.00</div>
<div style="top:884.28px;height:15.08px;line-height:15.08px;font-family:'Liberation Sans', sans-serif;font-size:13.5px;color:#000;white-space:nowrap;font-weight:700;-webkit-text-stroke:0.2px #000;font-style:italic;left:1663.5px;width:2000px;text-align:center;">₱</div>
<div style="top:884.37px;height:14.97px;line-height:14.97px;font-family:'Liberation Sans', sans-serif;font-size:13.4px;color:#e34b35;white-space:nowrap;font-weight:700;-webkit-text-stroke:0.2px #e34b35;font-style:italic;left:1728.5px;width:2000px;text-align:center;transform:scaleX(0.99);transform-origin:center;">1,362.00</div>
<div style="left:2794.9px;top:883px;width:14.5px;height:14.5px;border:1.7px solid #587a5c;border-radius:2px;"></div>
<div style="left:2166px;top:903.5px;width:665px;height:1px;background:repeating-linear-gradient(90deg,#6f8f73 0 3px,transparent 3px 6px);"></div>
<div style="left:2166px;top:904px;width:149px;height:29px;overflow:hidden;">
<div style="top:9.37px;height:14.97px;line-height:14.97px;font-family:'Liberation Sans', sans-serif;font-size:13.4px;color:#000;white-space:nowrap;font-weight:700;-webkit-text-stroke:0.2px #000;left:5px;transform:scaleX(1.04);transform-origin:left;">Travel Expenses</div>
</div>
<div style="top:913.28px;height:15.08px;line-height:15.08px;font-family:'Liberation Sans', sans-serif;font-size:13.5px;color:#000;white-space:nowrap;left:1402px;width:2000px;text-align:center;">₱</div>
<div style="top:913.28px;height:15.08px;line-height:15.08px;font-family:'Liberation Sans', sans-serif;font-size:13.5px;color:#000;white-space:nowrap;left:1537px;width:2000px;text-align:center;">₱</div>
<div style="top:913.37px;height:14.97px;line-height:14.97px;font-family:'Liberation Sans', sans-serif;font-size:13.4px;color:#000;white-space:nowrap;left:1600.5px;width:2000px;text-align:center;transform:scaleX(0.96);transform-origin:center;">-</div>
<div style="top:913.28px;height:15.08px;line-height:15.08px;font-family:'Liberation Sans', sans-serif;font-size:13.5px;color:#000;white-space:nowrap;font-weight:700;-webkit-text-stroke:0.2px #000;font-style:italic;left:1663.5px;width:2000px;text-align:center;">₱</div>
<div style="top:913.37px;height:14.97px;line-height:14.97px;font-family:'Liberation Sans', sans-serif;font-size:13.4px;color:#274e13;white-space:nowrap;font-weight:700;-webkit-text-stroke:0.2px #274e13;font-style:italic;left:1728.5px;width:2000px;text-align:center;transform:scaleX(0.99);transform-origin:center;">0.00</div>
<div style="left:2794.9px;top:912px;width:14.5px;height:14.5px;border:1.7px solid #587a5c;border-radius:2px;"></div>
<div style="left:2166px;top:932.5px;width:665px;height:1px;background:repeating-linear-gradient(90deg,#6f8f73 0 3px,transparent 3px 6px);"></div>
<div style="left:2166px;top:933px;width:149px;height:29px;overflow:hidden;">
<div style="top:9.37px;height:14.97px;line-height:14.97px;font-family:'Liberation Sans', sans-serif;font-size:13.4px;color:#000;white-space:nowrap;font-weight:700;-webkit-text-stroke:0.2px #000;left:5px;transform:scaleX(1.04);transform-origin:left;">Restaurants &amp; Bars</div>
</div>
<div style="top:942.28px;height:15.08px;line-height:15.08px;font-family:'Liberation Sans', sans-serif;font-size:13.5px;color:#000;white-space:nowrap;left:1402px;width:2000px;text-align:center;">₱</div>
<div style="top:942.28px;height:15.08px;line-height:15.08px;font-family:'Liberation Sans', sans-serif;font-size:13.5px;color:#000;white-space:nowrap;left:1537px;width:2000px;text-align:center;">₱</div>
<div style="top:942.37px;height:14.97px;line-height:14.97px;font-family:'Liberation Sans', sans-serif;font-size:13.4px;color:#000;white-space:nowrap;left:1600.5px;width:2000px;text-align:center;transform:scaleX(0.96);transform-origin:center;">5,906.73</div>
<div style="top:942.28px;height:15.08px;line-height:15.08px;font-family:'Liberation Sans', sans-serif;font-size:13.5px;color:#000;white-space:nowrap;font-weight:700;-webkit-text-stroke:0.2px #000;font-style:italic;left:1663.5px;width:2000px;text-align:center;">₱</div>
<div style="top:942.37px;height:14.97px;line-height:14.97px;font-family:'Liberation Sans', sans-serif;font-size:13.4px;color:#e34b35;white-space:nowrap;font-weight:700;-webkit-text-stroke:0.2px #e34b35;font-style:italic;left:1728.5px;width:2000px;text-align:center;transform:scaleX(0.99);transform-origin:center;">5,906.73</div>
<div style="left:2794.9px;top:941px;width:14.5px;height:14.5px;border:1.7px solid #587a5c;border-radius:2px;"></div>
<div style="left:2166px;top:961.5px;width:665px;height:1px;background:repeating-linear-gradient(90deg,#6f8f73 0 3px,transparent 3px 6px);"></div>
<div style="left:2166px;top:962px;width:149px;height:29px;overflow:hidden;">
<div style="top:9.37px;height:14.97px;line-height:14.97px;font-family:'Liberation Sans', sans-serif;font-size:13.4px;color:#000;white-space:nowrap;font-weight:700;-webkit-text-stroke:0.2px #000;left:5px;transform:scaleX(1.04);transform-origin:left;">Household Supplies/Maintenance</div>
</div>
<div style="top:971.28px;height:15.08px;line-height:15.08px;font-family:'Liberation Sans', sans-serif;font-size:13.5px;color:#000;white-space:nowrap;left:1402px;width:2000px;text-align:center;">₱</div>
<div style="top:971.37px;height:14.97px;line-height:14.97px;font-family:'Liberation Sans', sans-serif;font-size:13.4px;color:#000;white-space:nowrap;left:1469.5px;width:2000px;text-align:center;transform:scaleX(0.96);transform-origin:center;">500.00</div>
<div style="top:971.28px;height:15.08px;line-height:15.08px;font-family:'Liberation Sans', sans-serif;font-size:13.5px;color:#000;white-space:nowrap;left:1537px;width:2000px;text-align:center;">₱</div>
<div style="top:971.37px;height:14.97px;line-height:14.97px;font-family:'Liberation Sans', sans-serif;font-size:13.4px;color:#000;white-space:nowrap;left:1600.5px;width:2000px;text-align:center;transform:scaleX(0.96);transform-origin:center;">260.00</div>
<div style="top:971.28px;height:15.08px;line-height:15.08px;font-family:'Liberation Sans', sans-serif;font-size:13.5px;color:#000;white-space:nowrap;font-weight:700;-webkit-text-stroke:0.2px #000;font-style:italic;left:1663.5px;width:2000px;text-align:center;">₱</div>
<div style="top:971.37px;height:14.97px;line-height:14.97px;font-family:'Liberation Sans', sans-serif;font-size:13.4px;color:#274e13;white-space:nowrap;font-weight:700;-webkit-text-stroke:0.2px #274e13;font-style:italic;left:1728.5px;width:2000px;text-align:center;transform:scaleX(0.99);transform-origin:center;">-240.00</div>
<div style="left:2794.9px;top:970px;width:14.5px;height:14.5px;border:1.7px solid #587a5c;border-radius:2px;"></div>
<div style="left:2166px;top:990.5px;width:665px;height:1px;background:repeating-linear-gradient(90deg,#6f8f73 0 3px,transparent 3px 6px);"></div>
<div style="left:2166px;top:991px;width:149px;height:29px;overflow:hidden;">
<div style="top:9.37px;height:14.97px;line-height:14.97px;font-family:'Liberation Sans', sans-serif;font-size:13.4px;color:#000;white-space:nowrap;font-weight:700;-webkit-text-stroke:0.2px #000;left:5px;transform:scaleX(1.04);transform-origin:left;">Occasion</div>
</div>
<div style="top:1000.28px;height:15.08px;line-height:15.08px;font-family:'Liberation Sans', sans-serif;font-size:13.5px;color:#000;white-space:nowrap;left:1402px;width:2000px;text-align:center;">₱</div>
<div style="top:1000.37px;height:14.97px;line-height:14.97px;font-family:'Liberation Sans', sans-serif;font-size:13.4px;color:#000;white-space:nowrap;left:1469.5px;width:2000px;text-align:center;transform:scaleX(0.96);transform-origin:center;">1,000.00</div>
<div style="top:1000.28px;height:15.08px;line-height:15.08px;font-family:'Liberation Sans', sans-serif;font-size:13.5px;color:#000;white-space:nowrap;left:1537px;width:2000px;text-align:center;">₱</div>
<div style="top:1000.37px;height:14.97px;line-height:14.97px;font-family:'Liberation Sans', sans-serif;font-size:13.4px;color:#000;white-space:nowrap;left:1600.5px;width:2000px;text-align:center;transform:scaleX(0.96);transform-origin:center;">5,076.07</div>
<div style="top:1000.28px;height:15.08px;line-height:15.08px;font-family:'Liberation Sans', sans-serif;font-size:13.5px;color:#000;white-space:nowrap;font-weight:700;-webkit-text-stroke:0.2px #000;font-style:italic;left:1663.5px;width:2000px;text-align:center;">₱</div>
<div style="top:1000.37px;height:14.97px;line-height:14.97px;font-family:'Liberation Sans', sans-serif;font-size:13.4px;color:#e34b35;white-space:nowrap;font-weight:700;-webkit-text-stroke:0.2px #e34b35;font-style:italic;left:1728.5px;width:2000px;text-align:center;transform:scaleX(0.99);transform-origin:center;">4,076.07</div>
<div style="left:2794.9px;top:999px;width:14.5px;height:14.5px;border:1.7px solid #587a5c;border-radius:2px;"></div>
<div style="left:2166px;top:1019.5px;width:665px;height:1px;background:repeating-linear-gradient(90deg,#6f8f73 0 3px,transparent 3px 6px);"></div>
<div style="left:2166px;top:1020px;width:149px;height:29px;overflow:hidden;">
<div style="top:9.37px;height:14.97px;line-height:14.97px;font-family:'Liberation Sans', sans-serif;font-size:13.4px;color:#000;white-space:nowrap;font-weight:700;-webkit-text-stroke:0.2px #000;left:5px;transform:scaleX(1.04);transform-origin:left;">Miscellaneous</div>
</div>
<div style="top:1029.28px;height:15.08px;line-height:15.08px;font-family:'Liberation Sans', sans-serif;font-size:13.5px;color:#000;white-space:nowrap;left:1402px;width:2000px;text-align:center;">₱</div>
<div style="top:1029.28px;height:15.08px;line-height:15.08px;font-family:'Liberation Sans', sans-serif;font-size:13.5px;color:#000;white-space:nowrap;left:1537px;width:2000px;text-align:center;">₱</div>
<div style="top:1029.37px;height:14.97px;line-height:14.97px;font-family:'Liberation Sans', sans-serif;font-size:13.4px;color:#000;white-space:nowrap;left:1600.5px;width:2000px;text-align:center;transform:scaleX(0.96);transform-origin:center;">7,554.18</div>
<div style="top:1029.28px;height:15.08px;line-height:15.08px;font-family:'Liberation Sans', sans-serif;font-size:13.5px;color:#000;white-space:nowrap;font-weight:700;-webkit-text-stroke:0.2px #000;font-style:italic;left:1663.5px;width:2000px;text-align:center;">₱</div>
<div style="top:1029.37px;height:14.97px;line-height:14.97px;font-family:'Liberation Sans', sans-serif;font-size:13.4px;color:#e34b35;white-space:nowrap;font-weight:700;-webkit-text-stroke:0.2px #e34b35;font-style:italic;left:1728.5px;width:2000px;text-align:center;transform:scaleX(0.99);transform-origin:center;">7,554.18</div>
<div style="left:2794.9px;top:1028px;width:14.5px;height:14.5px;border:1.7px solid #587a5c;border-radius:2px;"></div>
<div style="left:2166px;top:1048.5px;width:665px;height:1px;background:repeating-linear-gradient(90deg,#6f8f73 0 3px,transparent 3px 6px);"></div>
<div style="left:2314.5px;top:579px;width:1px;height:467px;background:repeating-linear-gradient(180deg,#6f8f73 0 2px,transparent 2px 4px);"></div>
<div style="left:2379.5px;top:579px;width:1px;height:467px;background:repeating-linear-gradient(180deg,#6f8f73 0 2px,transparent 2px 4px);"></div>
<div style="left:2514.5px;top:579px;width:1px;height:467px;background:repeating-linear-gradient(180deg,#6f8f73 0 2px,transparent 2px 4px);"></div>
<div style="left:2641.5px;top:579px;width:1px;height:467px;background:#6f8f73;"></div>
<div style="left:2771.5px;top:579px;width:1px;height:467px;background:#6f8f73;"></div>
<div style="left:2166px;top:538px;width:666px;height:518px;border:1px solid #6f8f73;"></div>
<div style="left:765px;top:144px;width:599px;height:366px;border:1px solid #7a967f;"></div>
<div style="top:158.77px;height:33.21px;line-height:33.21px;font-family:'Liberation Serif', serif;font-size:30px;color:#2a4a1e;white-space:nowrap;font-weight:700;left:64.5px;width:2000px;text-align:center;transform:scaleX(1.05);transform-origin:center;">Monthly Spend Breakdown</div>
<svg style="position:absolute;left:765px;top:144px;" width="599" height="366" viewBox="0 0 599 366"><path fill="#a3bba5" d="M299.5 202.2L299.5 58.2A144 144 0 0 1 433.05 148.35Z"/><path fill="#4a5a4a" d="M299.5 202.2L433.05 148.35A144 144 0 0 1 433.39 149.19Z"/><path fill="#7f9884" d="M299.5 202.2L433.39 149.19A144 144 0 0 1 312.15 345.64Z"/><path fill="#bed5a9" d="M299.5 202.2L312.15 345.64A144 144 0 0 1 218.56 321.3Z"/><path fill="#c8d3c9" d="M299.5 202.2L218.56 321.3A144 144 0 0 1 299.5 58.2Z"/></svg>
<svg style="position:absolute;left:765px;top:144px;" width="599" height="366" viewBox="0 0 599 366"><path d="M376.8 88.5L579.7 88.5" stroke="#707070" stroke-width="1.3" fill="none"/><circle cx="376.8" cy="88.5" r="2.2" fill="#777"/><path d="M427.3 151.3L579.7 151.3" stroke="#707070" stroke-width="1.3" fill="none"/><circle cx="427.3" cy="151.3" r="2.2" fill="#777"/><path d="M416.3 274.2L579.7 274.2" stroke="#707070" stroke-width="1.3" fill="none"/><circle cx="416.3" cy="274.2" r="2.2" fill="#777"/><path d="M168.4 161.6L19 161.6" stroke="#707070" stroke-width="1.3" fill="none"/><circle cx="168.4" cy="161.6" r="2.2" fill="#777"/><path d="M264.9 334.7L19 330.9" stroke="#707070" stroke-width="1.3" fill="none"/><circle cx="264.9" cy="334.7" r="2.2" fill="#777"/></svg>
<div style="top:215.33px;height:16.61px;line-height:16.61px;font-family:'Liberation Serif', serif;font-size:15px;color:#111;white-space:nowrap;font-weight:700;left:-655.3px;width:2000px;text-align:right;transform:scaleX(1.08);transform-origin:right;">Bills</div>
<div style="top:232.33px;height:16.61px;line-height:16.61px;font-family:'Liberation Serif', serif;font-size:15px;color:#9a9a9a;white-space:nowrap;font-weight:700;left:-655.3px;width:2000px;text-align:right;transform:scaleX(1.04);transform-origin:right;">18.9%</div>
<div style="top:278.53px;height:16.61px;line-height:16.61px;font-family:'Liberation Serif', serif;font-size:15px;color:#111;white-space:nowrap;font-weight:700;left:-655.3px;width:2000px;text-align:right;transform:scaleX(1.08);transform-origin:right;">Subscriptions</div>
<div style="top:295.24px;height:16.61px;line-height:16.61px;font-family:'Liberation Serif', serif;font-size:15px;color:#9a9a9a;white-space:nowrap;font-weight:700;left:-655.3px;width:2000px;text-align:right;transform:scaleX(1.04);transform-origin:right;">0.1%</div>
<div style="top:401.43px;height:16.61px;line-height:16.61px;font-family:'Liberation Serif', serif;font-size:15px;color:#111;white-space:nowrap;font-weight:700;left:-655.3px;width:2000px;text-align:right;transform:scaleX(1.08);transform-origin:right;">Expenses</div>
<div style="top:418.84px;height:16.61px;line-height:16.61px;font-family:'Liberation Serif', serif;font-size:15px;color:#9a9a9a;white-space:nowrap;font-weight:700;left:-655.3px;width:2000px;text-align:right;transform:scaleX(1.04);transform-origin:right;">29.6%</div>
<div style="top:288.13px;height:16.61px;line-height:16.61px;font-family:'Liberation Serif', serif;font-size:15px;color:#111;white-space:nowrap;font-weight:700;left:784px;transform:scaleX(1.08);transform-origin:left;">Debt</div>
<div style="top:307.24px;height:16.61px;line-height:16.61px;font-family:'Liberation Serif', serif;font-size:15px;color:#9a9a9a;white-space:nowrap;font-weight:700;left:784px;transform:scaleX(1.04);transform-origin:left;">40.5%</div>
<div style="top:458.03px;height:16.61px;line-height:16.61px;font-family:'Liberation Serif', serif;font-size:15px;color:#111;white-space:nowrap;font-weight:700;left:784px;transform:scaleX(1.08);transform-origin:left;">Savings &amp; Invest...</div>
<div style="top:475.44px;height:16.61px;line-height:16.61px;font-family:'Liberation Serif', serif;font-size:15px;color:#9a9a9a;white-space:nowrap;font-weight:700;left:784px;transform:scaleX(1.04);transform-origin:left;">10.9%</div>
<div style="left:1393px;top:144px;width:976px;height:366px;border:1px solid #7a967f;"></div>
<div style="top:158.27px;height:33.21px;line-height:33.21px;font-family:'Liberation Serif', serif;font-size:30px;color:#2a4a1e;white-space:nowrap;font-weight:700;left:881px;width:2000px;text-align:center;transform:scaleX(1.05);transform-origin:center;">Budgeted VS. Actuals</div>
<div style="left:1854.5px;top:202px;width:16px;height:15.5px;background:#7f9884;border-radius:2px;"></div>
<div style="left:1891.8px;top:202px;width:16px;height:15.5px;background:#c8d3c9;border-radius:2px;"></div>
<div style="left:1496px;top:236.9px;width:855px;height:1.2px;background:#cfcfcf;"></div>
<div style="left:1496px;top:279.56px;width:855px;height:1.2px;background:#cfcfcf;"></div>
<div style="left:1496px;top:322.22px;width:855px;height:1.2px;background:#cfcfcf;"></div>
<div style="left:1496px;top:364.88px;width:855px;height:1.2px;background:#cfcfcf;"></div>
<div style="left:1496px;top:407.54px;width:855px;height:1.2px;background:#cfcfcf;"></div>
<div style="left:1496px;top:450px;width:855px;height:1.8px;background:#6b6b6b;"></div>
<div style="top:229.19px;height:17.16px;line-height:17.16px;font-family:'Liberation Serif', serif;font-size:15.5px;color:#111;white-space:nowrap;font-weight:700;left:-513px;width:2000px;text-align:right;transform:scaleX(1.37);transform-origin:right;">250,000</div>
<div style="top:271.85px;height:17.16px;line-height:17.16px;font-family:'Liberation Serif', serif;font-size:15.5px;color:#111;white-space:nowrap;font-weight:700;left:-513px;width:2000px;text-align:right;transform:scaleX(1.37);transform-origin:right;">200,000</div>
<div style="top:314.51px;height:17.16px;line-height:17.16px;font-family:'Liberation Serif', serif;font-size:15.5px;color:#111;white-space:nowrap;font-weight:700;left:-513px;width:2000px;text-align:right;transform:scaleX(1.37);transform-origin:right;">150,000</div>
<div style="top:357.17px;height:17.16px;line-height:17.16px;font-family:'Liberation Serif', serif;font-size:15.5px;color:#111;white-space:nowrap;font-weight:700;left:-513px;width:2000px;text-align:right;transform:scaleX(1.37);transform-origin:right;">100,000</div>
<div style="top:399.83px;height:17.16px;line-height:17.16px;font-family:'Liberation Serif', serif;font-size:15.5px;color:#111;white-space:nowrap;font-weight:700;left:-513px;width:2000px;text-align:right;transform:scaleX(1.37);transform-origin:right;">50,000</div>
<div style="top:442.49px;height:17.16px;line-height:17.16px;font-family:'Liberation Serif', serif;font-size:15.5px;color:#111;white-space:nowrap;font-weight:700;left:-513px;width:2000px;text-align:right;transform:scaleX(1.37);transform-origin:right;">0</div>
<div style="left:1543.2px;top:347.26px;width:41.6px;height:103.24px;background:#7f9884;border-radius:2px 2px 0 0;"></div>
<div style="left:1587.2px;top:273.59px;width:41.6px;height:176.91px;background:#c8d3c9;border-radius:2px 2px 0 0;"></div>
<div style="top:456.91px;height:19.37px;line-height:19.37px;font-family:'Liberation Serif', serif;font-size:17.5px;color:#111;white-space:nowrap;font-weight:700;left:587px;width:2000px;text-align:center;transform:scaleX(1.12);transform-origin:center;">Income</div>
<div style="left:1678.1px;top:425.07px;width:41.6px;height:25.43px;background:#7f9884;border-radius:2px 2px 0 0;"></div>
<div style="left:1722.1px;top:428.33px;width:41.6px;height:22.17px;background:#c8d3c9;border-radius:2px 2px 0 0;"></div>
<div style="top:456.91px;height:19.37px;line-height:19.37px;font-family:'Liberation Serif', serif;font-size:17.5px;color:#111;white-space:nowrap;font-weight:700;left:721.9px;width:2000px;text-align:center;transform:scaleX(1.12);transform-origin:center;">Bills</div>
<div style="top:456.91px;height:19.37px;line-height:19.37px;font-family:'Liberation Serif', serif;font-size:17.5px;color:#111;white-space:nowrap;font-weight:700;left:856.8px;width:2000px;text-align:center;transform:scaleX(1.12);transform-origin:center;">Subscriptions</div>
<div style="left:1947.9px;top:434.29px;width:41.6px;height:16.21px;background:#7f9884;border-radius:2px 2px 0 0;"></div>
<div style="left:1991.9px;top:415.8px;width:41.6px;height:34.7px;background:#c8d3c9;border-radius:2px 2px 0 0;"></div>
<div style="top:456.91px;height:19.37px;line-height:19.37px;font-family:'Liberation Serif', serif;font-size:17.5px;color:#111;white-space:nowrap;font-weight:700;left:991.7px;width:2000px;text-align:center;transform:scaleX(1.12);transform-origin:center;">Expenses</div>
<div style="left:2082.8px;top:437.7px;width:41.6px;height:12.8px;background:#7f9884;border-radius:2px 2px 0 0;"></div>
<div style="left:2126.8px;top:437.7px;width:41.6px;height:12.8px;background:#c8d3c9;border-radius:2px 2px 0 0;"></div>
<div style="top:456.91px;height:19.37px;line-height:19.37px;font-family:'Liberation Serif', serif;font-size:17.5px;color:#111;white-space:nowrap;font-weight:700;left:1126.6px;width:2000px;text-align:center;transform:scaleX(1.12);transform-origin:center;">Savings &amp;</div>
<div style="left:2217.7px;top:439.89px;width:41.6px;height:10.61px;background:#7f9884;border-radius:2px 2px 0 0;"></div>
<div style="left:2261.7px;top:403.01px;width:41.6px;height:47.49px;background:#c8d3c9;border-radius:2px 2px 0 0;"></div>
<div style="top:456.91px;height:19.37px;line-height:19.37px;font-family:'Liberation Serif', serif;font-size:17.5px;color:#111;white-space:nowrap;font-weight:700;left:1261.5px;width:2000px;text-align:center;transform:scaleX(1.12);transform-origin:center;">Debt</div>
<div style="top:470.91px;height:19.37px;line-height:19.37px;font-family:'Liberation Serif', serif;font-size:17.5px;color:#111;white-space:nowrap;font-weight:700;left:1126.6px;width:2000px;text-align:center;transform:scaleX(1.12);transform-origin:center;">Investments</div>
<div style="left:2395px;top:144px;width:600px;height:366px;border:1px solid #7a967f;"></div>
<div style="top:158.77px;height:33.21px;line-height:33.21px;font-family:'Liberation Serif', serif;font-size:30px;color:#2a4a1e;white-space:nowrap;font-weight:700;left:2534px;transform:scaleX(1.05);transform-origin:left;">Savings Breakdown</div>
<svg style="position:absolute;left:2395px;top:144px;" width="600" height="366" viewBox="0 0 600 366"><path fill="#d3e0d5" d="M273.7 58.2A108.5 108.5 0 0 1 367.68 220.93L320.47 193.69A54 54 0 0 0 273.7 112.7Z"/><path fill="#8fb08f" d="M367.68 220.93A108.5 108.5 0 0 1 296.3 272.82L284.95 219.52A54 54 0 0 0 320.47 193.69Z"/><path fill="#5aa55e" d="M296.3 272.82A108.5 108.5 0 0 1 179.76 220.99L226.95 193.72A54 54 0 0 0 284.95 219.52Z"/><path fill="#7f9884" d="M179.76 220.99A108.5 108.5 0 0 1 273.7 58.2L273.7 112.7A54 54 0 0 0 226.95 193.72Z"/></svg>
<div style="top:262.63px;height:16.61px;line-height:16.61px;font-family:'Liberation Serif', serif;font-size:15px;color:#111;white-space:nowrap;font-weight:700;left:1598.3px;width:2000px;text-align:center;transform:scaleX(1.02);transform-origin:center;">33.3%</div>
<div style="top:262.63px;height:16.61px;line-height:16.61px;font-family:'Liberation Serif', serif;font-size:15px;color:#111;white-space:nowrap;font-weight:700;left:1739px;width:2000px;text-align:center;transform:scaleX(1.02);transform-origin:center;">33.3%</div>
<div style="top:378.13px;height:16.61px;line-height:16.61px;font-family:'Liberation Serif', serif;font-size:15px;color:#111;white-space:nowrap;font-weight:700;left:1636px;width:2000px;text-align:center;transform:scaleX(1.02);transform-origin:center;">20.0%</div>
<div style="top:369.63px;height:16.61px;line-height:16.61px;font-family:'Liberation Serif', serif;font-size:15px;color:#111;white-space:nowrap;font-weight:700;left:1718px;width:2000px;text-align:center;transform:scaleX(1.02);transform-origin:center;">13.3%</div>
<div style="left:2414.1px;top:431.9px;width:15px;height:15px;background:#d3e0d5;border-radius:50%;"></div>
<div style="top:429.85px;height:18.82px;line-height:18.82px;font-family:'Liberation Serif', serif;font-size:17px;color:#222;white-space:nowrap;left:2440.5px;transform:scaleX(1.03);transform-origin:left;">General (Robinson's Bank-6190)</div>
<div style="left:2472.5px;top:453.5px;width:15px;height:15px;background:#8fb08f;border-radius:50%;"></div>
<div style="top:451.45px;height:18.82px;line-height:18.82px;font-family:'Liberation Serif', serif;font-size:17px;color:#222;white-space:nowrap;left:2498.8px;">Emergency (BDO Savings-8317)</div>
<div style="left:2587.5px;top:475.5px;width:15px;height:15px;background:#7f9884;border-radius:50%;"></div>
<div style="top:473.45px;height:18.82px;line-height:18.82px;font-family:'Liberation Serif', serif;font-size:17px;color:#222;white-space:nowrap;left:2613.8px;transform:scaleX(1.03);transform-origin:left;">Maya Time Deposit</div>
</div>
</body></html>
